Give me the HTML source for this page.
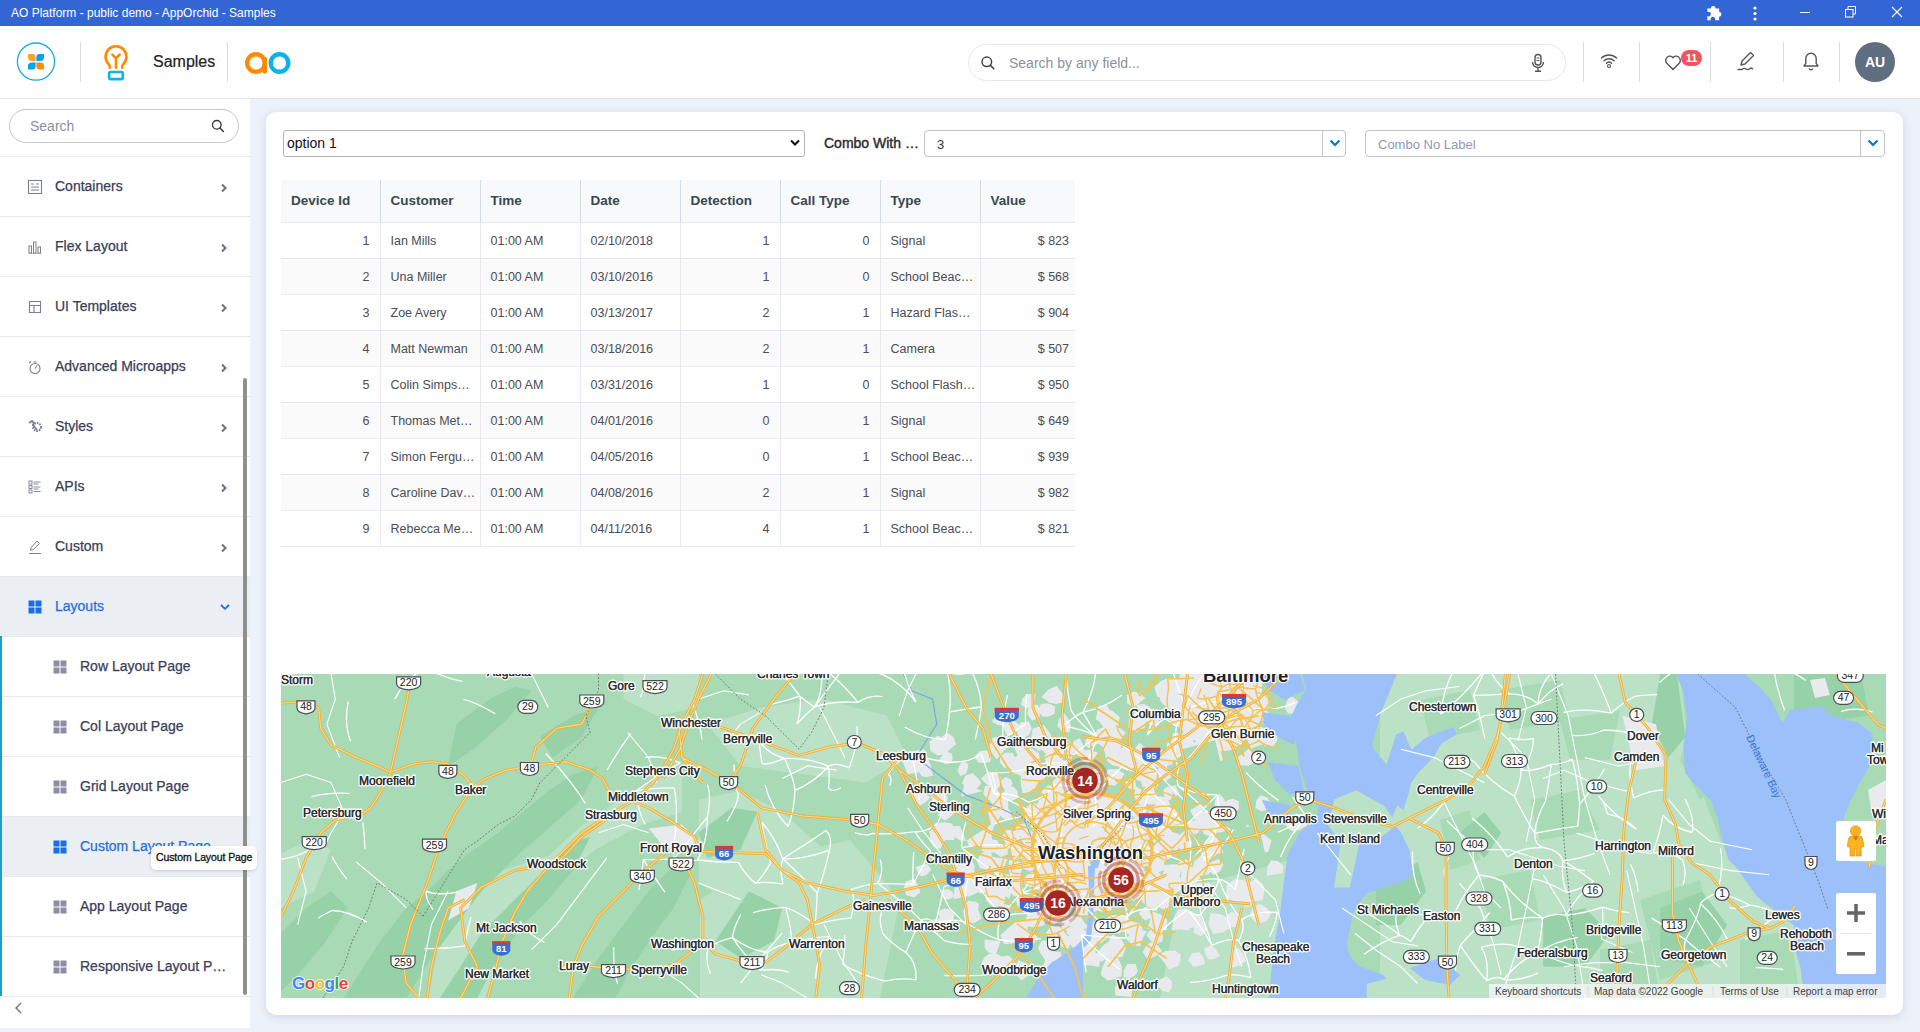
<!DOCTYPE html>
<html><head><meta charset="utf-8">
<style>
*{box-sizing:border-box;margin:0;padding:0}
html,body{width:1920px;height:1032px;overflow:hidden;font-family:"Liberation Sans",sans-serif;background:#edf1f9}
.abs{position:absolute}
#titlebar{position:absolute;left:0;top:0;width:1920px;height:26px;background:#3366d4;color:#fff;font-size:13px}
#titlebar .t{position:absolute;left:11px;top:6px;font-size:12px}
#header{position:absolute;left:0;top:26px;width:1920px;height:73px;background:#fff;border-bottom:1px solid #e3e5ea}
.vdiv{position:absolute;width:1px;background:#dcdde0}
#sidebar{position:absolute;left:0;top:99px;width:250px;height:929px;background:#fff}
.mi{position:absolute;left:0;width:250px;height:60px;border-bottom:1px solid #e6e9f3;color:#3a3d58;font-size:14px}
.mi .tx{position:absolute;left:55px;top:21px;-webkit-text-stroke:0.25px currentColor}
.mi.sub .tx{left:80px}
.mi.sel{background:#ebeef3;color:#1f6ee0}
.chev{position:absolute;left:221px;top:27px}
#card{position:absolute;left:266px;top:112px;width:1637px;height:903px;background:#fff;border-radius:10px;box-shadow:0 2px 8px rgba(150,160,195,0.35)}
table.g{position:absolute;left:281px;top:180px;border-collapse:collapse;table-layout:fixed;width:794px;font-size:12.5px;color:#4a4d55}
table.g th{height:42px;background:#f7f9fb;text-align:left;font-weight:bold;color:#3a4850;font-size:13.5px;padding:0 10px;border-right:1px solid #d3dde5;border-bottom:1px solid #e3e8ec}
table.g td{height:36px;padding:2px 10px 0 10px;border-right:1px solid #e6eaee;border-bottom:1px solid #e6eaee;white-space:nowrap}
table.g tr:nth-child(odd) td{background:#fafafa}
table.g td.r{text-align:right;padding-right:10px}
table.g td.r:last-child{padding-right:6px}
table.g th:last-child,table.g td:last-child{border-right:none}
</style></head><body>
<div id="titlebar"><span class="t">AO Platform - public demo - AppOrchid - Samples</span>
 <svg class="abs" style="left:1705px;top:2px" width="20" height="20" viewBox="0 0 17 17"><path d="M2 5.5 h3 a2 2 0 1 1 4 0 h3 v3 a2 2 0 1 1 0 4 v3 h-3.5 a2 2 0 1 0 -3.5 0 h-3 v-3.5 a2 2 0 1 0 0 -3.5z" fill="#fff"/></svg>
 <svg class="abs" style="left:1752px;top:5px" width="6" height="17" viewBox="0 0 6 17"><circle cx="3" cy="3" r="1.6" fill="#fff"/><circle cx="3" cy="8.5" r="1.6" fill="#fff"/><circle cx="3" cy="14" r="1.6" fill="#fff"/></svg>
 <div class="abs" style="left:1800px;top:12px;width:10px;height:1px;background:#fff"></div>
 <svg class="abs" style="left:1845px;top:6px" width="12" height="12" viewBox="0 0 12 12"><rect x="0.5" y="3.5" width="7.5" height="7.5" fill="none" stroke="#fff" stroke-width="1"/><path d="M3,3.5 V0.5 H10.5 V8 H8" fill="none" stroke="#fff" stroke-width="1"/></svg>
 <svg class="abs" style="left:1891px;top:6px" width="12" height="12" viewBox="0 0 12 12"><path d="M1 1 L11 11 M11 1 L1 11" stroke="#fff" stroke-width="1.1"/></svg>
</div>
<div id="header">
 <svg class="abs" style="left:16px;top:16px" width="40" height="40" viewBox="0 0 40 40">
  <circle cx="20" cy="19.6" r="18.6" fill="none" stroke="#1aaae8" stroke-width="1.3"/>
  <path d="M12,12 H16.3 Q19.6,12 19.6,15.3 V19.1 H15.8 Q12,19.1 12,15.5 Z" fill="#ffa227"/>
  <path d="M28,12 H23.7 Q20.4,12 20.4,15.3 V19.1 H24.2 Q28,19.1 28,15.5 Z" fill="#00a3ec"/>
  <path d="M12,27.5 H16.3 Q19.6,27.5 19.6,24.2 V20.4 H15.8 Q12,20.4 12,24 Z" fill="#00a3ec"/>
  <path d="M28,27.5 H23.7 Q20.4,27.5 20.4,24.2 V20.4 H24.2 Q28,20.4 28,24 Z" fill="#ff8a00"/>
 </svg>
 <div class="vdiv" style="left:80px;top:16px;height:40px"></div>
 <svg class="abs" style="left:100px;top:14px" width="32" height="44" viewBox="100 40 32 44">
  <path d="M109.8,67.8 V66.5 Q109.8,65.2 108.4,63.8 A10.4,10.4 0 1 1 123.6,63.8 Q122.2,65.2 122.2,66.5 V67.8" fill="none" stroke="#ff8a00" stroke-width="2.6" stroke-linecap="round"/>
  <path d="M112.4,54.6 L116,58.4 L119.6,54.6 M116,58.4 V67.8" fill="none" stroke="#ff8a00" stroke-width="2.6" stroke-linecap="round"/>
  <rect x="109.1" y="72" width="13.7" height="7.1" rx="1.6" fill="none" stroke="#0bb3ea" stroke-width="2.6"/>
 </svg>
 <div class="abs" style="left:153px;top:27px;font-size:16px;color:#222;-webkit-text-stroke:0.2px #222">Samples</div>
 <div class="vdiv" style="left:227px;top:16px;height:40px"></div>
 <svg class="abs" style="left:244px;top:25px" width="50" height="24" viewBox="0 0 50 24">
  <circle cx="12" cy="12" r="8.8" fill="none" stroke="#ff8a00" stroke-width="4.4"/>
  <path d="M20.8 8 v12.5" stroke="#ff8a00" stroke-width="4.4" stroke-linecap="round"/>
  <circle cx="35.5" cy="12" r="8.8" fill="none" stroke="#0bb3ea" stroke-width="4.4"/>
 </svg>
 <div class="abs" style="left:968px;top:18px;width:598px;height:37px;border:1px solid #e6e7ea;border-radius:19px"></div>
 <svg class="abs" style="left:980px;top:29px" width="16" height="16" viewBox="0 0 16 16"><circle cx="6.8" cy="6.8" r="4.8" fill="none" stroke="#444" stroke-width="1.5"/><path d="M10.4 10.4 l3.4 3.4" stroke="#444" stroke-width="1.6" stroke-linecap="round"/></svg>
 <div class="abs" style="left:1009px;top:29px;font-size:14px;color:#8c919c">Search by any field...</div>
 <svg class="abs" style="left:1528px;top:27px" width="20" height="20" viewBox="0 0 20 20"><rect x="7" y="1.5" width="6" height="10.5" rx="3" fill="none" stroke="#555" stroke-width="1.4"/><path d="M4.5 9 a5.5 5.5 0 0 0 11 0 M10 14.5 v3.5 M7 18.2 h6" fill="none" stroke="#555" stroke-width="1.4"/><path d="M8.5 5 h3 M8.5 7.5 h3" stroke="#555" stroke-width="1"/></svg>
 <div class="vdiv" style="left:1583px;top:16px;height:40px"></div>
 <svg class="abs" style="left:1599px;top:25px" width="20" height="18" viewBox="0 0 20 18"><path d="M2.5 7 a11 11 0 0 1 15 0 M5 9.8 a7 7 0 0 1 10 0 M7.5 12.3 a3.6 3.6 0 0 1 5 0" fill="none" stroke="#555" stroke-width="1.4" stroke-linecap="round"/><circle cx="10" cy="15" r="1.5" fill="none" stroke="#555" stroke-width="1.2"/></svg>
 <div class="vdiv" style="left:1639px;top:16px;height:40px"></div>
 <svg class="abs" style="left:1664px;top:28px" width="18" height="18" viewBox="0 0 18 18"><path d="M9 15.5 L2.6 9 a3.9 3.9 0 0 1 6.4 -5.2 a3.9 3.9 0 0 1 6.4 5.2 z" fill="none" stroke="#555" stroke-width="1.4" stroke-linejoin="round"/></svg>
 <div class="abs" style="left:1681px;top:24px;width:21px;height:16px;border-radius:8px;background:#f2545b;color:#fff;font-size:11px;font-weight:bold;text-align:center;line-height:16px">11</div>
 <div class="vdiv" style="left:1710px;top:16px;height:40px"></div>
 <svg class="abs" style="left:1736px;top:24px" width="22" height="22" viewBox="0 0 22 22"><path d="M14.5 2.5 l3 3 l-8.5 8.5 l-4 1 l1 -4 z" fill="none" stroke="#555" stroke-width="1.4" stroke-linejoin="round"/><path d="M2 19.5 h4 q2 -2 4 -0.5 q2 1.5 4 -0.5 q1 -1 2.5 0.3" fill="none" stroke="#555" stroke-width="1.4" stroke-linecap="round"/></svg>
 <div class="vdiv" style="left:1783px;top:16px;height:40px"></div>
 <svg class="abs" style="left:1801px;top:25px" width="20" height="21" viewBox="0 0 20 21"><path d="M3 15 h14 l-1.8 -2.6 v-5 a5.2 5.2 0 0 0 -10.4 0 v5 z" fill="none" stroke="#555" stroke-width="1.4" stroke-linejoin="round"/><path d="M8 17.5 a2.2 2.2 0 0 0 4 0" fill="none" stroke="#555" stroke-width="1.4"/></svg>
 <div class="vdiv" style="left:1839px;top:16px;height:40px"></div>
 <div class="abs" style="left:1855px;top:16px;width:40px;height:40px;border-radius:50%;background:#5f6e80;color:#fff;font-size:14px;font-weight:bold;text-align:center;line-height:40px">AU</div>
</div>
<div id="sidebar">
<div class="abs" style="left:9px;top:10px;width:230px;height:34px;border:1px solid #c6c6c6;border-radius:17px"></div><div class="abs" style="left:30px;top:19px;font-size:14px;color:#8b8fa0">Search</div><svg class="abs" style="left:210px;top:19px" width="16" height="16" viewBox="0 0 16 16"><circle cx="6.8" cy="6.8" r="4.3" fill="none" stroke="#333" stroke-width="1.3"/><path d="M9.9 9.9 l3.6 3.6" stroke="#333" stroke-width="1.4" stroke-linecap="round"/></svg><div class="abs" style="left:0;top:57px;width:250px;height:1px;background:#e6e9f3"></div><div class="mi" style="top:58px"><svg class="abs" style="left:27px;top:22px" width="16" height="16" viewBox="0 0 16 16"><rect x="1.5" y="1.5" width="13" height="13" fill="none" stroke="#7a7f96" stroke-width="1.1"/><path d="M4 5 h3 M9 5 h3 M4 8 h8 M4 11 h8" stroke="#7a7f96" stroke-width="1"/></svg><span class="tx">Containers</span><svg class="abs" style="left:219px;top:26px" width="10" height="10" viewBox="0 0 10 10"><path d="M3 1.5 L6.5 5 L3 8.5" fill="none" stroke="#6b6f85" stroke-width="2"/></svg></div>
<div class="mi" style="top:118px"><svg class="abs" style="left:27px;top:22px" width="16" height="16" viewBox="0 0 16 16"><rect x="2" y="7" width="2.5" height="7" fill="none" stroke="#7a7f96" stroke-width="1"/><rect x="6.5" y="3" width="2.5" height="11" fill="none" stroke="#7a7f96" stroke-width="1"/><rect x="11" y="8" width="2.5" height="6" fill="none" stroke="#7a7f96" stroke-width="1"/><path d="M1.5 14.5 h13" stroke="#b8a070" stroke-width="0.8"/></svg><span class="tx">Flex Layout</span><svg class="abs" style="left:219px;top:26px" width="10" height="10" viewBox="0 0 10 10"><path d="M3 1.5 L6.5 5 L3 8.5" fill="none" stroke="#6b6f85" stroke-width="2"/></svg></div>
<div class="mi" style="top:178px"><svg class="abs" style="left:27px;top:22px" width="16" height="16" viewBox="0 0 16 16"><rect x="2.5" y="2.5" width="11" height="11" fill="none" stroke="#7a7f96" stroke-width="1.1"/><path d="M2.5 6.5 h11 M7 6.5 v7" stroke="#7a7f96" stroke-width="1.1"/></svg><span class="tx">UI Templates</span><svg class="abs" style="left:219px;top:26px" width="10" height="10" viewBox="0 0 10 10"><path d="M3 1.5 L6.5 5 L3 8.5" fill="none" stroke="#6b6f85" stroke-width="2"/></svg></div>
<div class="mi" style="top:238px"><svg class="abs" style="left:27px;top:22px" width="16" height="16" viewBox="0 0 16 16"><circle cx="8" cy="9.5" r="5" fill="none" stroke="#7a7f96" stroke-width="1.1"/><path d="M8 9.5 l2 -3 M2 4 l2 -1.5 M6.5 3 h3" stroke="#7a7f96" stroke-width="1.1"/></svg><span class="tx">Advanced Microapps</span><svg class="abs" style="left:219px;top:26px" width="10" height="10" viewBox="0 0 10 10"><path d="M3 1.5 L6.5 5 L3 8.5" fill="none" stroke="#6b6f85" stroke-width="2"/></svg></div>
<div class="mi" style="top:298px"><svg class="abs" style="left:27px;top:22px" width="16" height="16" viewBox="0 0 16 16"><path d="M2 4 l3 -2 l2 2 l-1 2 l4 5" fill="none" stroke="#7a7f96" stroke-width="1.8"/><circle cx="10" cy="8" r="4" fill="none" stroke="#7a7f96" stroke-width="2" stroke-dasharray="1.6 1"/></svg><span class="tx">Styles</span><svg class="abs" style="left:219px;top:26px" width="10" height="10" viewBox="0 0 10 10"><path d="M3 1.5 L6.5 5 L3 8.5" fill="none" stroke="#6b6f85" stroke-width="2"/></svg></div>
<div class="mi" style="top:358px"><svg class="abs" style="left:27px;top:22px" width="16" height="16" viewBox="0 0 16 16"><rect x="2" y="2" width="3" height="3" fill="none" stroke="#7a7f96" stroke-width="0.9"/><rect x="2" y="6.5" width="3" height="3" fill="none" stroke="#7a7f96" stroke-width="0.9"/><rect x="2" y="11" width="3" height="3" fill="none" stroke="#7a7f96" stroke-width="0.9"/><path d="M6.5 3 h7 M6.5 5 h5 M6.5 8 h7 M6.5 10 h5 M6.5 12.5 h7" stroke="#7a7f96" stroke-width="0.9"/></svg><span class="tx">APIs</span><svg class="abs" style="left:219px;top:26px" width="10" height="10" viewBox="0 0 10 10"><path d="M3 1.5 L6.5 5 L3 8.5" fill="none" stroke="#6b6f85" stroke-width="2"/></svg></div>
<div class="mi" style="top:418px"><svg class="abs" style="left:27px;top:22px" width="16" height="16" viewBox="0 0 16 16"><path d="M10 2 l2.5 2.5 l-6 6 l-3 0.8 l0.8 -3 z" fill="none" stroke="#7a7f96" stroke-width="1"/><path d="M2 14.5 h12" stroke="#7a7f96" stroke-width="1"/></svg><span class="tx">Custom</span><svg class="abs" style="left:219px;top:26px" width="10" height="10" viewBox="0 0 10 10"><path d="M3 1.5 L6.5 5 L3 8.5" fill="none" stroke="#6b6f85" stroke-width="2"/></svg></div>
<div class="mi sel" style="top:478px"><svg class="abs" style="left:27px;top:22px" width="16" height="16" viewBox="0 0 16 16"><rect x="1.5" y="1.5" width="6" height="6" fill="#1a6fe6"/><rect x="8.5" y="1.5" width="6" height="6" fill="#1a6fe6"/><rect x="1.5" y="8.5" width="6" height="6" fill="#1a6fe6"/><rect x="8.5" y="8.5" width="6" height="6" fill="#1a6fe6"/></svg><span class="tx">Layouts</span><svg class="abs" style="left:219px;top:25px" width="12" height="10" viewBox="0 0 12 10"><path d="M2 3 L6 6.8 L10 3" fill="none" stroke="#1a6fe6" stroke-width="1.8"/></svg></div>
<div class="mi sub" style="top:538px"><svg class="abs" style="left:52px;top:22px" width="16" height="16" viewBox="0 0 16 16"><rect x="1.5" y="1.5" width="6" height="6" fill="#8c8ea6"/><rect x="8.5" y="1.5" width="6" height="6" fill="#8c8ea6"/><rect x="1.5" y="8.5" width="6" height="6" fill="#8c8ea6"/><rect x="8.5" y="8.5" width="6" height="6" fill="#8c8ea6"/></svg><span class="tx">Row Layout Page</span></div>
<div class="mi sub" style="top:598px"><svg class="abs" style="left:52px;top:22px" width="16" height="16" viewBox="0 0 16 16"><rect x="1.5" y="1.5" width="6" height="6" fill="#8c8ea6"/><rect x="8.5" y="1.5" width="6" height="6" fill="#8c8ea6"/><rect x="1.5" y="8.5" width="6" height="6" fill="#8c8ea6"/><rect x="8.5" y="8.5" width="6" height="6" fill="#8c8ea6"/></svg><span class="tx">Col Layout Page</span></div>
<div class="mi sub" style="top:658px"><svg class="abs" style="left:52px;top:22px" width="16" height="16" viewBox="0 0 16 16"><rect x="1.5" y="1.5" width="6" height="6" fill="#8c8ea6"/><rect x="8.5" y="1.5" width="6" height="6" fill="#8c8ea6"/><rect x="1.5" y="8.5" width="6" height="6" fill="#8c8ea6"/><rect x="8.5" y="8.5" width="6" height="6" fill="#8c8ea6"/></svg><span class="tx">Grid Layout Page</span></div>
<div class="mi sub sel" style="top:718px"><svg class="abs" style="left:52px;top:22px" width="16" height="16" viewBox="0 0 16 16"><rect x="1.5" y="1.5" width="6" height="6" fill="#1a6fe6"/><rect x="8.5" y="1.5" width="6" height="6" fill="#1a6fe6"/><rect x="1.5" y="8.5" width="6" height="6" fill="#1a6fe6"/><rect x="8.5" y="8.5" width="6" height="6" fill="#1a6fe6"/></svg><span class="tx">Custom Layout Page</span></div>
<div class="mi sub" style="top:778px"><svg class="abs" style="left:52px;top:22px" width="16" height="16" viewBox="0 0 16 16"><rect x="1.5" y="1.5" width="6" height="6" fill="#8c8ea6"/><rect x="8.5" y="1.5" width="6" height="6" fill="#8c8ea6"/><rect x="1.5" y="8.5" width="6" height="6" fill="#8c8ea6"/><rect x="8.5" y="8.5" width="6" height="6" fill="#8c8ea6"/></svg><span class="tx">App Layout Page</span></div>
<div class="mi sub" style="top:838px"><svg class="abs" style="left:52px;top:22px" width="16" height="16" viewBox="0 0 16 16"><rect x="1.5" y="1.5" width="6" height="6" fill="#8c8ea6"/><rect x="8.5" y="1.5" width="6" height="6" fill="#8c8ea6"/><rect x="1.5" y="8.5" width="6" height="6" fill="#8c8ea6"/><rect x="8.5" y="8.5" width="6" height="6" fill="#8c8ea6"/></svg><span class="tx">Responsive Layout P…</span></div>
<div class="abs" style="left:0;top:537px;width:2px;height:360px;background:#1ba1c4"></div><div class="abs" style="left:243px;top:279px;width:4px;height:617px;border-radius:2px;background:#8f8f8f"></div><svg class="abs" style="left:12px;top:902px" width="14" height="14" viewBox="0 0 14 14"><path d="M9 2 L4 7 L9 12" fill="none" stroke="#6b6f85" stroke-width="1.4"/></svg></div>
<div class="abs" style="left:151px;top:846px;width:106px;height:24px;background:#fff;border-radius:5px;box-shadow:0 1px 3px rgba(0,0,0,0.15);font-size:10.5px;color:#111;padding:5px 0 0 5px;white-space:nowrap;-webkit-text-stroke:0.3px #111;letter-spacing:-0.1px">Custom Layout Page</div>
<div id="card"></div>
<div id="content">
<div class="abs" style="left:283px;top:130px;width:522px;height:27px;border:1px solid #b5b5b5;border-radius:3px;background:#fff"></div><div class="abs" style="left:287px;top:135px;font-size:14px;color:#111">option 1</div><svg class="abs" style="left:789px;top:138px" width="12" height="10" viewBox="0 0 12 10"><path d="M2 2.5 L6 6.5 L10 2.5" fill="none" stroke="#111" stroke-width="2"/></svg><div class="abs" style="left:824px;top:135px;font-size:14px;color:#2b2b2b;-webkit-text-stroke:0.4px #2b2b2b">Combo With …</div><div class="abs" style="left:924px;top:130px;width:422px;height:27px;border:1px solid #c4c4c4;border-radius:4px;background:#fff"></div><div class="abs" style="left:1322px;top:131px;width:1px;height:25px;background:#c4c4c4"></div><svg class="abs" style="left:1329px;top:138px" width="12" height="10" viewBox="0 0 12 10"><path d="M1.5 2.5 L6 7 L10.5 2.5" fill="none" stroke="#0a78cc" stroke-width="2.2"/></svg><div class="abs" style="left:937px;top:137px;font-size:13px;color:#333">3</div><div class="abs" style="left:1365px;top:130px;width:520px;height:27px;border:1px solid #c4c4c4;border-radius:4px;background:#fff"></div><div class="abs" style="left:1860px;top:131px;width:1px;height:25px;background:#c4c4c4"></div><svg class="abs" style="left:1867px;top:138px" width="12" height="10" viewBox="0 0 12 10"><path d="M1.5 2.5 L6 7 L10.5 2.5" fill="none" stroke="#0a78cc" stroke-width="2.2"/></svg><div class="abs" style="left:1378px;top:137px;font-size:13px;color:#8d9ab3">Combo No Label</div><table class="g"><colgroup><col style="width:99px"><col style="width:100px"><col style="width:100px"><col style="width:100px"><col style="width:100px"><col style="width:100px"><col style="width:100px"><col style="width:95px"></colgroup><tr><th>Device Id</th><th>Customer</th><th>Time</th><th>Date</th><th>Detection</th><th>Call Type</th><th>Type</th><th>Value</th></tr><tr><td class="r">1</td><td>Ian Mills</td><td>01:00 AM</td><td>02/10/2018</td><td class="r">1</td><td class="r">0</td><td>Signal</td><td class="r">$ 823</td></tr><tr><td class="r">2</td><td>Una Miller</td><td>01:00 AM</td><td>03/10/2016</td><td class="r">1</td><td class="r">0</td><td>School Beac…</td><td class="r">$ 568</td></tr><tr><td class="r">3</td><td>Zoe Avery</td><td>01:00 AM</td><td>03/13/2017</td><td class="r">2</td><td class="r">1</td><td>Hazard Flas…</td><td class="r">$ 904</td></tr><tr><td class="r">4</td><td>Matt Newman</td><td>01:00 AM</td><td>03/18/2016</td><td class="r">2</td><td class="r">1</td><td>Camera</td><td class="r">$ 507</td></tr><tr><td class="r">5</td><td>Colin Simps…</td><td>01:00 AM</td><td>03/31/2016</td><td class="r">1</td><td class="r">0</td><td>School Flash…</td><td class="r">$ 950</td></tr><tr><td class="r">6</td><td>Thomas Met…</td><td>01:00 AM</td><td>04/01/2016</td><td class="r">0</td><td class="r">1</td><td>Signal</td><td class="r">$ 649</td></tr><tr><td class="r">7</td><td>Simon Fergu…</td><td>01:00 AM</td><td>04/05/2016</td><td class="r">0</td><td class="r">1</td><td>School Beac…</td><td class="r">$ 939</td></tr><tr><td class="r">8</td><td>Caroline Dav…</td><td>01:00 AM</td><td>04/08/2016</td><td class="r">2</td><td class="r">1</td><td>Signal</td><td class="r">$ 982</td></tr><tr><td class="r">9</td><td>Rebecca Me…</td><td>01:00 AM</td><td>04/11/2016</td><td class="r">4</td><td class="r">1</td><td>School Beac…</td><td class="r">$ 821</td></tr></table>
<div id="map" class="abs" style="left:281px;top:674px;width:1605px;height:324px;overflow:hidden"><svg style="position:absolute;left:0;top:0" width="1605" height="324" viewBox="281 674 1605 324" font-family="Liberation Sans, sans-serif">
<rect x="281" y="674" width="1605" height="324" fill="#a8dab5"/>
<polygon points="428.6,998.0 444.3,912.6 469.4,887.5 507.1,868.7 547.9,856.1 579.3,827.8 610.7,805.9 642.1,787.0 682.0,768.2 682.0,812.1 642.1,824.7 595.0,849.8 563.6,874.9 532.2,900.1 507.1,931.5 485.1,998.0" fill="#bbe2c6"/>
<polygon points="698.7,799.3 740.5,791.0 782.3,811.8 824.0,849.4 803.1,891.2 740.5,907.9 698.7,882.9" fill="#bbe2c6"/>
<polygon points="707.1,724.1 761.4,707.4 824.0,699.1 886.7,715.8 907.6,757.5 865.8,782.6 803.1,774.3 740.5,765.9" fill="#bbe2c6"/>
<polygon points="761.4,857.8 824.0,853.6 874.1,870.3 882.5,907.9 844.9,933.0 803.1,924.6 773.9,891.2" fill="#bbe2c6"/>
<polygon points="281.0,853.6 306.1,841.1 331.1,849.4 314.4,891.2 281.0,907.9" fill="#bbe2c6"/>
<polygon points="623.5,674.0 698.7,674.0 698.7,707.4 656.9,715.8 623.5,699.1" fill="#bbe2c6"/>
<polygon points="1451.0,791.1 1501.2,778.6 1564.0,782.7 1626.7,799.5 1668.5,820.4 1647.6,862.2 1584.9,874.8 1522.1,870.6 1480.3,849.7" fill="#bbe2c6"/>
<polygon points="1501.2,883.1 1564.0,891.5 1605.8,908.2 1584.9,945.9 1522.1,945.9 1492.9,916.6" fill="#bbe2c6"/>
<polygon points="1626.7,674.0 1676.9,674.0 1685.3,757.6 1660.2,791.1 1626.7,778.6" fill="#bbe2c6"/>
<polygon points="1380.0,674.0 1680.0,674.0 1690.0,760.0 1720.0,840.0 1760.0,900.0 1800.0,930.0 1810.0,998.0 1380.0,998.0" fill="#bbe2c6"/>
<polygon points="1180.0,890.0 1290.0,860.0 1290.0,998.0 1160.0,998.0" fill="#bbe2c6"/>
<polygon points="700.0,900.0 760.0,860.0 850.0,840.0 900.0,900.0 880.0,998.0 700.0,998.0" fill="#bbe2c6"/>
<polygon points="1420.0,700.0 1470.0,690.0 1480.0,730.0 1430.0,740.0" fill="#a8dab5"/>
<polygon points="1500.0,690.0 1560.0,680.0 1570.0,720.0 1510.0,730.0" fill="#a8dab5"/>
<polygon points="1530.0,800.0 1580.0,790.0 1600.0,830.0 1540.0,840.0" fill="#a8dab5"/>
<polygon points="1480.0,880.0 1530.0,870.0 1540.0,920.0 1490.0,930.0" fill="#a8dab5"/>
<polygon points="1640.0,900.0 1700.0,880.0 1720.0,960.0 1660.0,980.0" fill="#a8dab5"/>
<polygon points="1600.0,950.0 1650.0,940.0 1660.0,998.0 1600.0,998.0" fill="#a8dab5"/>
<polygon points="1700.0,690.0 1680.0,760.0 1700.0,800.0 1720.0,780.0" fill="#a8dab5"/>
<polygon points="1440.0,820.0 1470.0,810.0 1480.0,860.0 1450.0,870.0" fill="#a8dab5"/>
<polygon points="1560.0,720.0 1620.0,710.0 1610.0,760.0 1570.0,760.0" fill="#a8dab5"/>
<polygon points="1740.0,940.0 1790.0,930.0 1800.0,998.0 1740.0,998.0" fill="#a8dab5"/>
<polygon points="343.7,998.1 377.1,945.5 406.3,907.9 427.2,891.2 448.1,870.3 469.0,853.6 498.2,832.7 523.3,811.8 548.3,791.0 573.4,774.3 598.5,765.9 581.8,799.3 548.3,828.6 514.9,857.8 481.5,891.2 456.4,924.6 431.4,958.0 406.3,998.1" fill="#97d1a8"/>
<polygon points="439.7,998.1 460.6,966.4 481.5,933.0 506.6,907.9 531.6,882.9 556.7,857.8 573.4,841.1 590.1,836.9 573.4,870.3 548.3,899.6 523.3,924.6 498.2,958.0 477.3,998.1" fill="#97d1a8"/>
<polygon points="573.4,998.1 598.5,958.0 623.5,924.6 648.6,891.2 673.6,866.1 690.4,874.5 673.6,907.9 648.6,941.3 627.7,974.8 615.2,998.1" fill="#97d1a8"/>
<polygon points="281.0,933.0 306.1,907.9 331.1,891.2 347.8,907.9 322.8,945.5 297.7,974.8 281.0,991.5" fill="#97d1a8"/>
<polygon points="456.4,724.1 489.9,699.1 514.9,686.5 531.6,690.7 506.6,719.9 473.1,749.2 448.1,765.9" fill="#97d1a8"/>
<polygon points="540.0,736.7 573.4,715.8 598.5,707.4 581.8,736.7 552.5,757.5" fill="#97d1a8"/>
<polygon points="698.7,832.7 732.1,807.7 757.2,811.8 740.5,849.4 707.1,857.8" fill="#97d1a8"/>
<polygon points="748.8,891.2 782.3,907.9 773.9,941.3 740.5,958.0 715.4,941.3" fill="#97d1a8"/>
<polygon points="1375.8,883.1 1417.6,862.2 1426.0,891.5 1400.9,924.9 1375.8,924.9" fill="#97d1a8"/>
<polygon points="1543.1,916.6 1584.9,908.2 1610.0,933.3 1584.9,966.8 1543.1,966.8" fill="#97d1a8"/>
<polygon points="1660.2,908.2 1702.0,891.5 1727.1,924.9 1702.0,966.8 1660.2,958.4" fill="#97d1a8"/>
<polygon points="1660.2,674.0 1676.9,674.0 1685.3,736.7 1668.5,757.6 1651.8,724.2" fill="#97d1a8"/>
<polygon points="1794.0,674.0 1860.9,674.0 1869.3,715.8 1835.8,720.0 1794.0,711.6" fill="#97d1a8"/>
<polygon points="1459.4,832.9 1484.5,812.0 1501.2,832.9 1484.5,858.0" fill="#97d1a8"/>
<polygon points="899.2,753.4 924.3,749.2 932.6,770.1 907.6,774.3" fill="#e8eaed"/>
<polygon points="648.6,828.6 682.0,824.4 698.7,841.1 669.5,853.6" fill="#e8eaed"/>
<polygon points="456.4,891.2 477.3,882.9 469.0,907.9 448.1,920.4" fill="#e8eaed"/>
<polygon points="1622.5,715.8 1656.0,724.2 1664.3,766.0 1635.1,770.2" fill="#e8eaed"/>
<polygon points="1810.0,680.0 1825.0,678.0 1830.0,695.0 1815.0,698.0" fill="#e8eaed"/>
<polygon points="1868.0,790.0 1886.0,780.0 1886.0,810.0 1872.0,815.0" fill="#e8eaed"/>
<polygon points="1850.0,830.0 1870.0,825.0 1866.0,845.0 1852.0,848.0" fill="#e8eaed"/>
<polygon points="1040.0,800.0 1070.0,790.0 1110.0,795.0 1140.0,815.0 1150.0,850.0 1140.0,885.0 1110.0,905.0 1070.0,905.0 1040.0,885.0 1030.0,850.0" fill="#e8eaed"/>
<polygon points="1180.0,674.0 1262.0,674.0 1262.0,720.0 1240.0,740.0 1200.0,745.0 1170.0,720.0" fill="#e8eaed"/>
<path d="M913.9,878.8 L918.2,885.2 L920.5,892.2 L914.3,897.3 L906.7,895.4 L903.4,888.6 L906.1,881.4Z M926.7,777.2 L921.5,776.0 L918.3,770.7 L922.1,765.8 L927.9,764.8 L931.3,769.2 L933.2,775.5Z M920.0,805.7 L916.0,800.9 L911.9,794.0 L919.3,790.7 L924.7,793.5 L930.4,797.6 L925.3,802.5Z M915.6,866.9 L921.2,864.9 L927.0,863.8 L931.4,869.6 L926.7,874.8 L921.3,876.5 L917.5,872.6Z M930.4,751.1 L929.4,741.5 L937.4,735.7 L946.0,738.6 L952.9,746.4 L945.7,753.7 L937.9,755.5Z M930.5,795.5 L936.1,791.0 L942.1,792.4 L947.9,796.8 L946.5,805.4 L938.3,804.1 L933.0,802.0Z M943.2,843.2 L932.1,842.4 L929.1,831.7 L936.4,825.8 L943.2,823.4 L953.2,826.6 L947.9,835.6Z M943.6,843.0 L940.4,849.0 L934.0,846.9 L930.8,842.3 L929.7,834.6 L937.6,830.2 L946.7,834.2Z M932.4,932.6 L932.7,925.7 L933.7,918.9 L941.1,918.2 L943.5,924.3 L945.8,930.5 L939.2,931.5Z M956.1,744.3 L950.0,748.6 L943.0,749.8 L942.2,742.9 L941.4,737.3 L947.2,732.5 L953.4,737.1Z M950.8,763.2 L945.2,763.9 L938.7,760.8 L942.7,754.8 L946.6,751.8 L951.5,753.3 L952.7,758.2Z M945.0,820.8 L937.6,814.9 L941.2,807.1 L946.3,803.0 L951.9,805.6 L955.5,810.7 L951.7,815.9Z M944.6,822.3 L951.3,823.5 L957.2,829.9 L954.0,839.9 L943.5,840.2 L937.6,833.6 L934.4,823.7Z M954.6,896.6 L949.7,899.3 L944.7,899.8 L940.9,895.3 L943.2,889.8 L948.4,889.2 L952.2,891.5Z M953.4,919.4 L947.0,924.6 L940.4,919.6 L937.4,912.1 L944.3,908.6 L949.3,909.6 L955.0,912.5Z M965.9,773.8 L960.2,775.9 L957.6,770.4 L959.3,766.1 L962.7,760.8 L968.4,764.1 L967.6,769.6Z M968.1,841.3 L959.9,840.2 L952.0,835.4 L954.5,826.0 L963.0,825.7 L969.1,827.1 L974.6,834.3Z M958.6,870.4 L952.0,861.8 L962.8,860.4 L970.9,858.1 L974.8,866.4 L973.4,876.6 L963.1,876.3Z M950.5,884.1 L949.7,875.8 L952.1,869.4 L958.8,868.5 L968.1,870.5 L967.3,880.6 L959.7,886.8Z M954.2,889.5 L955.9,883.1 L962.4,881.7 L971.6,883.2 L973.4,894.0 L963.5,896.8 L954.0,899.2Z M976.4,789.2 L967.9,790.5 L962.0,783.3 L965.4,775.4 L972.4,773.3 L977.1,777.2 L981.6,783.0Z M974.7,805.0 L967.1,803.1 L961.1,796.3 L964.0,785.7 L974.3,788.2 L982.9,791.0 L983.9,801.5Z M983.1,838.5 L980.9,844.0 L976.0,846.8 L968.4,846.0 L966.4,837.7 L973.0,833.5 L979.3,833.5Z M967.0,871.9 L977.3,874.4 L986.1,877.6 L986.9,888.3 L977.5,892.6 L970.6,888.4 L967.2,882.5Z M977.3,892.7 L968.7,896.8 L959.8,893.2 L957.5,883.6 L963.8,876.3 L973.7,875.0 L980.5,883.0Z M978.3,908.8 L974.9,912.8 L969.3,912.1 L965.4,907.0 L967.9,900.5 L974.1,901.8 L979.0,903.6Z M965.1,920.2 L963.3,911.8 L965.9,902.4 L976.4,901.3 L978.5,910.6 L981.7,918.5 L973.7,923.4Z M991.9,755.2 L989.8,762.2 L983.8,763.0 L978.1,762.5 L974.3,756.2 L979.8,751.3 L986.5,750.1Z M974.7,828.2 L974.1,816.5 L984.4,814.1 L992.2,814.2 L995.0,821.6 L993.0,829.4 L985.0,830.3Z M992.7,829.8 L987.9,837.0 L978.7,834.7 L978.9,826.1 L982.2,821.7 L988.2,816.0 L996.0,821.5Z M991.6,835.6 L992.3,842.4 L986.7,848.4 L979.0,845.1 L972.4,837.7 L979.3,830.4 L988.5,826.0Z M980.0,868.0 L976.8,860.9 L980.7,853.4 L990.1,850.1 L993.3,859.3 L994.4,867.2 L986.9,869.7Z M982.9,874.8 L990.4,871.9 L992.6,879.9 L990.3,886.8 L982.9,889.6 L975.3,885.4 L978.9,878.0Z M990.9,886.3 L988.0,892.1 L980.9,893.8 L974.0,888.6 L977.9,881.3 L983.3,877.2 L990.7,879.0Z M999.5,711.8 L1003.2,715.8 L1004.5,719.5 L1004.0,725.9 L997.5,725.0 L991.9,721.2 L996.2,716.2Z M1002.9,752.0 L996.8,759.4 L990.9,751.8 L989.8,745.3 L992.8,737.5 L1002.6,736.4 L1010.7,744.4Z M980.8,778.7 L988.3,771.8 L996.0,772.8 L1001.1,777.2 L1000.7,784.3 L995.3,793.0 L988.1,785.7Z M985.1,786.1 L992.5,786.0 L997.1,789.1 L999.9,795.1 L995.2,801.5 L987.7,799.5 L983.1,793.7Z M989.2,799.9 L996.2,794.2 L1004.4,793.7 L1008.2,800.6 L1008.3,809.0 L1000.1,813.3 L994.3,807.1Z M991.0,827.1 L982.4,822.0 L978.8,811.3 L989.4,808.3 L998.6,804.8 L1001.4,814.3 L997.6,820.9Z M990.2,839.0 L997.4,840.2 L999.8,847.2 L995.4,852.2 L989.7,853.0 L981.5,850.9 L983.8,842.4Z M1007.9,846.5 L1007.7,854.4 L1000.7,856.9 L996.0,853.4 L992.8,849.0 L996.4,844.7 L1001.2,845.0Z M1007.2,859.1 L1004.3,867.8 L997.9,870.1 L989.9,871.9 L990.2,863.7 L991.2,856.7 L998.2,857.8Z M991.1,875.2 L998.3,871.5 L1004.0,873.2 L1008.6,877.4 L1008.1,885.4 L1000.2,885.5 L993.8,883.1Z M986.1,900.6 L985.4,889.6 L996.4,887.0 L1004.8,891.7 L1005.2,900.5 L1001.7,909.9 L992.3,906.4Z M984.5,939.4 L992.8,940.2 L1000.4,941.2 L998.2,948.5 L995.6,955.1 L988.8,952.8 L984.7,947.8Z M986.0,973.3 L980.6,965.6 L984.4,957.3 L992.7,951.6 L1002.4,957.1 L999.6,966.9 L994.6,972.5Z M1019.7,725.0 L1015.6,733.2 L1006.7,735.5 L1003.8,727.5 L1001.1,721.0 L1007.3,716.5 L1013.2,720.0Z M1015.4,760.0 L1011.5,766.2 L1004.3,768.1 L999.7,762.4 L1000.4,755.8 L1005.8,752.8 L1012.9,752.8Z M1010.5,779.0 L1012.7,783.3 L1011.0,787.5 L1006.4,792.9 L1002.7,786.8 L1000.4,781.4 L1005.1,776.9Z M1013.2,786.2 L1017.6,791.0 L1018.1,797.7 L1012.2,800.8 L1006.0,799.4 L1002.8,793.3 L1006.9,787.9Z M1001.7,817.3 L999.5,813.2 L1002.5,809.9 L1007.0,807.4 L1010.6,811.5 L1012.0,817.7 L1006.0,820.0Z M1005.1,842.3 L1002.0,836.5 L1006.4,829.6 L1015.0,830.9 L1020.5,837.8 L1016.8,845.9 L1008.9,849.3Z M1009.0,885.5 L1003.7,881.7 L1005.2,874.4 L1012.0,874.4 L1017.9,875.7 L1020.6,882.5 L1014.5,886.2Z M1002.8,895.6 L999.1,893.3 L997.9,888.0 L1002.9,886.0 L1006.9,887.5 L1011.3,891.2 L1009.7,898.5Z M997.4,905.8 L1003.6,903.9 L1010.0,905.2 L1010.2,911.7 L1007.9,918.2 L1000.9,917.2 L997.1,912.3Z M1020.7,939.8 L1013.1,943.3 L1004.1,944.3 L1000.3,935.3 L1006.6,929.6 L1013.8,923.7 L1019.8,931.1Z M1014.6,968.6 L1007.9,975.1 L999.5,970.9 L1000.1,963.4 L1001.0,956.4 L1008.6,955.5 L1014.0,960.6Z M1022.9,739.1 L1017.2,733.9 L1017.1,727.4 L1021.0,722.2 L1028.7,721.3 L1031.8,728.5 L1029.2,734.8Z M1027.0,753.1 L1019.9,757.7 L1015.2,750.8 L1014.5,744.3 L1018.9,738.5 L1026.7,739.7 L1028.1,746.7Z M1019.7,751.4 L1023.4,757.4 L1024.2,761.6 L1022.5,767.3 L1016.7,765.6 L1011.9,761.8 L1015.9,757.3Z M1007.5,765.9 L1012.7,756.8 L1022.5,756.5 L1030.7,762.1 L1026.1,770.3 L1021.1,776.0 L1013.9,772.9Z M1014.2,834.6 L1015.9,827.3 L1020.3,823.9 L1026.5,822.9 L1029.2,828.8 L1027.8,835.2 L1021.5,836.6Z M1009.8,851.2 L1014.9,842.7 L1023.5,843.8 L1029.0,848.1 L1030.4,855.9 L1023.0,858.3 L1013.9,860.6Z M1022.3,868.0 L1020.0,877.1 L1010.2,875.3 L1008.4,867.2 L1009.1,860.2 L1015.8,860.0 L1020.8,862.2Z M1022.0,885.0 L1019.6,892.8 L1011.6,890.0 L1007.1,883.2 L1010.8,875.7 L1018.6,873.9 L1022.5,879.9Z M1015.3,880.6 L1019.8,884.1 L1023.0,887.9 L1022.1,895.0 L1014.4,896.5 L1009.0,891.1 L1009.2,883.8Z M1022.9,908.6 L1017.4,906.0 L1016.1,898.9 L1022.5,896.1 L1028.0,897.5 L1031.6,902.4 L1029.4,908.9Z M1018.7,935.2 L1012.4,929.5 L1014.5,920.9 L1022.2,919.8 L1027.2,922.9 L1027.8,928.0 L1026.5,934.7Z M1019.6,941.1 L1012.7,939.6 L1010.9,933.4 L1011.4,926.5 L1018.3,927.2 L1025.8,928.3 L1022.4,935.2Z M1016.0,968.1 L1018.1,960.5 L1025.6,963.1 L1030.3,968.4 L1028.4,975.6 L1021.3,980.5 L1015.8,974.1Z M1026.4,707.9 L1021.2,705.1 L1022.2,699.1 L1026.6,694.2 L1035.6,693.8 L1034.2,702.6 L1032.6,708.7Z M1032.1,720.7 L1027.5,714.6 L1028.2,708.7 L1032.1,704.1 L1038.4,705.3 L1039.6,711.1 L1039.4,717.7Z M1022.4,753.0 L1030.8,747.7 L1038.9,753.5 L1040.6,762.7 L1034.5,769.6 L1026.7,766.5 L1020.4,761.7Z M1030.2,772.4 L1040.0,774.9 L1038.2,784.9 L1032.8,791.6 L1022.5,793.2 L1020.7,783.0 L1021.1,774.1Z M1031.7,802.8 L1041.7,805.0 L1047.0,813.3 L1040.1,819.1 L1034.5,823.2 L1025.3,820.7 L1024.1,810.3Z M1029.2,830.1 L1038.8,835.5 L1042.7,843.6 L1039.6,852.8 L1029.9,854.3 L1025.9,846.8 L1019.8,837.7Z M1035.8,851.3 L1035.9,856.7 L1032.2,862.7 L1026.4,858.7 L1022.0,854.0 L1025.4,848.0 L1032.3,844.8Z M1037.7,864.3 L1035.6,869.1 L1030.2,871.2 L1023.0,868.5 L1022.1,859.6 L1030.1,857.1 L1036.0,859.0Z M1024.1,878.4 L1027.3,874.7 L1033.0,871.4 L1034.8,877.8 L1035.5,883.1 L1030.6,887.6 L1024.6,884.2Z M1026.9,914.7 L1021.3,910.3 L1020.2,903.8 L1024.4,898.6 L1029.5,902.2 L1033.0,905.0 L1032.1,910.2Z M1027.1,914.9 L1033.5,910.7 L1041.7,909.2 L1047.2,916.9 L1043.6,925.7 L1035.0,927.6 L1023.8,925.8Z M1037.7,937.0 L1034.4,943.1 L1027.7,945.6 L1021.9,941.1 L1022.4,934.0 L1027.8,930.6 L1032.9,932.7Z M1054.4,713.9 L1049.0,716.6 L1043.1,716.8 L1037.7,711.4 L1041.0,703.7 L1048.7,703.5 L1055.3,706.6Z M1037.5,750.7 L1030.5,740.8 L1032.7,728.8 L1043.9,725.1 L1049.9,733.1 L1052.9,740.0 L1049.0,748.9Z M1044.6,753.0 L1041.6,748.3 L1042.5,741.8 L1049.2,740.5 L1053.9,744.4 L1055.2,750.6 L1051.2,758.0Z M1038.7,765.1 L1045.2,768.4 L1046.5,774.9 L1043.5,781.2 L1036.7,780.3 L1033.8,775.5 L1034.4,770.4Z M1050.0,784.9 L1053.8,789.7 L1057.5,796.5 L1051.0,802.3 L1045.3,796.7 L1041.0,792.7 L1044.5,787.7Z M1039.2,799.7 L1045.4,796.8 L1052.3,799.0 L1052.9,806.3 L1049.9,813.9 L1042.1,811.4 L1036.1,806.7Z M1046.4,811.5 L1054.1,811.7 L1056.0,819.1 L1052.6,824.4 L1046.0,830.4 L1040.3,823.2 L1040.7,815.7Z M1030.9,828.8 L1030.1,820.3 L1037.6,816.1 L1043.6,820.3 L1050.2,825.7 L1043.0,830.3 L1037.0,833.5Z M1042.5,867.0 L1034.2,861.2 L1037.0,852.1 L1043.3,847.7 L1050.8,849.0 L1058.9,856.2 L1052.2,865.1Z M1048.7,869.2 L1045.3,874.6 L1038.4,872.9 L1033.4,866.3 L1038.7,860.0 L1046.1,857.3 L1053.1,862.4Z M1044.5,868.6 L1048.9,873.8 L1054.3,880.3 L1047.1,884.9 L1039.3,885.6 L1035.6,878.6 L1037.5,871.4Z M1040.5,892.1 L1032.7,886.7 L1037.1,877.5 L1046.8,874.6 L1052.7,881.8 L1051.5,889.0 L1047.9,897.4Z M1030.2,901.9 L1040.8,900.9 L1050.0,900.6 L1051.4,910.0 L1047.5,918.0 L1038.9,917.3 L1034.0,911.8Z M1040.4,953.3 L1038.0,947.7 L1041.2,941.4 L1049.6,939.1 L1055.6,946.3 L1053.0,954.7 L1045.7,960.8Z M1065.2,702.0 L1056.1,703.9 L1049.7,702.8 L1041.7,697.0 L1048.3,689.4 L1056.8,685.8 L1062.1,693.1Z M1069.6,744.2 L1065.7,751.0 L1060.4,754.3 L1052.5,753.7 L1053.8,745.8 L1057.2,741.6 L1063.3,739.1Z M1050.0,750.9 L1057.6,749.2 L1062.5,755.7 L1062.2,764.6 L1053.8,767.5 L1045.9,764.3 L1044.3,756.0Z M1062.7,760.0 L1072.5,764.0 L1067.5,773.7 L1058.2,779.0 L1049.3,772.7 L1050.1,763.1 L1056.5,758.9Z M1052.0,791.7 L1051.1,783.8 L1055.0,779.1 L1061.4,774.1 L1068.1,780.0 L1063.9,786.9 L1059.7,790.1Z M1056.8,803.0 L1051.7,796.7 L1051.1,790.1 L1055.3,783.4 L1063.4,785.3 L1070.6,791.9 L1063.2,798.1Z M1056.4,812.2 L1054.1,805.2 L1053.2,798.5 L1059.8,794.3 L1066.2,798.5 L1065.5,804.6 L1063.2,809.5Z M1049.5,808.8 L1055.4,809.9 L1058.5,814.2 L1056.9,818.9 L1052.6,820.8 L1047.2,819.8 L1047.7,814.3Z M1062.5,819.6 L1066.3,827.5 L1060.2,832.4 L1054.1,837.4 L1049.4,830.9 L1047.4,823.4 L1054.5,820.2Z M1063.4,833.3 L1064.1,840.9 L1059.1,844.4 L1053.8,845.9 L1049.0,841.7 L1050.3,835.3 L1055.9,831.0Z M1071.7,867.8 L1066.2,874.9 L1058.5,876.9 L1049.6,873.2 L1051.8,863.8 L1058.3,858.2 L1065.5,861.6Z M1043.5,894.7 L1049.2,890.7 L1056.1,890.7 L1059.0,897.1 L1056.7,903.3 L1049.8,909.7 L1044.5,901.8Z M1045.0,904.6 L1055.8,903.7 L1063.7,910.5 L1060.3,919.3 L1054.4,924.8 L1046.5,922.3 L1043.1,914.8Z M1059.1,926.6 L1064.2,930.7 L1064.8,937.6 L1059.1,942.5 L1051.8,940.5 L1045.4,933.6 L1051.3,926.0Z M1060.8,951.9 L1062.7,961.5 L1057.6,968.1 L1049.8,970.4 L1043.5,964.7 L1046.2,957.3 L1051.0,951.3Z M1057.6,726.0 L1058.8,720.0 L1063.5,712.3 L1068.8,719.8 L1070.9,724.7 L1069.6,732.6 L1061.6,731.2Z M1053.4,740.0 L1064.2,735.7 L1071.1,742.5 L1075.6,749.7 L1071.3,759.1 L1062.0,755.9 L1057.5,750.3Z M1079.2,779.9 L1076.8,786.9 L1072.5,791.0 L1063.3,794.0 L1060.0,784.3 L1063.0,774.7 L1072.3,777.2Z M1065.2,806.0 L1056.7,803.1 L1054.1,794.7 L1059.7,788.9 L1066.9,787.8 L1071.6,793.2 L1071.2,800.3Z M1063.7,825.2 L1057.6,815.4 L1066.1,809.1 L1072.6,803.3 L1079.1,809.6 L1080.4,818.0 L1074.2,824.5Z M1073.6,824.6 L1077.1,829.1 L1079.6,835.9 L1072.9,839.2 L1067.4,835.8 L1061.9,830.7 L1067.3,825.1Z M1062.4,844.7 L1066.3,838.3 L1075.6,836.5 L1079.8,845.2 L1075.3,851.9 L1069.1,857.0 L1061.8,852.4Z M1057.3,863.7 L1058.2,854.1 L1063.1,848.8 L1070.3,847.6 L1073.9,853.8 L1076.9,863.3 L1067.1,869.3Z M1076.2,880.6 L1070.2,883.5 L1065.9,878.6 L1065.4,873.0 L1068.8,866.4 L1075.8,869.2 L1082.8,874.7Z M1066.0,902.4 L1063.2,892.8 L1064.6,883.7 L1073.9,880.0 L1082.2,885.6 L1083.7,895.5 L1075.6,900.1Z M1067.9,907.1 L1069.5,912.3 L1066.5,916.5 L1061.1,919.0 L1054.2,915.4 L1056.3,907.7 L1062.0,902.5Z M1075.5,922.3 L1072.1,927.3 L1068.6,929.9 L1062.3,930.1 L1061.5,923.6 L1064.2,917.8 L1071.0,917.3Z M1064.3,932.5 L1069.2,937.3 L1070.9,942.6 L1068.2,948.6 L1061.9,946.8 L1057.8,942.9 L1056.9,935.4Z M1078.2,969.2 L1069.5,967.7 L1062.8,962.3 L1066.1,954.5 L1072.6,951.0 L1081.4,952.0 L1079.1,960.6Z M1082.7,744.0 L1084.6,750.9 L1077.8,755.0 L1072.0,750.7 L1072.1,745.3 L1074.0,741.0 L1079.8,738.2Z M1082.2,788.7 L1079.0,785.1 L1078.5,781.2 L1079.9,774.6 L1086.7,776.4 L1089.5,781.8 L1088.1,787.8Z M1094.4,793.3 L1088.4,799.4 L1083.3,805.5 L1076.4,800.8 L1076.6,793.5 L1079.9,786.7 L1086.9,789.2Z M1089.7,801.5 L1090.1,808.8 L1084.6,811.9 L1078.6,813.4 L1077.6,807.4 L1077.3,801.9 L1082.8,800.6Z M1080.2,822.4 L1074.3,821.0 L1073.5,815.0 L1076.9,811.0 L1083.8,805.3 L1085.3,814.1 L1088.7,822.0Z M1087.7,829.3 L1081.0,831.7 L1075.1,832.6 L1069.1,827.2 L1071.5,818.4 L1080.0,819.4 L1086.2,821.9Z M1089.0,835.1 L1093.0,840.6 L1090.3,848.2 L1082.2,848.1 L1078.9,842.5 L1077.9,836.6 L1083.3,833.6Z M1085.3,875.3 L1078.1,872.4 L1074.9,867.0 L1076.0,860.5 L1082.7,857.4 L1086.8,862.8 L1089.5,868.6Z M1081.8,869.9 L1088.9,871.4 L1093.6,877.2 L1089.7,883.3 L1083.4,887.7 L1077.7,882.4 L1075.4,874.8Z M1072.7,891.7 L1074.2,886.6 L1080.0,883.0 L1087.6,886.4 L1088.3,895.5 L1081.4,901.8 L1072.3,900.0Z M1086.1,893.6 L1090.4,896.5 L1089.4,901.5 L1086.3,908.0 L1081.0,903.2 L1078.9,898.7 L1080.2,892.8Z M1073.5,906.4 L1078.5,899.2 L1087.9,900.1 L1093.2,908.2 L1087.6,915.0 L1081.3,915.4 L1074.6,914.0Z M1081.0,917.3 L1086.4,925.6 L1081.7,933.3 L1074.4,938.8 L1066.3,933.5 L1067.6,925.0 L1070.7,915.7Z M1067.8,940.3 L1070.2,929.8 L1080.3,927.9 L1088.7,932.0 L1089.4,941.1 L1082.9,946.1 L1073.7,949.2Z M1091.5,949.3 L1085.5,952.9 L1079.5,950.6 L1073.9,944.8 L1078.9,937.9 L1087.3,934.6 L1090.5,942.7Z M1089.6,736.4 L1096.0,736.8 L1098.4,743.4 L1092.7,746.2 L1088.5,747.9 L1085.1,744.3 L1085.7,739.6Z M1076.0,753.3 L1084.4,750.0 L1089.9,749.7 L1097.9,752.8 L1093.1,759.9 L1087.6,764.3 L1081.7,760.3Z M1090.5,780.1 L1088.8,773.7 L1092.7,769.5 L1097.9,768.2 L1100.4,772.7 L1101.5,777.6 L1097.1,782.8Z M1083.1,786.2 L1080.0,777.4 L1088.4,773.7 L1094.7,776.0 L1101.6,780.9 L1098.6,790.0 L1089.9,788.3Z M1095.3,803.0 L1089.2,806.6 L1081.1,803.3 L1081.8,794.5 L1087.1,787.3 L1094.8,791.4 L1096.3,797.4Z M1097.8,800.0 L1095.2,806.3 L1092.0,809.2 L1085.5,812.4 L1085.2,805.3 L1086.2,800.5 L1091.0,799.2Z M1098.1,817.6 L1090.8,820.6 L1081.6,822.8 L1076.2,813.3 L1081.1,803.4 L1091.4,803.3 L1095.9,810.0Z M1099.4,821.5 L1103.1,827.7 L1097.6,832.7 L1091.4,831.5 L1086.6,827.5 L1088.3,821.1 L1094.1,819.7Z M1087.7,838.1 L1092.8,834.2 L1097.8,838.5 L1101.8,844.9 L1094.9,848.1 L1089.2,848.4 L1086.9,843.3Z M1094.8,850.6 L1095.5,855.7 L1092.8,860.3 L1086.2,862.3 L1081.9,856.2 L1082.9,848.8 L1090.0,847.2Z M1096.9,855.4 L1102.1,864.6 L1097.9,873.5 L1089.1,877.6 L1083.4,870.4 L1080.8,862.7 L1087.9,859.1Z M1089.9,872.1 L1097.5,864.5 L1106.3,871.4 L1107.8,881.7 L1101.4,891.1 L1091.5,886.4 L1087.2,879.5Z M1094.7,893.1 L1089.0,892.6 L1083.6,887.8 L1085.0,878.9 L1094.1,876.6 L1102.0,881.5 L1101.2,890.2Z M1094.4,911.9 L1085.9,906.8 L1088.0,898.3 L1090.7,890.0 L1101.2,889.0 L1108.4,898.0 L1102.5,907.0Z M1097.2,922.5 L1100.8,927.7 L1102.1,936.0 L1093.5,940.7 L1087.9,933.6 L1084.6,926.8 L1090.0,920.7Z M1083.7,945.4 L1077.5,936.9 L1087.7,934.3 L1094.0,935.3 L1096.8,940.7 L1096.4,947.9 L1089.3,948.1Z M1090.0,960.7 L1084.6,959.4 L1081.4,954.5 L1080.4,944.4 L1090.6,945.1 L1095.8,950.9 L1094.6,957.3Z M1091.6,952.8 L1098.8,953.1 L1100.0,960.0 L1099.1,967.0 L1092.3,965.8 L1083.6,965.2 L1083.4,955.6Z M1106.7,705.1 L1110.0,710.6 L1110.7,717.3 L1104.4,723.4 L1095.6,719.8 L1097.3,711.4 L1099.7,705.4Z M1112.4,710.7 L1119.8,717.1 L1117.9,727.5 L1108.3,732.9 L1101.8,725.1 L1096.2,717.3 L1102.1,707.7Z M1120.2,733.6 L1114.2,742.5 L1104.4,748.0 L1094.6,740.8 L1096.7,729.9 L1104.7,726.4 L1113.9,724.6Z M1115.2,805.2 L1114.3,815.8 L1103.4,814.8 L1097.6,807.4 L1096.3,797.0 L1106.3,793.8 L1113.1,798.5Z M1114.3,821.4 L1106.0,825.7 L1100.4,827.7 L1092.7,824.5 L1092.5,814.9 L1101.0,810.8 L1107.9,814.7Z M1096.6,828.3 L1103.6,823.8 L1112.8,821.4 L1113.7,830.8 L1111.6,836.8 L1105.3,842.6 L1100.7,835.4Z M1099.5,839.9 L1103.5,834.7 L1108.6,831.1 L1116.4,833.5 L1113.2,840.8 L1109.8,844.7 L1104.5,844.0Z M1113.2,852.4 L1104.9,859.6 L1096.1,856.9 L1086.5,851.9 L1093.9,844.0 L1100.3,837.1 L1109.8,841.7Z M1103.3,873.1 L1095.9,867.6 L1100.4,860.4 L1104.1,852.7 L1114.3,854.0 L1114.7,863.8 L1111.8,871.4Z M1095.6,881.7 L1097.8,876.0 L1103.6,876.5 L1110.5,878.0 L1108.6,885.0 L1103.6,888.1 L1097.1,888.1Z M1112.2,899.7 L1111.7,910.5 L1101.0,911.5 L1091.2,908.9 L1089.5,898.1 L1096.5,889.4 L1106.3,892.9Z M1095.9,940.0 L1093.5,934.5 L1097.8,929.7 L1104.8,929.0 L1108.8,935.0 L1104.8,940.1 L1100.4,943.5Z M1100.7,948.3 L1106.4,942.5 L1112.0,948.4 L1114.8,955.3 L1108.1,958.0 L1101.1,961.9 L1095.4,954.8Z M1115.2,969.6 L1116.9,978.7 L1107.3,980.6 L1100.7,974.8 L1102.2,967.5 L1106.0,960.9 L1114.2,962.2Z M1113.8,727.8 L1120.0,728.0 L1125.5,732.7 L1121.5,738.7 L1115.9,742.7 L1109.1,739.3 L1107.7,731.6Z M1119.5,750.8 L1114.3,754.6 L1105.7,755.0 L1102.4,746.1 L1108.7,740.0 L1116.4,737.7 L1121.6,744.0Z M1122.4,750.4 L1124.2,757.0 L1123.0,767.7 L1112.3,765.3 L1104.9,758.9 L1106.9,748.9 L1115.8,744.0Z M1116.6,768.9 L1124.7,773.8 L1119.5,781.4 L1114.6,785.8 L1107.1,784.4 L1104.2,776.8 L1108.2,769.3Z M1116.6,823.3 L1112.0,828.3 L1105.4,825.5 L1101.5,818.8 L1107.9,814.7 L1113.9,811.8 L1117.4,817.6Z M1120.8,829.1 L1114.2,832.8 L1107.6,834.5 L1104.8,828.3 L1105.8,822.3 L1111.5,820.9 L1118.9,821.1Z M1124.6,854.7 L1113.8,858.2 L1104.9,854.0 L1102.3,844.8 L1108.2,837.8 L1118.3,833.8 L1126.6,842.6Z M1125.6,861.7 L1115.3,860.6 L1113.5,851.8 L1114.2,845.0 L1120.9,839.5 L1130.4,843.0 L1133.2,853.7Z M1114.1,875.2 L1109.7,873.0 L1106.1,868.1 L1110.8,864.1 L1116.2,863.4 L1120.6,867.3 L1118.7,872.8Z M1121.7,878.6 L1128.7,888.5 L1125.0,899.4 L1114.9,905.0 L1107.6,897.0 L1103.9,888.3 L1111.3,882.4Z M1119.5,933.4 L1109.1,933.7 L1106.3,923.6 L1109.9,915.3 L1118.2,915.2 L1128.8,916.6 L1127.1,927.6Z M1121.4,939.1 L1125.9,947.2 L1122.5,957.3 L1111.9,957.5 L1102.6,952.1 L1107.5,942.9 L1112.5,934.4Z M1103.6,976.0 L1102.8,966.6 L1107.2,956.9 L1118.4,958.2 L1122.2,967.3 L1121.5,976.7 L1112.4,977.6Z M1126.2,745.1 L1131.8,749.5 L1136.8,756.0 L1131.4,763.2 L1122.8,762.8 L1114.3,757.5 L1119.5,749.0Z M1130.4,770.5 L1125.7,770.0 L1118.8,766.9 L1122.4,760.1 L1128.6,758.0 L1134.5,760.8 L1134.2,767.0Z M1136.1,784.4 L1136.4,790.3 L1130.7,788.7 L1125.9,787.1 L1125.7,781.5 L1130.3,778.5 L1135.2,780.0Z M1132.0,814.9 L1127.3,815.8 L1122.2,813.6 L1121.0,807.1 L1126.9,804.7 L1131.6,806.3 L1135.1,810.4Z M1124.4,823.5 L1130.3,821.3 L1136.7,821.8 L1137.7,828.2 L1136.4,835.4 L1129.3,833.6 L1122.5,830.9Z M1119.1,830.6 L1126.7,826.7 L1133.0,832.6 L1135.7,841.6 L1127.3,845.7 L1120.2,843.7 L1110.6,837.8Z M1115.9,847.7 L1121.4,844.6 L1128.6,842.0 L1132.5,849.3 L1127.8,854.8 L1122.7,856.5 L1118.5,853.5Z M1134.5,860.1 L1135.5,867.7 L1131.4,871.9 L1126.5,873.0 L1120.1,870.8 L1123.5,864.8 L1126.7,859.2Z M1121.4,876.8 L1122.1,868.7 L1129.0,866.3 L1133.5,869.5 L1138.0,873.7 L1133.6,878.1 L1128.4,879.4Z M1138.4,885.1 L1141.4,892.5 L1134.5,898.3 L1127.8,893.3 L1125.4,887.7 L1127.2,881.2 L1134.4,879.6Z M1122.4,919.4 L1129.0,919.0 L1134.1,922.5 L1135.5,929.6 L1129.0,933.1 L1122.5,931.8 L1118.6,925.7Z M1134.6,976.1 L1130.3,978.0 L1123.4,977.4 L1123.7,970.2 L1127.6,963.9 L1135.8,964.1 L1137.7,971.5Z M1128.4,984.6 L1132.2,989.4 L1131.5,997.1 L1123.9,996.2 L1115.2,995.6 L1115.1,986.2 L1122.0,981.2Z M1127.0,703.3 L1126.9,695.1 L1133.3,691.4 L1139.3,693.1 L1145.4,698.0 L1139.3,703.0 L1133.9,707.4Z M1137.1,704.9 L1143.9,704.0 L1150.5,707.3 L1149.3,714.6 L1143.7,717.6 L1136.7,718.4 L1136.7,711.3Z M1129.2,719.4 L1131.7,712.1 L1139.9,712.8 L1146.2,718.5 L1144.8,727.6 L1136.3,731.9 L1128.2,727.4Z M1139.3,742.7 L1146.7,748.6 L1147.7,757.7 L1141.1,764.5 L1133.0,760.8 L1128.7,754.6 L1133.9,749.7Z M1152.2,780.3 L1142.8,782.2 L1135.6,779.5 L1134.8,772.2 L1136.4,763.2 L1146.8,762.0 L1150.6,770.8Z M1146.9,796.3 L1148.5,803.6 L1141.0,805.5 L1136.1,801.3 L1133.9,795.6 L1136.4,786.8 L1144.4,791.2Z M1134.0,805.4 L1139.6,805.2 L1146.0,804.4 L1147.4,811.2 L1143.0,815.9 L1137.5,814.6 L1131.5,811.8Z M1126.2,819.8 L1131.9,810.1 L1142.2,814.1 L1146.4,821.5 L1147.8,832.5 L1136.4,837.4 L1130.8,827.5Z M1152.3,835.9 L1145.2,837.7 L1138.4,840.4 L1134.5,833.4 L1136.6,825.2 L1144.4,827.2 L1151.5,827.9Z M1151.8,885.9 L1145.2,892.2 L1138.3,888.4 L1131.8,884.4 L1136.1,878.0 L1141.9,874.7 L1146.7,879.1Z M1143.2,879.5 L1147.3,889.2 L1141.1,895.7 L1133.7,901.1 L1125.8,895.0 L1129.3,886.9 L1134.1,883.5Z M1152.0,917.1 L1145.9,920.5 L1140.8,917.5 L1139.1,913.0 L1141.6,909.4 L1146.5,905.4 L1149.7,910.9Z M1129.5,926.6 L1133.6,922.1 L1139.7,923.6 L1143.0,928.9 L1139.5,933.8 L1134.2,936.4 L1127.1,933.7Z M1132.0,945.0 L1126.0,938.2 L1132.6,932.5 L1138.2,929.0 L1146.9,931.3 L1142.3,939.1 L1140.1,946.4Z M1158.4,725.4 L1150.6,725.1 L1145.7,721.2 L1139.7,712.5 L1149.5,708.6 L1157.8,710.1 L1159.0,717.7Z M1152.5,769.9 L1144.2,769.9 L1141.7,762.4 L1144.1,756.6 L1150.0,751.2 L1153.9,758.2 L1158.1,764.2Z M1155.6,766.7 L1158.5,773.8 L1157.7,782.8 L1148.8,781.3 L1140.4,779.3 L1141.8,770.5 L1147.1,762.7Z M1146.8,777.0 L1153.3,777.9 L1158.6,784.4 L1154.1,792.3 L1144.9,795.1 L1142.4,786.3 L1140.6,779.9Z M1154.6,804.3 L1148.2,804.6 L1145.5,799.6 L1143.1,793.3 L1149.3,787.7 L1155.7,792.5 L1158.2,798.6Z M1157.5,805.7 L1163.7,811.5 L1159.7,818.0 L1155.3,821.3 L1146.9,822.6 L1147.4,814.1 L1149.8,807.6Z M1161.0,825.9 L1159.9,835.1 L1155.2,843.1 L1147.0,839.1 L1139.2,833.7 L1142.4,823.5 L1152.4,821.3Z M1165.5,868.9 L1155.6,874.1 L1148.5,867.5 L1140.6,860.4 L1147.5,851.4 L1156.9,853.7 L1163.1,858.6Z M1148.4,891.1 L1140.4,882.6 L1143.5,871.4 L1153.6,869.3 L1160.4,873.8 L1164.0,881.3 L1158.2,887.9Z M1158.0,890.1 L1153.0,892.9 L1146.7,890.4 L1147.7,883.9 L1150.7,877.6 L1157.3,880.0 L1162.7,884.7Z M1139.2,893.0 L1149.4,890.2 L1159.0,891.9 L1158.0,901.2 L1157.2,911.5 L1147.9,906.9 L1142.8,902.7Z M1167.2,919.7 L1166.9,930.1 L1156.6,931.2 L1147.4,928.8 L1150.1,919.8 L1152.4,911.3 L1160.7,914.5Z M1155.3,944.4 L1150.3,939.8 L1146.1,935.0 L1150.5,930.0 L1156.7,928.5 L1162.9,932.7 L1162.7,941.1Z M1151.4,941.7 L1156.9,944.7 L1162.3,951.0 L1155.6,956.1 L1147.7,959.4 L1142.6,952.0 L1146.4,945.5Z M1176.6,694.4 L1167.3,699.6 L1157.1,696.7 L1154.4,686.7 L1161.3,680.8 L1169.2,677.8 L1175.0,684.4Z M1169.7,688.4 L1175.6,694.8 L1177.8,703.3 L1170.5,708.9 L1163.6,704.7 L1159.6,699.3 L1162.9,693.4Z M1161.5,749.9 L1170.4,753.0 L1173.2,760.2 L1171.5,767.5 L1164.2,768.5 L1155.8,766.6 L1154.7,757.1Z M1168.2,763.2 L1171.9,770.2 L1172.0,776.8 L1166.4,780.8 L1159.7,778.8 L1154.8,772.1 L1160.4,765.9Z M1172.0,790.9 L1172.6,794.9 L1170.5,800.2 L1164.7,798.7 L1163.5,793.8 L1163.9,789.0 L1168.9,786.1Z M1167.8,798.7 L1170.9,806.7 L1165.6,814.3 L1158.3,810.1 L1154.5,806.4 L1152.0,798.3 L1160.4,796.0Z M1166.2,812.1 L1168.8,819.5 L1169.4,825.3 L1164.7,832.4 L1156.7,828.4 L1155.1,821.0 L1157.0,812.4Z M1159.9,838.0 L1154.0,832.4 L1159.4,825.7 L1167.1,826.2 L1172.0,831.3 L1171.6,838.6 L1165.2,843.9Z M1171.9,856.5 L1162.6,863.2 L1152.6,857.4 L1151.9,847.4 L1158.2,842.0 L1167.1,837.5 L1169.9,847.1Z M1160.1,881.8 L1162.1,874.3 L1167.6,870.2 L1176.2,870.1 L1179.4,878.7 L1173.1,883.9 L1166.5,886.7Z M1150.1,898.0 L1150.2,888.2 L1156.1,883.6 L1163.9,879.9 L1167.8,887.8 L1167.3,895.9 L1159.8,900.9Z M1170.1,905.8 L1164.7,909.9 L1159.0,907.2 L1155.9,902.2 L1159.8,898.2 L1165.4,892.2 L1172.0,898.0Z M1165.5,951.0 L1171.4,951.6 L1180.9,954.3 L1179.1,965.2 L1169.1,969.8 L1163.7,961.7 L1157.8,955.2Z M1172.1,986.9 L1168.8,992.2 L1162.5,991.0 L1157.4,986.2 L1160.0,979.2 L1166.8,976.6 L1171.8,981.2Z M1173.3,692.4 L1163.9,689.3 L1167.0,679.6 L1175.5,678.1 L1184.5,678.3 L1186.9,687.8 L1179.9,693.0Z M1182.4,689.5 L1181.7,697.7 L1177.2,704.5 L1171.1,699.4 L1166.0,695.9 L1166.7,687.8 L1174.5,688.6Z M1172.9,733.3 L1177.7,732.7 L1181.2,735.2 L1181.2,739.4 L1178.9,744.5 L1172.3,744.1 L1172.1,738.0Z M1177.2,759.6 L1168.2,757.8 L1166.5,750.3 L1166.8,743.8 L1173.5,739.0 L1179.0,744.9 L1179.5,751.1Z M1172.4,761.4 L1166.6,756.4 L1169.4,749.9 L1173.8,745.1 L1180.9,747.0 L1184.3,754.0 L1178.1,757.9Z M1170.4,787.1 L1175.4,785.0 L1181.2,782.6 L1183.0,788.7 L1180.4,792.8 L1176.2,796.3 L1172.4,792.3Z M1168.0,807.2 L1175.1,808.8 L1178.1,813.9 L1181.8,823.0 L1172.1,825.6 L1166.9,819.5 L1161.8,813.1Z M1160.0,843.0 L1163.6,832.6 L1173.6,832.2 L1181.6,835.6 L1182.8,844.8 L1176.0,850.4 L1168.2,848.7Z M1163.0,872.9 L1165.3,864.9 L1172.7,864.2 L1180.7,864.8 L1180.6,872.9 L1178.0,882.7 L1167.7,880.7Z M1172.9,870.5 L1179.3,876.2 L1185.5,883.0 L1179.4,890.9 L1169.8,891.8 L1163.3,884.7 L1167.4,877.1Z M1176.0,914.6 L1178.2,909.6 L1184.8,908.8 L1191.0,914.1 L1187.7,921.8 L1180.6,925.9 L1176.0,919.6Z M1179.9,929.4 L1171.5,930.2 L1173.2,921.9 L1174.9,913.9 L1182.5,916.9 L1189.0,920.7 L1189.5,930.5Z M1174.9,950.4 L1179.6,954.1 L1180.6,960.5 L1175.2,964.7 L1168.4,963.7 L1162.6,957.3 L1168.2,950.7Z M1175.7,687.6 L1179.3,678.4 L1187.3,676.3 L1194.8,678.4 L1196.3,686.2 L1193.1,695.2 L1184.7,691.0Z M1191.0,701.6 L1186.7,699.3 L1183.9,694.2 L1188.9,691.4 L1193.5,690.7 L1197.7,694.3 L1196.4,700.1Z M1196.5,706.2 L1193.6,712.0 L1186.8,719.3 L1177.1,713.4 L1180.2,703.2 L1185.1,694.0 L1195.0,698.0Z M1184.7,719.0 L1182.5,709.6 L1192.1,710.7 L1198.5,712.5 L1203.8,720.3 L1197.1,728.4 L1187.3,726.8Z M1184.3,730.4 L1190.0,725.2 L1197.8,729.2 L1197.5,737.7 L1191.3,740.8 L1185.6,740.8 L1180.6,736.1Z M1183.2,749.2 L1176.4,743.7 L1182.2,736.6 L1191.1,734.6 L1193.9,742.7 L1195.4,749.9 L1188.6,754.4Z M1185.6,777.4 L1181.9,772.1 L1184.1,766.7 L1188.9,765.2 L1197.0,764.0 L1195.7,772.0 L1193.2,779.3Z M1198.0,778.7 L1196.9,785.1 L1189.9,787.0 L1186.7,781.1 L1185.1,775.2 L1190.2,770.5 L1197.5,771.9Z M1188.8,789.8 L1195.3,790.6 L1198.0,797.1 L1194.7,803.5 L1187.5,804.4 L1183.6,799.1 L1181.9,792.1Z M1188.8,821.4 L1194.6,820.3 L1198.6,824.4 L1198.4,829.9 L1194.1,834.1 L1189.3,830.9 L1186.0,826.6Z M1180.4,851.4 L1177.9,843.9 L1177.6,837.0 L1184.0,831.0 L1190.2,837.1 L1192.2,843.6 L1188.9,850.4Z M1181.0,860.9 L1186.7,858.9 L1191.6,862.7 L1192.9,869.3 L1187.3,873.2 L1181.0,872.0 L1174.1,866.5Z M1181.3,870.3 L1189.0,869.8 L1196.9,869.6 L1200.4,878.3 L1193.8,884.9 L1185.0,885.8 L1181.0,878.3Z M1182.0,929.0 L1174.4,922.4 L1177.9,913.4 L1185.1,908.3 L1191.2,913.8 L1198.0,920.5 L1190.4,926.3Z M1194.7,926.9 L1188.3,929.1 L1181.1,924.2 L1181.9,914.1 L1191.4,913.7 L1199.5,914.5 L1203.7,923.5Z M1190.0,667.5 L1197.3,665.1 L1205.6,665.8 L1206.9,674.3 L1202.6,681.2 L1194.1,682.3 L1190.9,675.0Z M1200.9,679.5 L1209.0,676.9 L1215.3,685.2 L1206.9,690.6 L1200.5,698.2 L1194.7,690.2 L1191.1,681.0Z M1199.8,706.2 L1194.0,702.4 L1193.7,696.9 L1195.4,691.8 L1202.3,688.1 L1207.6,694.6 L1203.9,700.7Z M1211.4,709.1 L1209.3,719.3 L1199.5,720.6 L1193.2,715.9 L1189.0,707.8 L1195.2,699.0 L1205.9,700.5Z M1203.4,724.0 L1210.3,726.9 L1206.8,733.4 L1203.4,737.3 L1198.3,735.8 L1193.2,731.3 L1196.6,724.7Z M1209.5,752.2 L1201.9,754.9 L1195.4,751.0 L1192.2,743.2 L1199.9,740.3 L1206.6,738.0 L1208.2,744.9Z M1189.8,809.9 L1190.4,804.4 L1194.3,798.0 L1200.8,802.2 L1202.6,808.0 L1199.5,813.0 L1193.1,816.3Z M1196.3,822.4 L1192.7,815.5 L1199.6,811.5 L1207.8,810.3 L1210.4,818.3 L1206.8,824.1 L1200.5,829.7Z M1191.7,823.9 L1197.3,819.5 L1203.6,824.3 L1199.9,830.4 L1197.0,833.8 L1190.9,834.7 L1187.6,828.7Z M1194.2,861.6 L1202.5,853.9 L1209.7,862.1 L1212.5,868.1 L1209.0,873.7 L1202.1,876.3 L1191.4,872.9Z M1199.3,882.5 L1208.3,882.5 L1213.2,892.7 L1203.9,898.7 L1196.1,897.1 L1192.3,891.6 L1190.6,883.2Z M1196.1,917.2 L1203.0,921.1 L1205.8,924.9 L1206.7,930.7 L1201.0,936.3 L1193.2,932.5 L1194.6,924.9Z M1199.4,965.7 L1193.3,966.7 L1188.1,960.6 L1192.0,953.0 L1199.8,952.2 L1203.4,957.7 L1205.3,963.7Z M1217.6,689.1 L1214.7,692.9 L1210.8,694.9 L1206.4,692.6 L1203.8,686.6 L1208.9,681.1 L1214.7,684.9Z M1205.4,699.8 L1213.0,695.8 L1219.0,701.8 L1222.1,710.0 L1215.0,715.8 L1206.6,714.3 L1205.4,707.0Z M1205.6,752.3 L1202.8,743.7 L1200.1,737.0 L1206.9,733.9 L1212.6,736.1 L1218.8,741.4 L1214.7,749.5Z M1211.6,746.1 L1220.5,750.6 L1222.8,760.2 L1215.0,764.3 L1206.8,768.7 L1205.4,759.4 L1205.8,753.2Z M1200.4,825.5 L1203.9,816.1 L1213.4,817.5 L1220.8,821.9 L1219.0,830.3 L1213.0,837.0 L1203.8,834.3Z M1205.6,840.5 L1212.8,836.5 L1219.3,838.7 L1224.9,844.2 L1222.8,853.6 L1213.3,853.7 L1207.7,848.4Z M1210.4,842.6 L1218.3,842.8 L1219.4,850.7 L1215.6,855.6 L1208.9,860.5 L1202.8,854.1 L1203.2,845.6Z M1206.7,864.1 L1212.5,861.7 L1218.3,858.7 L1223.5,864.4 L1220.3,871.1 L1214.1,875.2 L1208.7,870.4Z M1210.7,945.6 L1216.4,949.6 L1219.8,956.1 L1213.4,959.3 L1208.3,959.6 L1206.0,955.4 L1203.7,948.7Z M1221.4,664.9 L1228.0,666.4 L1228.9,672.9 L1226.9,679.3 L1220.4,678.2 L1216.0,674.6 L1215.4,668.0Z M1230.2,683.9 L1228.3,690.8 L1222.0,690.1 L1215.2,691.1 L1217.2,684.6 L1218.3,677.9 L1224.7,680.2Z M1227.6,710.0 L1218.0,707.5 L1212.5,704.3 L1208.4,696.1 L1216.1,689.9 L1226.0,690.9 L1226.7,700.1Z M1227.9,750.4 L1218.2,751.5 L1213.5,741.0 L1223.3,736.3 L1229.7,736.3 L1237.1,739.7 L1236.2,748.9Z M1216.6,813.5 L1214.4,805.3 L1215.1,800.2 L1218.9,793.4 L1224.2,799.0 L1225.9,803.8 L1223.9,809.2Z M1221.5,838.7 L1217.7,832.7 L1221.4,824.9 L1229.2,827.9 L1232.8,832.5 L1231.4,837.8 L1226.9,842.2Z M1231.3,853.7 L1221.7,852.5 L1214.4,843.4 L1220.4,832.6 L1231.2,833.9 L1242.1,837.1 L1239.5,848.5Z M1208.6,924.2 L1210.5,913.1 L1221.3,914.4 L1228.5,917.9 L1231.8,927.1 L1223.4,932.3 L1213.3,933.9Z M1234.5,705.7 L1234.3,700.0 L1236.2,695.5 L1242.3,692.3 L1248.5,697.3 L1244.1,703.3 L1240.3,706.4Z M1226.5,707.4 L1233.7,705.0 L1240.1,708.3 L1242.6,715.7 L1236.7,720.7 L1229.4,720.9 L1226.1,714.7Z M1232.7,745.2 L1227.6,739.1 L1230.9,731.9 L1237.9,729.4 L1245.2,732.5 L1244.1,740.1 L1240.3,746.3Z M1226.8,800.4 L1232.5,798.4 L1238.7,801.2 L1239.0,808.4 L1234.2,814.3 L1225.8,813.6 L1223.2,806.0Z M1226.9,839.0 L1232.1,837.4 L1238.7,836.8 L1238.9,843.4 L1238.0,851.3 L1230.7,848.3 L1227.2,844.6Z M1252.3,889.3 L1247.4,899.8 L1236.6,902.9 L1226.1,897.0 L1226.7,885.0 L1235.5,878.8 L1245.4,880.7Z M1231.8,911.8 L1236.6,913.8 L1239.6,919.2 L1236.6,926.7 L1227.7,927.1 L1226.7,919.1 L1227.9,914.6Z M1230.9,968.1 L1230.9,958.9 L1230.5,952.2 L1237.6,947.9 L1243.1,953.8 L1246.2,961.0 L1239.7,965.5Z M1256.1,679.2 L1248.4,681.2 L1242.5,680.8 L1241.0,675.2 L1242.1,669.5 L1248.8,665.1 L1253.0,671.9Z M1251.8,687.3 L1246.3,692.1 L1238.4,694.3 L1232.5,687.3 L1236.4,679.6 L1243.2,675.6 L1250.5,679.4Z M1256.8,719.9 L1260.4,726.7 L1255.0,732.0 L1246.9,735.7 L1243.1,727.7 L1242.3,719.3 L1250.3,715.4Z M1253.7,728.7 L1255.7,734.1 L1250.6,736.3 L1246.6,736.1 L1242.3,733.3 L1243.5,727.4 L1249.3,723.7Z M1250.1,747.4 L1256.3,754.8 L1254.1,762.9 L1247.9,765.8 L1240.7,765.5 L1236.4,758.1 L1243.0,753.4Z M1253.6,829.0 L1260.3,834.0 L1256.1,841.9 L1247.7,843.6 L1241.8,838.1 L1243.2,831.1 L1247.2,824.2Z M1244.8,854.3 L1240.5,845.4 L1246.1,838.5 L1253.0,837.3 L1257.0,841.9 L1259.6,848.3 L1253.5,851.6Z M1248.6,866.5 L1243.5,869.7 L1238.0,866.5 L1237.4,860.4 L1241.2,855.6 L1246.3,857.9 L1250.6,861.2Z M1242.8,894.3 L1247.8,895.8 L1253.6,897.7 L1253.2,904.7 L1246.8,907.4 L1241.6,904.4 L1240.2,899.2Z M1267.1,694.7 L1268.9,705.4 L1260.2,710.4 L1252.8,708.5 L1247.4,703.0 L1249.6,694.8 L1257.7,691.3Z M1262.2,720.8 L1257.1,718.6 L1257.3,713.6 L1259.2,709.5 L1264.1,709.2 L1268.9,712.4 L1266.8,717.9Z M1261.2,744.7 L1251.1,748.5 L1246.5,738.1 L1249.7,727.8 L1259.9,726.7 L1270.5,729.7 L1271.6,741.7Z M1260.3,795.2 L1267.2,797.2 L1270.1,802.9 L1268.4,809.1 L1262.1,811.4 L1255.4,808.3 L1256.2,801.1Z M1255.5,829.6 L1263.9,834.0 L1271.6,840.4 L1268.5,851.8 L1256.7,854.7 L1249.7,846.4 L1251.8,838.3Z M1246.7,883.9 L1256.1,878.2 L1263.5,884.9 L1264.2,891.6 L1263.2,900.2 L1253.7,901.3 L1246.5,894.5Z M1257.2,923.9 L1249.7,916.2 L1252.9,907.1 L1259.9,904.0 L1265.4,907.0 L1271.0,912.5 L1267.4,921.1Z M1278.3,680.3 L1273.8,684.7 L1267.2,685.1 L1264.7,679.2 L1265.7,673.3 L1271.5,670.6 L1277.9,673.4Z M1268.1,719.1 L1275.6,718.2 L1282.6,720.3 L1282.8,727.8 L1276.9,730.0 L1270.1,734.1 L1265.5,726.9Z M1265.2,730.4 L1273.2,725.6 L1277.0,734.0 L1277.4,740.2 L1273.2,746.8 L1264.1,745.8 L1264.5,737.2Z M1283.3,865.8 L1282.7,873.2 L1275.7,874.3 L1266.7,875.9 L1267.5,866.9 L1271.0,860.3 L1278.1,861.2Z M1300.7,707.3 L1295.7,713.6 L1288.1,713.7 L1284.8,707.8 L1286.3,702.3 L1290.6,695.3 L1297.1,700.5Z M1299.3,829.9 L1291.2,830.9 L1284.6,823.9 L1289.7,816.1 L1296.8,813.8 L1307.1,814.7 L1306.9,825.4Z" fill="#e8eaed"/>
<polygon points="949.3,799.3 982.8,791.0 991.1,824.4 966.0,841.1" fill="#a8dab5"/>
<polygon points="1166.6,766.0 1200.1,757.6 1221.0,791.1 1187.6,812.0" fill="#a8dab5"/>
<polygon points="1216.8,832.9 1258.7,824.6 1267.0,862.2 1229.4,870.6" fill="#a8dab5"/>
<polygon points="1180.0,750.0 1215.0,740.0 1225.0,780.0 1190.0,790.0" fill="#a8dab5"/>
<polygon points="1302.0,674.0 1306.0,689.0 1297.0,704.0 1290.0,719.0 1296.0,742.0 1300.0,767.7 1306.0,787.3 1318.0,805.0 1317.0,818.0 1300.0,832.0 1287.9,853.8 1283.8,883.1 1279.6,916.6 1273.3,950.0 1269.1,998.0 1397.0,998.0 1384.4,975.4 1359.3,966.0 1349.9,956.6 1346.7,944.0 1353.0,912.6 1365.6,893.8 1384.4,887.5 1403.2,881.2 1412.7,874.9 1409.5,849.8 1400.1,831.0 1390.7,821.6 1397.0,805.9 1397.0,777.6 1371.9,746.2 1381.3,711.7 1397.0,674.0" fill="#9cc0f9"/>
<polygon points="1410.0,968.0 1440.0,958.0 1460.0,975.0 1450.0,985.0 1425.0,980.0" fill="#9cc0f9"/>
<polygon points="1396.0,734.5 1403.6,731.4 1411.1,749.6 1426.2,737.5 1441.4,731.4 1453.5,726.9 1456.5,734.5 1441.4,743.5 1433.8,757.1 1426.2,764.7 1418.7,772.2 1411.1,782.8 1408.1,794.9 1403.6,810.0 1393.0,802.5 1385.0,770.0" fill="#9cc0f9"/>
<polygon points="1262.0,712.0 1290.0,716.0 1298.0,730.0 1294.0,745.0 1280.0,738.0 1265.0,728.0" fill="#9cc0f9"/>
<polygon points="1268.0,762.0 1298.0,766.0 1304.0,790.0 1290.0,795.0 1275.0,780.0" fill="#9cc0f9"/>
<polygon points="1262.0,674.0 1300.0,674.0 1305.0,690.0 1285.0,700.0 1268.0,690.0" fill="#9cc0f9"/>
<polygon points="1262.0,800.0 1290.0,805.0 1288.0,820.0 1270.0,818.0" fill="#9cc0f9"/>
<polygon points="1676.2,674.0 1683.4,692.0 1687.0,719.0 1683.4,746.1 1685.2,773.1 1696.0,785.7 1710.5,800.1 1717.7,818.2 1721.3,836.2 1728.5,860.0 1735.5,866.4 1756.4,895.7 1777.3,912.4 1794.0,925.0 1794.0,945.9 1800.3,966.8 1804.5,998.0 1886.0,998.0 1886.0,866.0 1860.0,862.0 1836.6,860.0 1838.4,836.2 1843.8,818.2 1849.2,803.8 1858.2,785.7 1870.8,764.1 1872.6,733.5 1858.2,722.7 1831.2,715.4 1822.2,706.4 1789.8,710.0 1782.5,722.7 1771.7,701.0 1760.9,688.4 1744.7,674.0" fill="#9cc0f9"/>
<polygon points="1088.0,866.0 1095.0,866.0 1094.0,893.0 1093.0,919.0 1091.0,940.0 1080.0,952.0 1064.0,962.0 1050.0,975.0 1040.0,988.0 1034.0,998.0 1026.0,998.0 1034.0,985.0 1046.0,970.0 1060.0,957.0 1076.0,946.0 1086.0,935.0 1088.0,919.0 1089.0,894.0" fill="#9cc0f9"/>
<polygon points="1027.4,998.0 1040.0,975.0 1052.0,962.0 1066.0,955.0 1083.0,947.2 1083.0,998.0" fill="#9cc0f9"/>
<polygon points="1090.0,868.0 1098.0,868.0 1100.0,860.0 1092.0,858.0" fill="#9cc0f9"/>
<polygon points="1334.2,799.6 1356.2,790.2 1384.4,805.9 1397.0,824.7 1381.3,837.3 1359.3,843.5 1349.9,887.5 1334.2,887.5 1340.5,843.5 1327.9,824.7" fill="#bbe2c6"/>
<polygon points="1366.8,984.0 1400.0,975.0 1424.3,984.0 1424.3,998.0 1366.8,998.0" fill="#bbe2c6"/>
<path d="M903.4,674.0 L911.7,690.7 L932.6,699.1 L936.8,724.1 L915.9,757.5 L932.6,770.1 L966.0,795.1 L999.5,807.7 L1024.5,820.2 L1032.9,841.1" fill="none" stroke="#7aa7e8" stroke-width="1.2"/>
<path d="M272.4,860.5 Q297.2,858.1 310.1,849.3 M311.4,796.9 Q326.7,792.3 349.6,793.4 M318.1,918.4 Q321.0,915.6 332.3,910.5 M348.3,701.6 Q343.7,723.0 350.6,741.3 M332.0,856.7 Q337.5,867.0 346.8,879.2 M332.3,910.5 Q348.5,910.9 366.9,922.1 M362.9,822.3 Q364.5,834.5 365.0,849.2 M395.0,698.9 Q405.2,678.4 425.7,667.5 M425.7,667.5 Q441.4,677.2 462.2,681.4 M425.9,890.8 Q436.8,896.2 458.1,892.2 M425.9,890.8 Q425.7,900.0 433.0,909.7 M424.2,948.6 Q445.2,949.1 465.0,945.8 M463.4,699.4 Q475.3,702.0 495.2,713.7 M471.1,917.3 Q466.1,934.4 465.0,945.8 M519.8,921.1 Q530.4,936.2 544.7,942.5 M545.9,753.7 Q570.9,779.9 585.4,803.5 M607.0,770.1 Q619.0,749.3 630.7,733.4 M613.7,947.3 Q613.2,971.0 617.5,983.6 M644.9,667.7 Q644.5,687.1 640.5,697.3 M645.5,757.3 Q662.3,754.8 680.3,763.2 M636.2,790.8 Q650.4,787.7 674.2,787.8 M636.2,790.8 Q637.4,810.6 645.1,824.4 M636.2,790.8 Q663.9,771.1 680.3,763.2 M643.4,859.4 Q660.0,860.0 674.0,858.6 M643.4,859.4 Q641.3,877.8 638.8,890.1 M643.4,859.4 Q651.2,873.1 665.0,892.4 M674.2,787.8 Q677.7,804.1 675.7,830.7 M675.7,830.7 Q672.5,850.1 674.0,858.6 M674.0,858.6 Q686.2,863.4 697.5,860.0 M674.0,858.6 Q689.2,839.9 707.3,817.1 M671.8,950.1 Q685.9,947.2 708.1,948.0 M692.2,702.8 Q699.9,722.1 702.1,739.6 M707.5,784.8 Q711.6,795.4 707.3,817.1 M707.3,817.1 Q707.8,841.8 697.5,860.0 M697.5,860.0 Q718.3,862.5 738.3,862.4 M708.1,948.0 Q720.8,939.9 732.5,937.7 M708.1,948.0 Q704.8,960.7 710.4,973.8 M733.9,764.5 Q734.5,782.6 738.2,795.3 M738.2,795.3 Q738.0,803.7 727.0,821.5 M738.3,862.4 Q748.1,878.7 756.2,883.4 M740.8,914.5 Q733.1,928.6 732.5,937.7 M732.5,937.7 Q750.8,950.7 767.6,952.4 M732.5,937.7 Q744.5,956.4 760.5,970.2 M770.9,704.3 Q785.3,701.4 799.9,696.2 M758.9,740.3 Q760.8,757.6 762.3,763.8 M758.9,740.3 Q767.1,753.7 784.6,758.3 M762.3,763.8 Q767.8,765.0 784.6,758.3 M765.0,784.9 Q771.3,809.2 788.0,826.5 M761.8,822.2 Q764.2,840.7 770.6,862.9 M761.8,822.2 Q775.5,837.7 782.7,858.8 M770.6,862.9 Q765.5,872.6 756.2,883.4 M756.2,883.4 Q765.4,880.9 783.1,884.2 M753.2,912.6 Q771.3,907.3 785.8,907.7 M767.6,952.4 Q776.4,945.2 791.6,942.7 M767.6,952.4 Q766.8,963.4 760.5,970.2 M760.5,970.2 Q777.6,968.1 788.4,972.2 M784.5,676.5 Q808.9,670.1 821.6,666.9 M784.5,676.5 Q797.2,692.2 799.9,696.2 M799.9,696.2 Q810.8,704.9 814.8,706.8 M799.9,696.2 Q801.9,708.7 796.9,724.0 M796.9,724.0 Q805.8,713.9 814.8,706.8 M784.6,758.3 Q811.5,758.0 828.4,766.3 M784.6,758.3 Q794.3,779.8 794.9,790.3 M794.9,790.3 Q794.0,813.7 788.0,826.5 M794.9,790.3 Q813.8,782.9 828.4,766.3 M782.7,858.8 Q803.4,859.8 829.5,850.1 M782.7,858.8 Q779.1,869.7 783.1,884.2 M782.7,858.8 Q797.6,872.1 817.1,892.9 M782.7,858.8 Q804.7,845.2 826.1,830.5 M785.8,907.7 Q797.1,911.0 815.1,924.5 M785.8,907.7 Q791.8,930.3 791.6,942.7 M791.6,942.7 Q811.2,937.0 829.1,936.3 M821.6,666.9 Q823.5,692.5 814.8,706.8 M821.6,666.9 Q842.9,683.4 858.0,702.4 M814.8,706.8 Q832.3,700.6 858.0,702.4 M814.8,706.8 Q827.0,689.7 845.9,665.5 M828.4,766.3 Q836.3,761.6 849.0,767.9 M828.4,766.3 Q829.9,775.8 828.5,788.4 M828.5,788.4 Q833.0,792.7 840.9,787.7 M826.1,830.5 Q832.7,837.1 829.5,850.1 M829.5,850.1 Q823.4,877.3 817.1,892.9 M817.1,892.9 Q817.1,904.6 815.1,924.5 M815.1,924.5 Q835.3,919.3 851.1,917.9 M829.1,936.3 Q816.4,957.5 815.5,978.8 M845.9,665.5 Q864.0,669.7 882.1,674.3 M858.0,702.4 Q869.5,694.5 882.4,696.6 M857.1,726.1 Q857.9,747.1 849.0,767.9 M854.8,832.6 Q867.3,836.7 871.8,833.5 M851.1,889.4 Q868.0,884.0 877.4,883.3 M851.1,889.4 Q856.1,897.9 851.1,917.9 M844.5,935.0 Q845.6,944.9 842.7,964.3 M842.7,964.3 Q860.2,975.1 885.2,981.2 M882.1,674.3 Q901.8,682.9 916.0,702.0 M888.1,774.3 Q897.9,758.3 911.3,753.8 M888.1,774.3 Q892.6,776.6 890.0,785.5 M871.8,833.5 Q895.3,834.8 915.3,831.6 M880.2,859.6 Q884.2,872.9 877.4,883.3 M877.4,883.3 Q892.6,884.0 913.1,884.1 M877.4,883.3 Q903.6,902.3 921.1,920.4 M881.3,912.5 Q878.6,924.1 883.1,933.8 M883.1,933.8 Q889.1,941.5 905.9,952.6 M885.2,981.2 Q899.6,977.4 916.1,979.8 M904.3,673.0 Q909.4,689.7 916.0,702.0 M904.6,727.0 Q925.3,739.3 945.1,739.6 M911.3,753.8 Q924.7,758.5 946.6,762.0 M911.3,753.8 Q917.9,779.8 919.3,800.3 M915.3,831.6 Q926.2,832.9 937.7,823.3 M915.3,831.6 Q917.9,838.5 930.7,851.0 M913.7,852.0 Q912.5,868.9 913.1,884.1 M913.1,884.1 Q924.4,863.1 930.7,851.0 M921.1,920.4 Q927.9,916.1 935.4,923.3 M921.1,920.4 Q912.2,936.1 905.9,952.6 M921.1,920.4 Q938.3,934.7 944.5,940.6 M905.9,952.6 Q916.8,961.7 916.1,979.8 M947.6,672.0 Q958.4,676.5 971.7,671.7 M947.6,672.0 Q952.0,694.5 949.3,712.0 M949.3,712.0 Q964.7,708.9 981.5,707.0 M949.3,712.0 Q948.7,724.7 945.1,739.6 M946.6,762.0 Q968.6,763.7 981.1,754.0 M945.7,785.0 Q944.4,809.6 937.7,823.3 M943.9,886.6 Q955.1,884.3 968.4,875.6 M943.9,886.6 Q941.0,901.6 935.4,923.3 M935.4,923.3 Q955.5,917.6 965.8,922.5 M944.5,940.6 Q959.4,944.9 972.1,944.2 M944.4,975.5 Q965.0,976.2 980.8,975.4 M971.7,671.7 Q980.0,687.2 981.5,707.0 M981.5,707.0 Q979.2,723.6 975.2,739.5 M981.1,754.0 Q988.7,773.2 993.9,793.4 M965.9,821.9 Q961.3,837.1 961.6,847.6 M961.6,847.6 Q979.7,844.5 1003.3,844.7 M961.6,847.6 Q984.4,866.9 1010.4,882.3 M968.4,875.6 Q993.8,884.2 1010.4,882.3 M968.4,875.6 Q963.2,894.5 965.8,922.5 M968.4,875.6 Q988.5,898.7 1001.6,916.1 M965.8,922.5 Q985.8,935.3 998.2,939.5 M980.8,975.4 Q992.2,973.1 1004.3,975.3 M1007.5,695.1 Q1001.9,718.7 1003.0,739.4 M1003.0,739.4 Q1013.6,731.1 1025.6,724.4 M991.4,773.0 Q1005.9,773.7 1023.8,769.3 M991.4,773.0 Q997.2,787.7 993.9,793.4 M993.9,793.4 Q1013.9,792.4 1028.7,802.3 M993.9,793.4 Q1019.1,804.5 1036.2,814.6 M994.1,823.9 Q1009.7,817.5 1036.2,814.6 M1003.3,844.7 Q1017.5,848.3 1041.3,863.3 M1001.6,916.1 Q1016.3,913.1 1029.5,913.5 M1001.6,916.1 Q996.9,925.3 998.2,939.5 M1001.6,916.1 Q1009.5,905.4 1022.0,892.5 M998.2,939.5 Q1014.9,943.2 1040.9,938.6 M1026.7,693.8 Q1024.9,709.1 1025.6,724.4 M1023.8,769.3 Q1041.3,760.6 1063.6,763.1 M1028.7,802.3 Q1046.2,797.5 1054.8,784.6 M1036.2,814.6 Q1039.4,843.5 1041.3,863.3 M1041.3,863.3 Q1028.6,883.6 1022.0,892.5 M1022.0,892.5 Q1045.4,886.0 1060.1,879.0 M1022.0,892.5 Q1048.3,896.6 1062.7,912.3 M1029.5,913.5 Q1047.8,908.2 1062.7,912.3 M1065.7,673.3 Q1067.7,692.5 1071.1,710.7 M1071.1,710.7 Q1080.7,725.5 1097.0,736.6 M1063.2,725.9 Q1083.2,729.3 1097.0,736.6 M1063.2,725.9 Q1074.7,716.2 1082.9,712.2 M1063.6,763.1 Q1074.7,753.4 1097.0,736.6 M1054.8,784.6 Q1071.3,784.3 1094.9,795.4 M1054.8,784.6 Q1057.9,805.8 1061.6,816.1 M1061.6,816.1 Q1062.3,838.2 1059.8,857.5 M1061.6,816.1 Q1079.0,804.3 1094.9,795.4 M1059.8,857.5 Q1062.5,864.5 1060.1,879.0 M1060.1,879.0 Q1070.2,891.5 1085.7,894.1 M1060.1,879.0 Q1076.1,897.3 1099.7,922.0 M1095.9,668.5 Q1110.1,661.7 1123.6,665.7 M1095.9,668.5 Q1095.2,688.8 1082.9,712.2 M1082.9,712.2 Q1103.5,708.6 1121.9,695.0 M1082.9,712.2 Q1089.9,724.4 1097.0,736.6 M1097.0,736.6 Q1100.9,739.9 1112.3,737.7 M1097.0,736.6 Q1096.9,742.3 1088.0,759.2 M1094.9,795.4 Q1097.8,806.9 1092.9,826.8 M1094.9,795.4 Q1102.8,785.6 1122.1,766.8 M1092.9,826.8 Q1099.0,818.3 1114.9,820.7 M1096.3,847.5 Q1106.6,851.7 1126.1,861.1 M1096.3,847.5 Q1100.6,863.4 1112.1,876.0 M1085.7,894.1 Q1099.3,883.6 1112.1,876.0 M1099.7,922.0 Q1113.3,913.8 1127.5,916.6 M1081.3,934.8 Q1108.6,937.4 1126.6,938.0 M1081.3,934.8 Q1084.3,958.9 1086.2,972.4 M1081.3,934.8 Q1099.0,954.3 1119.4,968.9 M1123.6,665.7 Q1138.0,666.0 1157.5,671.2 M1112.3,737.7 Q1140.0,758.2 1156.2,772.8 M1122.1,766.8 Q1140.4,775.3 1156.2,772.8 M1114.9,820.7 Q1127.6,827.1 1142.5,831.9 M1114.9,820.7 Q1123.9,835.7 1126.1,861.1 M1126.1,861.1 Q1135.4,849.5 1142.1,845.2 M1112.1,876.0 Q1130.6,882.2 1152.3,883.7 M1112.1,876.0 Q1124.0,892.7 1127.5,916.6 M1127.5,916.6 Q1135.2,907.2 1154.9,909.8 M1127.5,916.6 Q1124.4,933.2 1126.6,938.0 M1127.5,916.6 Q1142.5,896.9 1152.3,883.7 M1157.5,671.2 Q1162.6,673.5 1172.2,669.9 M1154.2,714.3 Q1173.4,716.8 1185.7,708.1 M1154.2,714.3 Q1152.2,720.6 1147.3,735.0 M1154.2,714.3 Q1164.3,716.6 1176.4,726.5 M1147.3,735.0 Q1161.7,716.0 1185.7,708.1 M1149.5,791.3 Q1141.4,813.3 1142.5,831.9 M1149.5,791.3 Q1164.2,802.7 1185.4,825.5 M1142.5,831.9 Q1164.3,824.2 1185.4,825.5 M1142.1,845.2 Q1168.0,857.0 1189.8,863.2 M1154.9,909.8 Q1172.0,893.4 1189.7,882.7 M1156.8,935.1 Q1167.7,923.8 1187.4,909.9 M1172.2,669.9 Q1178.4,689.0 1185.7,708.1 M1185.7,708.1 Q1202.0,704.4 1208.2,701.1 M1185.7,708.1 Q1180.8,715.6 1176.4,726.5 M1185.7,708.1 Q1194.5,684.5 1205.7,671.1 M1176.4,726.5 Q1173.0,746.7 1178.0,768.7 M1178.0,768.7 Q1176.5,782.0 1178.2,786.0 M1178.0,768.7 Q1198.0,750.0 1208.8,731.6 M1178.2,786.0 Q1193.3,795.1 1217.2,794.9 M1178.2,786.0 Q1200.2,802.2 1218.1,825.3 M1185.4,825.5 Q1192.8,842.4 1189.8,863.2 M1185.4,825.5 Q1198.2,837.8 1204.2,859.4 M1185.4,825.5 Q1203.1,809.8 1217.2,794.9 M1189.8,863.2 Q1205.2,843.9 1218.1,825.3 M1189.7,882.7 Q1209.3,877.6 1219.0,879.4 M1189.7,882.7 Q1200.4,903.9 1201.0,914.3 M1187.4,909.9 Q1196.9,917.0 1201.0,914.3 M1187.4,909.9 Q1199.7,923.3 1211.9,945.4 M1190.1,982.3 Q1201.5,982.7 1220.8,977.2 M1205.7,671.1 Q1225.6,670.3 1247.4,664.8 M1208.2,701.1 Q1220.2,701.6 1242.0,710.0 M1208.8,731.6 Q1219.0,724.5 1232.3,725.2 M1208.8,731.6 Q1227.8,722.0 1242.0,710.0 M1217.2,794.9 Q1219.4,808.6 1218.1,825.3 M1218.1,825.3 Q1209.4,846.5 1204.2,859.4 M1204.2,859.4 Q1213.3,866.4 1219.0,879.4 M1204.2,859.4 Q1222.4,849.4 1233.5,829.2 M1219.0,879.4 Q1225.6,879.9 1235.1,889.6 M1219.0,879.4 Q1211.6,901.6 1201.0,914.3 M1219.0,879.4 Q1227.3,902.6 1241.5,919.6 M1201.0,914.3 Q1206.1,926.3 1211.9,945.4 M1211.9,945.4 Q1228.1,937.4 1238.8,940.6 M1220.8,977.2 Q1231.3,972.3 1250.8,977.6 M1247.4,664.8 Q1244.1,688.6 1242.0,710.0 M1242.0,710.0 Q1257.9,707.5 1275.6,708.4 M1246.0,772.4 Q1257.3,785.3 1278.4,800.4 M1244.1,848.7 Q1240.0,868.1 1235.1,889.6 M1241.5,919.6 Q1255.1,910.5 1277.3,912.4 M1241.5,919.6 Q1245.6,927.8 1238.8,940.6 M1238.8,940.6 Q1248.2,957.1 1250.8,977.6 M1275.6,708.4 Q1288.4,706.5 1294.8,702.4 M1278.0,832.2 Q1288.3,828.6 1306.8,817.3 M1280.6,856.9 Q1289.7,833.9 1306.8,817.3 M1277.3,912.4 Q1275.1,927.1 1269.3,936.6 M1298.4,667.0 Q1316.5,663.4 1333.0,668.2 M1292.9,797.1 Q1296.0,802.5 1306.8,817.3 M1368.8,914.3 Q1388.3,909.3 1397.1,912.3 M1368.8,914.3 Q1387.3,924.7 1399.8,935.4 M1363.9,954.4 Q1386.4,939.0 1399.8,935.4 M1397.1,912.3 Q1418.4,912.5 1427.9,917.2 M1397.1,912.3 Q1393.5,920.3 1399.8,935.4 M1399.8,935.4 Q1402.1,935.3 1410.8,941.4 M1418.1,827.9 Q1436.0,815.4 1448.4,794.8 M1412.7,851.8 Q1411.2,875.6 1420.2,893.8 M1427.9,917.2 Q1421.0,924.1 1410.8,941.4 M1452.3,673.1 Q1464.2,668.1 1487.9,665.4 M1452.3,673.1 Q1443.3,690.4 1440.7,714.3 M1440.7,714.3 Q1468.7,691.2 1487.9,665.4 M1453.4,759.6 Q1465.8,755.4 1474.3,761.9 M1446.8,820.6 Q1461.7,835.0 1473.8,846.1 M1448.7,857.5 Q1441.4,871.6 1445.9,877.7 M1455.9,910.4 Q1465.4,890.9 1479.0,875.0 M1460.3,945.3 Q1455.3,960.2 1455.7,970.5 M1460.3,945.3 Q1471.1,961.8 1486.6,980.7 M1460.3,945.3 Q1476.3,928.0 1489.8,912.5 M1487.9,665.4 Q1481.0,677.2 1473.5,695.5 M1487.9,665.4 Q1496.1,684.4 1509.2,693.8 M1473.5,695.5 Q1491.2,694.9 1509.2,693.8 M1473.5,695.5 Q1479.5,711.7 1484.7,738.4 M1474.3,761.9 Q1489.9,782.1 1514.4,796.3 M1472.4,818.3 Q1495.7,837.8 1507.7,857.2 M1473.8,846.1 Q1471.3,862.6 1479.0,875.0 M1479.0,875.0 Q1492.2,876.1 1502.7,881.4 M1481.2,947.1 Q1500.5,941.6 1517.8,946.3 M1481.2,947.1 Q1489.3,959.4 1486.6,980.7 M1486.6,980.7 Q1498.7,974.9 1503.8,979.6 M1509.2,693.8 Q1525.9,693.4 1537.9,704.0 M1508.9,738.2 Q1523.8,740.8 1533.5,738.5 M1508.9,738.2 Q1518.3,755.1 1521.1,770.1 M1521.1,770.1 Q1533.6,771.9 1551.2,764.3 M1521.1,770.1 Q1521.0,781.6 1514.4,796.3 M1521.1,770.1 Q1532.9,757.3 1533.5,738.5 M1514.4,796.3 Q1520.5,809.4 1534.6,833.3 M1507.7,857.2 Q1521.4,846.8 1543.7,847.7 M1502.7,881.4 Q1510.9,901.1 1511.2,920.1 M1502.7,881.4 Q1517.0,901.1 1542.6,918.1 M1511.2,920.1 Q1529.3,915.9 1542.6,918.1 M1517.8,946.3 Q1523.5,955.3 1537.4,953.0 M1503.8,979.6 Q1519.4,981.3 1538.1,973.2 M1503.8,979.6 Q1518.2,960.8 1537.4,953.0 M1549.5,675.0 Q1538.7,687.8 1537.9,704.0 M1537.9,704.0 Q1550.9,688.7 1563.1,683.9 M1551.2,764.3 Q1560.5,765.2 1572.3,759.1 M1551.2,764.3 Q1549.0,783.1 1545.5,801.0 M1545.5,801.0 Q1536.5,817.0 1534.6,833.3 M1534.6,833.3 Q1558.5,828.7 1577.7,826.1 M1534.6,833.3 Q1534.6,845.7 1543.7,847.7 M1543.7,847.7 Q1559.2,850.3 1563.1,860.8 M1532.2,878.6 Q1544.9,880.5 1566.6,892.3 M1542.6,918.1 Q1555.8,912.5 1565.6,915.5 M1542.6,918.1 Q1541.1,937.3 1537.4,953.0 M1537.4,953.0 Q1555.3,940.9 1577.9,937.4 M1537.4,953.0 Q1559.1,961.2 1572.0,965.1 M1563.3,712.5 Q1585.4,707.5 1611.2,713.2 M1571.9,735.3 Q1587.3,737.0 1604.3,730.0 M1572.3,759.1 Q1577.3,776.5 1579.6,804.3 M1579.6,804.3 Q1579.5,810.0 1577.7,826.1 M1579.6,804.3 Q1591.1,790.5 1604.6,769.0 M1563.1,860.8 Q1582.4,857.9 1594.7,853.3 M1563.1,860.8 Q1560.6,876.1 1566.6,892.3 M1563.1,860.8 Q1573.7,866.2 1593.5,881.6 M1566.6,892.3 Q1584.0,888.3 1593.5,881.6 M1565.6,915.5 Q1588.1,912.4 1602.5,907.1 M1565.6,915.5 Q1575.9,897.8 1593.5,881.6 M1572.0,965.1 Q1587.9,966.7 1602.4,970.5 M1591.2,667.3 Q1609.0,660.0 1634.0,664.3 M1591.2,667.3 Q1604.9,694.7 1611.2,713.2 M1611.2,713.2 Q1623.8,701.8 1634.6,696.5 M1604.3,730.0 Q1623.8,730.5 1640.6,736.1 M1598.5,795.9 Q1604.7,802.6 1607.4,813.8 M1598.5,795.9 Q1611.9,813.9 1636.4,829.3 M1607.4,813.8 Q1625.2,817.3 1636.4,829.3 M1602.5,907.1 Q1614.3,910.7 1629.1,912.6 M1602.5,907.1 Q1603.6,927.5 1601.4,939.0 M1601.4,939.0 Q1615.3,945.0 1632.4,952.5 M1634.6,696.5 Q1641.4,694.9 1657.2,694.6 M1630.4,762.1 Q1628.7,777.4 1633.6,798.0 M1633.6,798.0 Q1650.2,790.0 1666.3,789.9 M1630.7,864.4 Q1637.2,878.9 1638.1,891.5 M1659.6,682.5 Q1666.7,674.8 1685.5,664.9 M1663.0,815.0 Q1673.7,828.4 1692.4,832.5 M1663.0,815.0 Q1660.6,830.0 1653.1,852.9 M1653.1,852.9 Q1672.1,850.6 1682.6,860.1 M1651.6,918.1 Q1669.1,928.6 1685.6,939.8 M1685.2,799.2 Q1694.5,816.4 1692.4,832.5 M1682.6,860.1 Q1687.3,871.7 1683.1,884.8 M1700.5,903.5 Q1698.9,915.8 1685.6,939.8 M1700.5,903.5 Q1718.1,919.5 1728.1,940.9 M1700.5,903.5 Q1704.7,898.1 1716.7,892.9 M1685.6,939.8 Q1682.5,946.5 1687.3,964.8 M1685.6,939.8 Q1700.8,953.3 1720.4,967.1 M1720.4,847.8 Q1724.5,869.8 1716.7,892.9 M1716.7,892.9 Q1727.7,894.0 1749.8,905.2 M1729.3,907.6 Q1736.8,909.6 1749.8,905.2 M1749.8,905.2 Q1763.6,906.9 1779.7,914.6 M1745.2,940.0 Q1762.4,924.3 1779.7,914.6 M1755.4,967.6 Q1774.6,968.3 1783.1,969.5 M1774.3,668.4 Q1791.6,669.8 1805.8,680.4 M1774.3,668.4 Q1774.9,683.6 1784.5,710.1 M1841.1,711.3 Q1856.9,706.7 1872.5,711.8 M1839.7,859.7 Q1858.2,844.6 1866.0,830.3" fill="none" stroke="#fff" stroke-width="1.3"/>
<path d="M967.1,826.5 Q979.1,824.0 988.1,824.2 M967.1,826.5 Q970.5,839.9 980.0,848.2 M973.1,845.8 Q977.5,846.0 980.0,848.2 M990.4,787.5 Q987.7,799.2 981.0,812.8 M981.0,812.8 Q992.1,810.0 1002.6,807.9 M981.0,812.8 Q987.3,817.4 988.1,824.2 M981.0,812.8 Q993.7,807.6 1000.4,795.8 M988.1,824.2 Q985.1,836.0 980.0,848.2 M980.0,848.2 Q994.8,848.8 1005.0,848.0 M990.6,865.9 Q989.2,869.0 985.8,873.1 M985.8,873.1 Q989.7,872.2 999.4,877.6 M985.8,873.1 Q983.5,884.4 987.9,896.8 M987.9,896.8 Q997.0,895.1 999.6,898.9 M998.6,773.3 Q1002.0,783.5 1000.4,795.8 M1000.4,795.8 Q999.2,801.3 1002.6,807.9 M996.7,830.4 Q1004.6,829.7 1017.3,824.2 M996.7,830.4 Q1001.0,838.6 1005.0,848.0 M1005.0,848.0 Q1009.8,843.6 1020.5,839.6 M1005.4,855.8 Q1009.3,858.2 1015.2,856.2 M1005.4,855.8 Q1000.3,864.5 999.4,877.6 M999.4,877.6 Q1008.9,876.2 1020.8,876.7 M999.6,898.9 Q1012.5,902.2 1019.4,910.1 M998.5,906.2 Q1005.8,909.2 1019.4,910.1 M1021.8,779.6 Q1031.6,780.7 1041.3,781.0 M1019.4,797.9 Q1029.3,793.2 1036.4,788.1 M1019.4,797.9 Q1019.5,808.5 1024.8,813.5 M1024.8,813.5 Q1019.8,817.7 1017.3,824.2 M1024.8,813.5 Q1031.2,820.1 1039.4,828.6 M1017.3,824.2 Q1025.8,829.5 1039.4,828.6 M1020.5,839.6 Q1028.5,837.6 1036.8,840.1 M1020.8,876.7 Q1019.5,887.3 1024.0,898.6 M1024.0,898.6 Q1034.9,891.1 1041.4,889.6 M1019.4,910.1 Q1030.0,910.2 1039.1,907.5 M1019.4,910.1 Q1027.2,897.0 1041.4,889.6 M1016.9,923.7 Q1021.9,927.5 1031.3,934.0 M1031.1,762.4 Q1042.5,759.4 1053.2,753.9 M1041.3,781.0 Q1043.2,780.4 1048.7,776.1 M1041.3,781.0 Q1038.2,781.9 1036.4,788.1 M1036.4,788.1 Q1048.2,788.5 1053.5,789.6 M1036.4,788.1 Q1043.6,795.3 1054.0,807.8 M1039.3,810.1 Q1044.4,806.5 1054.0,807.8 M1039.4,828.6 Q1045.9,825.5 1055.4,821.7 M1039.4,828.6 Q1045.9,836.9 1057.1,843.4 M1036.8,840.1 Q1031.5,845.1 1031.8,856.0 M1031.8,856.0 Q1039.5,858.2 1049.1,858.5 M1031.8,856.0 Q1035.7,862.4 1035.2,875.5 M1035.2,875.5 Q1048.2,874.6 1054.5,873.2 M1035.2,875.5 Q1040.0,879.4 1041.4,889.6 M1041.4,889.6 Q1037.3,900.8 1039.1,907.5 M1039.1,907.5 Q1048.4,917.7 1052.5,934.5 M1031.3,934.0 Q1039.9,934.3 1052.5,934.5 M1052.5,736.2 Q1058.9,737.7 1071.4,743.5 M1053.2,753.9 Q1059.6,754.3 1070.6,755.8 M1053.2,753.9 Q1049.3,764.9 1048.7,776.1 M1053.2,753.9 Q1060.1,748.5 1071.4,743.5 M1048.7,776.1 Q1052.2,783.3 1053.5,789.6 M1053.5,789.6 Q1053.9,797.1 1054.0,807.8 M1053.5,789.6 Q1061.5,781.4 1066.9,771.1 M1054.0,807.8 Q1057.7,814.5 1065.1,814.5 M1055.4,821.7 Q1059.8,814.8 1065.1,814.5 M1057.1,843.4 Q1068.2,841.8 1075.5,845.5 M1057.1,843.4 Q1052.0,854.1 1049.1,858.5 M1049.1,858.5 Q1052.2,862.9 1054.5,873.2 M1054.5,873.2 Q1054.8,881.3 1057.9,891.7 M1057.9,891.7 Q1062.7,890.8 1064.8,891.9 M1057.9,891.7 Q1051.8,901.3 1051.9,906.9 M1051.9,906.9 Q1060.7,901.2 1064.8,891.9 M1052.5,934.5 Q1059.7,932.4 1069.8,925.8 M1071.4,743.5 Q1067.7,753.1 1070.6,755.8 M1071.4,743.5 Q1078.5,753.2 1091.9,761.7 M1070.6,755.8 Q1079.3,755.5 1091.9,761.7 M1070.6,755.8 Q1067.8,762.4 1066.9,771.1 M1064.7,794.0 Q1076.7,796.0 1089.3,798.0 M1064.7,794.0 Q1066.8,802.3 1065.1,814.5 M1065.1,814.5 Q1067.7,820.7 1075.5,822.8 M1075.5,822.8 Q1079.8,814.4 1088.1,811.9 M1075.5,845.5 Q1071.2,850.3 1064.1,859.6 M1064.1,859.6 Q1074.3,863.4 1083.3,861.0 M1064.1,859.6 Q1068.2,864.6 1068.3,875.7 M1068.3,875.7 Q1078.9,880.8 1084.8,880.5 M1068.3,875.7 Q1068.0,884.9 1064.8,891.9 M1064.8,891.9 Q1079.3,888.9 1088.6,889.1 M1090.7,743.2 Q1098.5,737.9 1109.9,736.9 M1090.7,743.2 Q1091.6,750.8 1091.9,761.7 M1090.7,743.2 Q1095.4,738.7 1106.0,728.6 M1091.9,761.7 Q1095.9,756.2 1100.6,755.8 M1091.9,761.7 Q1101.8,768.3 1107.8,781.0 M1089.3,798.0 Q1087.3,803.4 1088.1,811.9 M1088.1,811.9 Q1095.9,809.3 1108.6,812.6 M1088.1,811.9 Q1088.9,822.8 1087.6,827.4 M1092.3,841.6 Q1099.3,837.3 1109.0,839.1 M1092.3,841.6 Q1090.7,851.2 1083.3,861.0 M1083.3,861.0 Q1084.1,869.5 1084.8,880.5 M1083.3,861.0 Q1095.4,847.5 1109.0,839.1 M1088.6,889.1 Q1084.7,903.6 1083.5,913.4 M1088.6,889.1 Q1097.9,899.3 1108.8,915.5 M1106.0,728.6 Q1105.8,730.8 1109.9,736.9 M1109.9,736.9 Q1121.3,740.9 1126.7,740.3 M1109.9,736.9 Q1102.1,749.7 1100.6,755.8 M1100.6,755.8 Q1100.9,770.9 1107.8,781.0 M1107.8,781.0 Q1107.3,787.7 1100.7,792.8 M1100.7,792.8 Q1110.3,794.4 1124.3,795.8 M1108.6,812.6 Q1111.5,809.5 1119.1,809.9 M1108.6,812.6 Q1106.6,825.2 1105.0,831.7 M1109.0,839.1 Q1109.5,839.6 1116.0,845.7 M1105.4,881.0 Q1117.5,865.7 1126.4,856.8 M1101.5,892.7 Q1111.3,891.7 1124.4,895.8 M1101.5,892.7 Q1103.4,906.2 1108.8,915.5 M1108.8,915.5 Q1116.4,903.6 1124.4,895.8 M1123.2,711.7 Q1131.7,709.7 1133.6,709.4 M1116.5,725.2 Q1118.7,735.8 1126.7,740.3 M1115.3,780.4 Q1125.9,781.1 1133.7,775.3 M1115.3,780.4 Q1122.7,783.7 1133.1,793.7 M1119.1,809.9 Q1125.9,802.7 1133.1,793.7 M1126.2,821.8 Q1131.7,824.3 1136.3,821.1 M1126.2,821.8 Q1122.7,835.2 1116.0,845.7 M1126.4,856.8 Q1123.9,867.5 1117.3,877.5 M1124.4,895.8 Q1129.1,890.5 1140.6,890.4 M1124.4,895.8 Q1123.7,898.3 1122.9,906.7 M1122.9,906.7 Q1133.7,906.2 1139.4,907.6 M1122.9,906.7 Q1132.3,896.0 1140.6,890.4 M1117.4,930.0 Q1126.5,928.6 1138.4,924.2 M1139.7,679.4 Q1136.8,690.3 1139.6,696.0 M1139.6,696.0 Q1146.9,689.1 1151.6,687.3 M1139.6,696.0 Q1151.8,685.5 1157.8,672.4 M1133.6,709.4 Q1146.5,711.7 1154.1,712.0 M1136.4,729.1 Q1143.1,731.0 1154.3,728.7 M1142.9,764.4 Q1136.2,772.2 1133.7,775.3 M1142.9,764.4 Q1148.2,767.9 1157.7,771.1 M1133.7,775.3 Q1142.4,774.3 1157.7,771.1 M1133.7,775.3 Q1131.9,781.8 1133.1,793.7 M1133.1,793.7 Q1134.3,802.0 1134.7,812.4 M1134.7,812.4 Q1146.1,807.2 1152.5,808.1 M1136.3,821.1 Q1143.8,821.3 1151.4,827.9 M1136.3,821.1 Q1138.0,829.5 1142.6,839.6 M1142.6,839.6 Q1146.8,840.8 1149.5,840.9 M1135.2,861.2 Q1149.4,870.9 1159.0,880.2 M1135.2,861.2 Q1144.0,851.1 1149.5,840.9 M1132.7,881.2 Q1136.5,888.5 1140.6,890.4 M1140.6,890.4 Q1149.6,892.1 1159.6,890.6 M1138.4,924.2 Q1150.0,925.3 1155.1,933.0 M1138.4,924.2 Q1134.9,936.9 1135.4,945.4 M1157.8,672.4 Q1157.3,682.1 1151.6,687.3 M1154.1,712.0 Q1158.8,714.2 1168.1,712.1 M1154.1,712.0 Q1153.1,722.3 1154.3,728.7 M1154.3,728.7 Q1162.2,729.9 1167.4,724.3 M1154.7,743.0 Q1162.4,742.5 1168.7,739.0 M1154.7,743.0 Q1155.0,751.2 1152.1,757.9 M1152.1,757.9 Q1161.7,760.0 1177.9,761.5 M1157.7,771.1 Q1158.5,780.0 1154.5,790.1 M1154.5,790.1 Q1163.0,791.2 1177.7,798.5 M1152.5,808.1 Q1163.7,804.7 1173.6,806.8 M1152.5,808.1 Q1153.5,816.1 1151.4,827.9 M1152.5,808.1 Q1160.6,821.1 1166.6,827.5 M1151.4,827.9 Q1159.3,838.7 1171.8,848.3 M1149.5,840.9 Q1151.7,846.1 1152.2,857.2 M1149.5,840.9 Q1158.0,836.1 1166.6,827.5 M1159.6,890.6 Q1165.7,891.9 1173.3,889.5 M1151.3,909.8 Q1153.2,921.4 1155.1,933.0 M1155.1,933.0 Q1162.0,934.9 1175.5,931.9 M1167.6,678.4 Q1180.8,679.1 1194.0,678.0 M1167.6,678.4 Q1168.6,684.9 1168.6,688.8 M1168.6,688.8 Q1166.0,698.8 1168.1,712.1 M1167.4,724.3 Q1177.4,720.7 1186.9,719.6 M1167.4,724.3 Q1170.9,728.8 1168.7,739.0 M1168.7,739.0 Q1181.0,734.3 1187.8,736.1 M1168.7,739.0 Q1172.9,751.2 1177.9,761.5 M1177.9,761.5 Q1179.7,764.8 1174.8,774.3 M1174.8,774.3 Q1179.8,775.9 1188.8,770.8 M1177.7,798.5 Q1176.3,800.6 1173.6,806.8 M1173.6,806.8 Q1179.1,802.6 1186.5,805.2 M1173.6,806.8 Q1168.8,814.5 1166.6,827.5 M1173.6,806.8 Q1180.2,814.5 1188.1,827.9 M1166.6,827.5 Q1176.5,824.8 1188.1,827.9 M1166.6,827.5 Q1175.7,819.2 1186.5,805.2 M1171.8,848.3 Q1182.7,839.9 1188.1,827.9 M1177.9,864.8 Q1186.1,862.0 1189.7,863.9 M1168.9,883.8 Q1178.7,882.1 1187.9,883.8 M1168.9,883.8 Q1168.5,888.6 1173.3,889.5 M1173.3,889.5 Q1168.8,902.9 1168.5,917.5 M1187.7,695.2 Q1186.7,699.2 1185.1,706.2 M1187.7,695.2 Q1198.6,707.5 1209.4,713.3 M1185.1,706.2 Q1193.3,719.3 1200.9,725.8 M1186.9,719.6 Q1196.6,723.9 1200.9,725.8 M1188.8,770.8 Q1188.2,780.5 1186.2,796.2 M1186.5,805.2 Q1198.6,802.2 1209.7,805.2 M1188.1,827.9 Q1195.6,829.8 1208.7,829.5 M1188.1,827.9 Q1197.6,841.2 1205.6,849.4 M1184.6,842.5 Q1183.8,850.4 1189.7,863.9 M1189.7,863.9 Q1185.9,876.0 1187.9,883.8 M1189.7,863.9 Q1194.2,855.3 1205.6,849.4 M1187.9,883.8 Q1194.3,877.3 1207.6,865.6 M1186.1,898.0 Q1196.3,899.2 1203.5,895.0 M1206.8,672.7 Q1215.8,670.0 1221.5,670.9 M1203.8,694.8 Q1208.5,706.0 1209.4,713.3 M1209.4,713.3 Q1216.4,713.9 1221.1,713.3 M1200.9,725.8 Q1213.6,727.7 1224.6,724.2 M1208.4,738.6 Q1213.9,737.4 1218.9,736.6 M1208.4,738.6 Q1203.5,754.1 1200.3,763.7 M1204.0,792.3 Q1209.5,799.1 1209.7,805.2 M1208.7,829.5 Q1220.8,828.1 1226.5,824.8 M1208.7,829.5 Q1215.8,833.2 1221.0,843.2 M1205.6,849.4 Q1212.5,844.4 1221.0,843.2 M1205.6,849.4 Q1206.1,854.9 1207.6,865.6 M1207.6,865.6 Q1216.4,864.2 1220.6,864.1 M1207.6,865.6 Q1206.8,870.4 1202.4,876.9 M1207.6,865.6 Q1212.1,857.4 1221.0,843.2 M1202.4,876.9 Q1203.6,883.2 1203.5,895.0 M1221.5,670.9 Q1231.3,675.8 1236.5,675.4 M1218.0,691.4 Q1227.8,691.2 1236.8,686.3 M1218.0,691.4 Q1217.9,704.6 1221.1,713.3 M1218.0,691.4 Q1226.9,702.3 1234.9,709.5 M1221.1,713.3 Q1228.7,710.3 1234.9,709.5 M1224.6,724.2 Q1220.2,731.5 1218.9,736.6 M1218.9,736.6 Q1227.0,738.6 1241.1,746.5 M1218.9,736.6 Q1222.3,747.3 1225.2,760.3 M1218.9,736.6 Q1234.3,743.5 1244.1,756.2 M1221.0,843.2 Q1221.9,853.7 1220.6,864.1 M1236.5,675.4 Q1234.1,679.3 1236.8,686.3 M1236.8,686.3 Q1249.5,689.6 1255.5,688.4 M1236.8,686.3 Q1232.5,700.1 1234.9,709.5 M1236.8,686.3 Q1251.0,697.7 1262.9,709.1 M1234.9,709.5 Q1241.4,721.2 1244.5,728.2 M1234.9,709.5 Q1245.7,719.5 1259.3,724.8 M1244.5,728.2 Q1254.0,729.9 1259.3,724.8 M1244.5,728.2 Q1250.4,716.1 1262.9,709.1 M1241.1,746.5 Q1252.9,745.3 1258.5,740.7 M1241.1,746.5 Q1241.9,751.7 1244.1,756.2 M1241.1,746.5 Q1248.1,734.3 1259.3,724.8 M1255.3,679.8 Q1258.7,684.9 1255.5,688.4 M1255.5,688.4 Q1256.5,698.5 1262.9,709.1 M1262.9,709.1 Q1267.3,710.2 1278.1,705.8 M1262.9,709.1 Q1262.7,719.5 1259.3,724.8 M1259.3,724.8 Q1258.9,729.4 1258.5,740.7 M1258.5,740.7 Q1266.5,747.0 1278.8,747.6" fill="none" stroke="#f7c350" stroke-width="1.5"/>
<path d="M1012.1,815.0 Q1018.4,814.1 1025.3,817.4 M1012.1,815.0 Q1015.9,823.7 1022.9,828.8 M1012.4,830.2 Q1016.4,829.1 1022.9,828.8 M1012.4,830.2 Q1011.7,832.7 1013.4,836.6 M1012.4,830.2 Q1019.7,822.6 1025.3,817.4 M1013.4,836.6 Q1012.8,843.9 1010.0,847.4 M1013.4,836.6 Q1020.4,844.8 1023.3,849.9 M1010.0,847.4 Q1010.4,853.0 1013.5,862.6 M1013.5,862.6 Q1014.4,860.4 1019.1,860.9 M1013.5,862.6 Q1010.9,869.0 1011.5,872.4 M1013.5,862.6 Q1020.0,854.8 1023.3,849.9 M1011.5,872.4 Q1014.4,874.4 1021.4,873.4 M1020.6,807.8 Q1025.0,803.8 1031.8,803.1 M1020.6,807.8 Q1023.7,813.7 1025.3,817.4 M1022.9,828.8 Q1028.8,835.1 1034.9,841.4 M1025.3,842.6 Q1032.1,843.0 1034.9,841.4 M1023.3,849.9 Q1027.1,850.4 1032.7,851.1 M1023.3,849.9 Q1019.1,857.6 1019.1,860.9 M1023.3,849.9 Q1028.7,854.7 1035.9,860.4 M1019.1,860.9 Q1026.6,860.6 1035.9,860.4 M1021.4,873.4 Q1030.1,874.8 1035.2,872.5 M1021.4,873.4 Q1023.1,879.0 1021.9,881.0 M1021.9,881.0 Q1029.1,884.6 1035.2,885.7 M1036.2,786.9 Q1034.5,791.3 1035.3,798.3 M1035.3,798.3 Q1042.6,795.1 1047.5,793.0 M1031.8,803.1 Q1032.5,813.9 1032.5,820.2 M1031.8,803.1 Q1040.4,811.0 1047.4,816.0 M1032.5,820.2 Q1042.1,817.3 1047.4,816.0 M1032.5,820.2 Q1038.0,813.4 1043.1,808.3 M1034.4,825.0 Q1040.7,829.6 1043.6,830.6 M1032.7,851.1 Q1036.3,852.9 1040.2,857.6 M1035.9,860.4 Q1039.6,858.8 1040.2,857.6 M1035.2,872.5 Q1033.5,879.0 1035.2,885.7 M1035.2,885.7 Q1039.3,882.5 1046.5,881.5 M1035.2,885.7 Q1033.8,888.8 1030.3,891.6 M1030.3,891.6 Q1035.2,892.6 1042.8,897.4 M1033.7,903.8 Q1038.3,900.7 1042.8,897.4 M1047.5,793.0 Q1045.5,801.2 1043.1,808.3 M1043.1,808.3 Q1048.0,806.5 1056.5,802.4 M1043.1,808.3 Q1044.5,812.4 1047.4,816.0 M1047.4,816.0 Q1052.6,815.3 1054.9,813.2 M1043.6,830.6 Q1049.7,832.9 1057.2,831.4 M1043.6,830.6 Q1045.6,832.3 1043.9,836.1 M1043.9,836.1 Q1048.8,842.4 1054.7,852.0 M1041.8,848.8 Q1042.9,855.1 1040.2,857.6 M1040.2,857.6 Q1042.0,866.6 1047.0,874.6 M1047.0,874.6 Q1051.8,877.3 1054.7,881.9 M1046.5,881.5 Q1046.3,887.4 1042.8,897.4 M1042.8,897.4 Q1048.2,889.5 1054.7,881.9 M1040.6,904.5 Q1048.4,904.7 1054.5,902.1 M1055.2,791.7 Q1059.2,792.4 1062.3,795.2 M1055.2,791.7 Q1057.8,796.1 1056.5,802.4 M1056.5,802.4 Q1061.8,807.8 1069.1,816.1 M1054.9,813.2 Q1063.2,816.1 1069.1,816.1 M1054.9,813.2 Q1056.9,820.9 1057.2,831.4 M1054.9,813.2 Q1060.7,811.0 1068.9,806.0 M1057.2,831.4 Q1062.2,824.5 1069.1,816.1 M1056.9,838.7 Q1060.9,837.8 1065.5,837.5 M1056.9,838.7 Q1054.8,844.3 1054.7,852.0 M1054.7,852.0 Q1054.2,857.6 1051.7,859.9 M1051.7,859.9 Q1055.0,863.4 1054.8,869.5 M1051.7,859.9 Q1059.6,863.1 1065.4,870.0 M1054.8,869.5 Q1054.6,874.0 1054.7,881.9 M1052.2,894.7 Q1053.8,896.3 1054.5,902.1 M1052.2,894.7 Q1058.8,887.6 1066.0,881.7 M1054.5,902.1 Q1053.5,908.1 1055.3,913.9 M1055.3,913.9 Q1062.7,911.8 1066.9,907.1 M1068.0,772.5 Q1071.5,778.5 1074.3,787.3 M1067.1,782.9 Q1070.7,775.5 1078.7,769.5 M1062.3,795.2 Q1066.8,797.5 1074.8,796.1 M1062.3,795.2 Q1068.1,789.5 1074.3,787.3 M1068.9,806.0 Q1072.1,813.3 1076.7,816.4 M1069.1,816.1 Q1073.4,816.2 1076.7,816.4 M1069.1,816.1 Q1073.0,822.5 1076.2,825.3 M1069.1,816.1 Q1073.9,811.7 1080.3,808.1 M1064.1,825.4 Q1072.4,819.5 1076.7,816.4 M1065.5,837.5 Q1062.5,843.8 1063.0,848.6 M1063.0,848.6 Q1069.3,847.4 1079.0,849.8 M1065.4,870.0 Q1068.7,872.7 1074.1,873.7 M1065.4,870.0 Q1066.6,874.1 1066.0,881.7 M1066.0,881.7 Q1073.2,883.4 1077.0,882.1 M1066.0,881.7 Q1072.8,886.7 1080.7,893.0 M1066.9,892.3 Q1065.0,897.8 1066.9,907.1 M1066.9,907.1 Q1064.1,910.8 1064.3,913.9 M1078.7,769.5 Q1077.7,776.7 1074.3,787.3 M1074.3,787.3 Q1084.3,784.3 1090.8,781.8 M1074.3,787.3 Q1077.9,781.0 1085.9,776.4 M1074.8,796.1 Q1080.6,786.8 1090.8,781.8 M1080.3,808.1 Q1084.5,808.4 1084.7,809.4 M1080.3,808.1 Q1077.1,812.0 1076.7,816.4 M1076.2,825.3 Q1078.5,827.6 1084.6,827.9 M1079.2,839.2 Q1082.4,837.3 1088.5,836.1 M1079.0,849.8 Q1076.8,853.2 1075.0,859.1 M1077.0,882.1 Q1082.9,882.2 1086.8,884.1 M1075.9,902.9 Q1082.6,904.5 1086.1,902.3 M1075.9,902.9 Q1075.0,906.7 1075.3,914.1 M1075.3,914.1 Q1078.8,917.1 1084.9,917.0 M1075.3,914.1 Q1080.4,907.1 1086.1,902.3 M1085.9,776.4 Q1090.8,773.4 1099.1,773.3 M1085.9,776.4 Q1090.4,780.5 1090.8,781.8 M1090.8,781.8 Q1094.3,782.1 1101.9,785.2 M1085.2,795.4 Q1085.4,803.6 1084.7,809.4 M1084.7,809.4 Q1089.6,806.2 1097.5,803.8 M1086.7,815.6 Q1085.6,823.9 1084.6,827.9 M1089.5,850.1 Q1088.4,855.0 1090.5,864.2 M1087.3,893.7 Q1085.0,898.2 1086.1,902.3 M1087.3,893.7 Q1096.5,887.3 1101.6,882.3 M1084.9,917.0 Q1092.4,916.9 1101.9,913.9 M1099.1,773.3 Q1106.1,781.2 1109.4,786.4 M1101.6,792.1 Q1105.3,792.9 1109.4,795.4 M1097.5,803.8 Q1099.2,810.3 1099.1,815.2 M1099.1,815.2 Q1103.9,814.0 1107.4,814.0 M1099.1,815.2 Q1102.7,818.6 1109.8,825.3 M1099.1,815.2 Q1103.7,811.6 1111.7,808.9 M1102.1,825.8 Q1105.5,829.7 1112.3,837.8 M1098.1,838.3 Q1105.4,837.3 1112.3,837.8 M1097.9,874.6 Q1102.4,873.3 1108.2,869.8 M1101.6,882.3 Q1103.0,883.9 1108.3,884.7 M1101.6,882.3 Q1104.1,887.6 1107.1,894.0 M1102.4,897.3 Q1106.3,892.6 1108.3,884.7 M1096.9,905.4 Q1102.0,904.8 1111.1,901.3 M1096.9,905.4 Q1104.9,910.8 1112.5,918.0 M1107.2,774.7 Q1114.3,780.0 1123.4,780.9 M1109.8,825.3 Q1115.4,835.0 1124.8,841.3 M1112.3,837.8 Q1117.1,838.1 1124.8,841.3 M1112.3,837.8 Q1110.5,843.0 1108.9,846.8 M1112.3,837.8 Q1114.4,842.7 1119.1,848.7 M1112.3,837.8 Q1117.0,835.2 1120.9,829.7 M1108.3,859.9 Q1112.0,852.2 1119.1,848.7 M1108.3,884.7 Q1109.5,889.2 1107.1,894.0 M1108.3,884.7 Q1115.9,892.6 1122.6,896.9 M1108.3,884.7 Q1117.3,880.0 1124.7,874.7 M1107.1,894.0 Q1113.8,893.8 1122.6,896.9 M1111.1,901.3 Q1114.5,907.1 1118.9,915.3 M1112.5,918.0 Q1116.6,916.2 1118.9,915.3 M1123.4,780.9 Q1129.2,779.9 1132.1,780.9 M1123.4,780.9 Q1119.7,788.0 1119.4,794.4 M1119.4,794.4 Q1124.3,795.2 1128.3,795.7 M1124.2,803.2 Q1127.8,806.7 1130.9,808.6 M1124.2,803.2 Q1121.8,810.8 1121.1,819.2 M1121.1,819.2 Q1127.2,817.4 1134.0,818.3 M1124.8,841.3 Q1121.6,846.7 1119.1,848.7 M1124.8,841.3 Q1127.2,846.5 1130.1,849.7 M1119.1,848.7 Q1124.1,850.6 1130.1,849.7 M1121.4,862.9 Q1124.2,867.8 1124.7,874.7 M1122.6,896.9 Q1127.7,894.7 1129.8,890.2 M1123.3,902.5 Q1126.6,905.6 1132.6,908.5 M1123.3,902.5 Q1122.1,908.2 1118.9,915.3 M1118.9,915.3 Q1127.6,912.2 1132.6,908.5 M1128.3,795.7 Q1135.8,795.4 1140.7,794.1 M1130.9,808.6 Q1137.4,808.1 1143.6,807.5 M1132.6,826.0 Q1134.7,831.2 1132.6,840.3 M1132.6,840.3 Q1130.1,842.9 1130.1,849.7 M1130.1,849.7 Q1134.0,850.9 1141.2,850.5 M1130.1,849.7 Q1131.5,857.6 1128.7,862.3 M1128.7,862.3 Q1133.2,854.2 1141.2,850.5 M1131.5,869.8 Q1137.7,873.3 1144.5,874.9 M1131.5,869.8 Q1130.7,877.1 1133.6,885.3 M1133.6,885.3 Q1137.5,883.7 1142.2,880.2 M1133.6,885.3 Q1131.1,889.0 1129.8,890.2 M1129.8,890.2 Q1136.3,892.1 1145.2,891.5 M1132.6,908.5 Q1138.5,900.2 1145.2,891.5 M1144.5,786.6 Q1142.0,791.4 1140.7,794.1 M1140.7,794.1 Q1148.3,795.2 1157.7,793.6 M1143.6,807.5 Q1150.1,806.5 1155.6,805.0 M1143.5,813.4 Q1148.4,815.5 1156.1,813.6 M1143.5,813.4 Q1141.3,820.4 1141.0,826.9 M1143.5,813.4 Q1152.5,820.6 1157.7,826.1 M1141.0,826.9 Q1149.9,833.8 1155.8,837.6 M1145.8,839.9 Q1142.6,844.8 1141.2,850.5 M1141.2,850.5 Q1147.7,851.2 1150.3,850.3 M1141.2,850.5 Q1142.6,856.6 1141.4,864.6 M1141.2,850.5 Q1145.8,855.1 1151.1,863.2 M1141.4,864.6 Q1145.1,862.0 1151.1,863.2 M1142.2,880.2 Q1147.9,881.6 1154.3,883.7 M1142.2,880.2 Q1143.9,887.6 1145.2,891.5 M1142.2,880.2 Q1147.0,874.5 1151.8,868.5 M1145.2,891.5 Q1144.9,898.5 1145.7,907.1 M1156.1,813.6 Q1155.6,821.8 1157.7,826.1 M1157.7,826.1 Q1155.7,830.3 1155.8,837.6 M1155.8,837.6 Q1160.4,834.9 1164.6,835.5 M1150.3,850.3 Q1159.6,858.0 1167.7,861.7 M1151.1,863.2 Q1155.4,855.0 1163.6,850.1 M1165.9,819.7 Q1164.7,823.4 1163.4,825.3 M1163.4,825.3 Q1171.1,827.1 1179.4,831.8 M1163.6,850.1 Q1165.2,855.4 1167.7,861.7 M1178.6,694.2 Q1181.6,693.7 1184.0,696.3 M1190.3,705.5 Q1187.4,714.6 1188.2,720.4 M1188.2,720.4 Q1192.3,718.6 1195.1,719.0 M1201.0,672.0 Q1203.0,675.2 1205.7,677.3 M1200.9,688.5 Q1199.5,694.8 1197.1,698.1 M1197.1,698.1 Q1201.5,699.9 1208.4,698.0 M1195.8,707.1 Q1202.2,709.0 1208.0,709.3 M1195.1,719.0 Q1205.4,718.6 1212.4,719.3 M1207.5,681.8 Q1216.0,684.9 1221.9,687.3 M1208.4,698.0 Q1212.1,698.1 1216.6,695.9 M1208.0,709.3 Q1211.3,716.0 1212.4,719.3 M1212.4,719.3 Q1218.1,715.6 1223.0,714.2 M1220.2,676.8 Q1220.3,684.2 1221.9,687.3 M1220.2,676.8 Q1227.1,679.5 1229.5,683.7 M1221.9,687.3 Q1226.9,685.0 1229.5,683.7 M1221.9,687.3 Q1218.8,690.8 1216.6,695.9 M1216.6,695.9 Q1216.0,704.3 1219.4,708.7 M1219.4,708.7 Q1223.1,706.8 1228.4,708.7 M1219.4,708.7 Q1222.6,713.4 1223.0,714.2 M1223.0,714.2 Q1225.6,716.1 1227.5,718.7 M1222.8,727.7 Q1227.9,729.6 1230.0,727.7 M1229.1,670.3 Q1239.0,671.8 1244.8,674.1 M1229.5,683.7 Q1234.8,685.7 1243.1,683.9 M1229.5,683.7 Q1230.4,690.0 1232.3,692.7 M1232.3,692.7 Q1239.8,698.5 1244.9,706.4 M1228.4,708.7 Q1229.3,711.7 1227.5,718.7 M1228.4,708.7 Q1235.7,713.2 1241.9,714.9 M1227.5,718.7 Q1236.1,715.7 1241.9,714.9 M1230.0,727.7 Q1235.1,726.0 1242.1,726.7 M1230.0,727.7 Q1233.9,722.4 1241.9,714.9 M1244.8,674.1 Q1247.1,674.9 1249.3,675.6 M1244.8,674.1 Q1244.8,678.6 1243.1,683.9 M1243.1,683.9 Q1244.6,690.2 1242.3,693.0 M1242.3,693.0 Q1246.0,703.6 1253.1,710.5 M1241.9,714.9 Q1240.4,722.5 1242.1,726.7 M1241.9,714.9 Q1247.5,722.2 1251.3,731.1 M1253.1,685.5 Q1261.2,688.6 1265.3,687.5 M1255.7,693.0 Q1258.2,692.0 1264.7,694.4 M1253.1,710.5 Q1258.5,708.6 1264.5,710.7 M1253.1,710.5 Q1252.6,713.1 1251.0,718.9 M1264.7,694.4 Q1270.6,693.3 1272.4,695.3 M1264.7,694.4 Q1268.1,698.3 1273.9,704.6 M1264.5,710.7 Q1269.6,703.3 1272.4,695.3" fill="none" stroke="#f7c350" stroke-width="1.3"/>
<path d="M281.0,782.6 L306.1,774.3 L331.1,782.6 L343.7,811.8 L331.1,832.7 L322.8,849.4" fill="none" stroke="#fff" stroke-width="1.1" stroke-linejoin="round"/>
<path d="M331.1,674.0 L335.3,699.1 L326.9,724.1 L339.5,757.5" fill="none" stroke="#fff" stroke-width="1.1" stroke-linejoin="round"/>
<path d="M531.6,674.0 L540.0,690.7 L548.3,707.4" fill="none" stroke="#fff" stroke-width="1.1" stroke-linejoin="round"/>
<path d="M627.7,732.5 L648.6,757.5 L656.9,782.6" fill="none" stroke="#fff" stroke-width="1.1" stroke-linejoin="round"/>
<path d="M598.5,832.7 L623.5,824.4 L648.6,832.7" fill="none" stroke="#fff" stroke-width="1.1" stroke-linejoin="round"/>
<path d="M606.8,857.8 L581.8,891.2 L556.7,924.6 L531.6,949.7" fill="none" stroke="#fff" stroke-width="1.1" stroke-linejoin="round"/>
<path d="M698.7,699.1 L723.8,690.7 L748.8,694.9" fill="none" stroke="#fff" stroke-width="1.1" stroke-linejoin="round"/>
<path d="M723.8,745.0 L740.5,724.1 L761.4,711.6" fill="none" stroke="#fff" stroke-width="1.1" stroke-linejoin="round"/>
<path d="M782.3,778.4 L807.3,765.9 L836.6,770.1" fill="none" stroke="#fff" stroke-width="1.1" stroke-linejoin="round"/>
<path d="M819.8,707.4 L832.4,732.5 L844.9,757.5" fill="none" stroke="#fff" stroke-width="1.1" stroke-linejoin="round"/>
<path d="M899.2,715.8 L907.6,690.7 L915.9,674.0" fill="none" stroke="#fff" stroke-width="1.1" stroke-linejoin="round"/>
<path d="M907.6,807.7 L924.3,832.7 L941.0,853.6" fill="none" stroke="#fff" stroke-width="1.1" stroke-linejoin="round"/>
<path d="M782.3,933.0 L757.2,962.2 L740.5,983.1" fill="none" stroke="#fff" stroke-width="1.1" stroke-linejoin="round"/>
<path d="M824.0,924.6 L840.7,958.0 L857.4,983.1" fill="none" stroke="#fff" stroke-width="1.1" stroke-linejoin="round"/>
<path d="M698.7,882.9 L719.6,891.2 L740.5,899.6" fill="none" stroke="#fff" stroke-width="1.1" stroke-linejoin="round"/>
<path d="M448.1,891.2 L431.4,924.6 L423.0,966.4 L418.8,998.1" fill="none" stroke="#fff" stroke-width="1.1" stroke-linejoin="round"/>
<path d="M356.2,862.0 L381.3,882.9 L406.3,907.9" fill="none" stroke="#fff" stroke-width="1.1" stroke-linejoin="round"/>
<path d="M297.7,857.8 L306.1,891.2 L297.7,924.6" fill="none" stroke="#fff" stroke-width="1.1" stroke-linejoin="round"/>
<path d="M656.9,966.4 L682.0,983.1 L698.7,998.1" fill="none" stroke="#fff" stroke-width="1.1" stroke-linejoin="round"/>
<path d="M761.4,974.8 L782.3,983.1 L807.3,998.1" fill="none" stroke="#fff" stroke-width="1.1" stroke-linejoin="round"/>
<path d="M932.6,874.5 L949.3,907.9 L966.0,924.6" fill="none" stroke="#fff" stroke-width="1.1" stroke-linejoin="round"/>
<path d="M1375.8,715.8 L1400.9,699.1 L1426.0,690.7 L1459.4,686.5" fill="none" stroke="#fff" stroke-width="1.1" stroke-linejoin="round"/>
<path d="M1400.9,749.3 L1434.3,757.6 L1459.4,770.2 L1484.5,782.7" fill="none" stroke="#fff" stroke-width="1.1" stroke-linejoin="round"/>
<path d="M1442.7,799.5 L1459.4,832.9 L1476.1,866.4 L1484.5,891.5 L1501.2,908.2" fill="none" stroke="#fff" stroke-width="1.1" stroke-linejoin="round"/>
<path d="M1501.2,732.6 L1526.3,757.6 L1534.7,799.5 L1526.3,841.3" fill="none" stroke="#fff" stroke-width="1.1" stroke-linejoin="round"/>
<path d="M1518.0,674.0 L1526.3,707.5 L1518.0,740.9" fill="none" stroke="#fff" stroke-width="1.1" stroke-linejoin="round"/>
<path d="M1459.4,728.4 L1484.5,715.8 L1518.0,711.6 L1551.4,699.1" fill="none" stroke="#fff" stroke-width="1.1" stroke-linejoin="round"/>
<path d="M1551.4,674.0 L1568.2,715.8 L1576.5,757.6 L1584.9,799.5 L1597.4,841.3 L1610.0,874.8" fill="none" stroke="#fff" stroke-width="1.1" stroke-linejoin="round"/>
<path d="M1576.5,832.9 L1601.6,841.3 L1626.7,849.7 L1651.8,853.8" fill="none" stroke="#fff" stroke-width="1.1" stroke-linejoin="round"/>
<path d="M1484.5,849.7 L1509.6,849.7 L1534.7,858.0 L1559.8,866.4 L1584.9,870.6" fill="none" stroke="#fff" stroke-width="1.1" stroke-linejoin="round"/>
<path d="M1459.4,883.1 L1480.3,908.2 L1492.9,941.7 L1501.2,975.1" fill="none" stroke="#fff" stroke-width="1.1" stroke-linejoin="round"/>
<path d="M1534.7,866.4 L1526.3,908.2 L1518.0,945.9 L1501.2,998.1" fill="none" stroke="#fff" stroke-width="1.1" stroke-linejoin="round"/>
<path d="M1543.1,874.8 L1564.0,908.2 L1576.5,945.9 L1584.9,998.1" fill="none" stroke="#fff" stroke-width="1.1" stroke-linejoin="round"/>
<path d="M1626.7,870.6 L1635.1,908.2 L1643.4,945.9 L1651.8,998.1" fill="none" stroke="#fff" stroke-width="1.1" stroke-linejoin="round"/>
<path d="M1689.4,908.2 L1710.4,941.7 L1727.1,966.8" fill="none" stroke="#fff" stroke-width="1.1" stroke-linejoin="round"/>
<path d="M1564.0,966.8 L1593.2,962.6 L1626.7,962.6 L1660.2,966.8" fill="none" stroke="#fff" stroke-width="1.1" stroke-linejoin="round"/>
<path d="M1689.4,862.2 L1731.3,870.6 L1768.9,874.8" fill="none" stroke="#fff" stroke-width="1.1" stroke-linejoin="round"/>
<path d="M1584.9,757.6 L1618.3,766.0 L1643.4,761.8" fill="none" stroke="#fff" stroke-width="1.1" stroke-linejoin="round"/>
<path d="M1543.1,778.6 L1564.0,770.2 L1593.2,782.7 L1626.7,791.1" fill="none" stroke="#fff" stroke-width="1.1" stroke-linejoin="round"/>
<path d="M1668.5,799.5 L1689.4,824.6 L1710.4,841.3 L1752.2,849.7" fill="none" stroke="#fff" stroke-width="1.1" stroke-linejoin="round"/>
<path d="M1342.3,908.2 L1367.4,924.9 L1392.5,941.7 L1417.6,945.9" fill="none" stroke="#fff" stroke-width="1.1" stroke-linejoin="round"/>
<path d="M1354.9,933.3 L1375.8,950.0 L1400.9,966.8 L1417.6,983.5" fill="none" stroke="#fff" stroke-width="1.1" stroke-linejoin="round"/>
<path d="M1317.2,832.9 L1333.9,853.8 L1350.7,874.8" fill="none" stroke="#fff" stroke-width="1.1" stroke-linejoin="round"/>
<path d="M1145.7,757.6 L1166.6,782.7 L1183.4,799.5" fill="none" stroke="#fff" stroke-width="1.1" stroke-linejoin="round"/>
<path d="M1208.5,883.1 L1225.2,908.2 L1233.6,941.7 L1241.9,966.8" fill="none" stroke="#fff" stroke-width="1.1" stroke-linejoin="round"/>
<path d="M1124.8,866.4 L1149.9,883.1 L1175.0,899.8" fill="none" stroke="#fff" stroke-width="1.1" stroke-linejoin="round"/>
<path d="M1250.3,874.8 L1275.4,899.8 L1283.8,933.3" fill="none" stroke="#fff" stroke-width="1.1" stroke-linejoin="round"/>
<path d="M932.6,882.9 L966.0,874.5 L999.5,870.3 L1032.9,866.1" fill="none" stroke="#f7c350" stroke-width="1.8" stroke-linejoin="round"/>
<path d="M982.8,799.3 L999.5,824.4 L1016.2,849.4 L1032.9,866.1" fill="none" stroke="#f7c350" stroke-width="1.8" stroke-linejoin="round"/>
<path d="M1016.2,799.3 L1032.9,824.4 L1049.6,853.6 L1066.3,882.9" fill="none" stroke="#f7c350" stroke-width="1.8" stroke-linejoin="round"/>
<path d="M1066.3,799.3 L1057.9,841.1 L1053.8,882.9 L1049.6,924.6" fill="none" stroke="#f7c350" stroke-width="1.8" stroke-linejoin="round"/>
<path d="M957.7,933.0 L991.1,924.6 L1024.5,920.4 L1066.3,916.3" fill="none" stroke="#f7c350" stroke-width="1.8" stroke-linejoin="round"/>
<path d="M1012.0,945.5 L1032.9,966.4 L1053.8,998.1" fill="none" stroke="#f7c350" stroke-width="1.8" stroke-linejoin="round"/>
<path d="M966.0,849.4 L991.1,857.8 L1016.2,891.2 L1032.9,907.9" fill="none" stroke="#f7c350" stroke-width="1.8" stroke-linejoin="round"/>
<path d="M1057.9,933.0 L1074.7,966.4 L1083.0,998.1" fill="none" stroke="#f7c350" stroke-width="1.8" stroke-linejoin="round"/>
<path d="M991.1,674.0 L982.8,707.4 L991.1,740.8 L1012.0,774.3" fill="none" stroke="#f7c350" stroke-width="1.8" stroke-linejoin="round"/>
<path d="M1083.0,699.1 L1108.1,715.8 L1133.2,732.6 L1158.3,715.8" fill="none" stroke="#f7c350" stroke-width="1.8" stroke-linejoin="round"/>
<path d="M1083.0,774.4 L1108.1,757.6 L1133.2,770.2 L1158.3,782.7" fill="none" stroke="#f7c350" stroke-width="1.8" stroke-linejoin="round"/>
<path d="M1083.0,958.4 L1099.7,941.7 L1116.5,924.9 L1141.6,916.6" fill="none" stroke="#f7c350" stroke-width="1.8" stroke-linejoin="round"/>
<path d="M1108.1,966.8 L1124.8,945.9 L1141.6,941.7 L1166.6,958.4" fill="none" stroke="#f7c350" stroke-width="1.8" stroke-linejoin="round"/>
<path d="M1124.8,841.3 L1149.9,832.9 L1166.6,849.7 L1191.7,866.4" fill="none" stroke="#f7c350" stroke-width="1.8" stroke-linejoin="round"/>
<path d="M1208.5,699.1 L1225.2,724.2 L1250.3,749.3 L1267.0,766.0" fill="none" stroke="#f7c350" stroke-width="1.8" stroke-linejoin="round"/>
<path d="M1191.7,711.6 L1208.5,728.4 L1233.6,720.0 L1258.7,715.8" fill="none" stroke="#f7c350" stroke-width="1.8" stroke-linejoin="round"/>
<path d="M1145.7,807.8 L1166.6,816.2 L1187.6,824.6" fill="none" stroke="#f7c350" stroke-width="1.8" stroke-linejoin="round"/>
<ellipse cx="1092" cy="850" rx="60" ry="56" fill="none" stroke="#e8a63c" stroke-width="3.2" opacity="0.5"/><ellipse cx="1092" cy="850" rx="60" ry="56" fill="none" stroke="#f7c350" stroke-width="2.3"/>
<ellipse cx="1092" cy="850" rx="30" ry="28" fill="none" stroke="#f7c350" stroke-width="1.6"/>
<path d="M410.5,680.3 L406.3,703.2 L393.8,757.5 L390.4,772.2 L381.3,791.0 L370.8,807.7 L362.5,813.9 L335.3,820.2 L320.7,832.7 L306.1,857.8 L293.5,891.2 L281.0,916.3 M281.0,703.2 L306.1,701.2 L318.6,707.4 L320.7,728.3 L331.1,745.0 L356.2,757.5 L377.1,765.9 L390.4,772.2 M390.4,772.2 L414.7,763.8 L431.4,761.7 L448.1,763.8 L464.8,776.3 L473.1,786.8 L485.7,778.4 L506.6,770.1 L531.6,765.9 L565.0,761.7 L590.1,770.1 L602.6,778.4 L611.0,795.1 L627.7,799.3 L648.6,807.7 L669.5,820.2 L694.5,836.9 L698.7,849.4 M698.7,851.5 L765.5,853.6 L782.3,870.3 L807.3,882.9 L844.9,891.2 L874.1,895.4 L899.2,891.2 L945.2,880.8 L991.1,870.3 L1032.9,862.0 L1083.0,857.8 M469.0,793.0 L456.4,811.8 L439.7,845.3 L427.2,882.9 L410.5,924.6 L402.1,958.0 L406.3,983.1 L418.8,998.1 M594.3,697.0 L588.0,711.6 L581.8,724.1 L556.7,728.3 L535.8,747.1 L530.0,768.0 M702.9,674.0 L694.5,699.1 L682.0,724.1 L673.6,749.2 L656.9,778.4 L636.1,799.3 L606.8,816.0 L581.8,832.7 L552.5,862.0 L527.4,891.2 L514.9,912.1 L502.4,941.3 L494.0,974.8 L487.8,998.1 M711.2,674.0 L698.7,699.1 L688.3,724.1 L679.9,749.2 L663.2,778.4 M611.0,816.0 L581.8,836.9 L556.7,864.1 L514.9,870.3 L481.5,887.0 L460.6,907.9 L464.8,941.3 L477.3,966.4 L460.6,998.1 M464.8,899.6 L448.1,907.9 L439.7,933.0 L431.4,966.4 L427.2,998.1 M669.5,849.4 L644.4,870.3 L623.5,891.2 L598.5,916.3 L581.8,945.5 L573.4,966.4 L569.2,998.1 M682.0,857.8 L694.5,882.9 L702.9,916.3 L702.9,941.3 L715.4,953.9 L744.7,962.2 L765.5,962.2 L782.3,949.7 L811.5,924.6 L844.9,907.9 L865.8,899.6 M556.7,966.4 L590.1,966.4 L615.2,968.5 L656.9,970.6 L677.8,962.2 L698.7,945.5 M673.6,719.9 L711.2,724.1 L748.8,736.7 L799.0,755.5 L828.2,747.1 L857.4,742.9 L882.5,753.4 L899.2,770.1 L920.1,784.7 L949.3,807.7 L991.1,832.7 L1032.9,849.4 L1083.0,853.6 M682.0,757.5 L707.1,770.1 L736.3,786.8 L761.4,807.7 L803.1,816.0 L857.4,820.2 L878.3,824.4 L907.6,841.1 L949.3,870.3 L991.1,882.9 L1083.0,874.5 M899.2,757.5 L882.5,778.4 L878.3,820.2 L874.1,862.0 L870.0,903.7 L865.8,945.5 L861.6,998.1 M757.2,811.8 L765.5,849.4 L782.3,870.3 L799.0,882.9 L807.3,899.6 L815.7,941.3 L819.8,966.4 L815.7,998.1 M794.8,674.0 L773.9,699.1 L753.0,728.3 L740.5,765.9 L728.0,782.6 M677.8,715.8 L682.0,757.5 L694.5,774.3 L702.9,782.6 M991.1,674.0 L1003.6,707.4 L1016.2,736.7 L1041.2,765.9 L1062.1,778.4 L1083.0,791.0 M899.2,770.1 L915.9,803.5 L936.8,832.7 L949.3,853.6 L957.7,878.7 L966.0,907.9 L970.2,945.5 L966.0,998.1 M1045.4,907.9 L1032.9,933.0 L1016.2,958.0 L991.1,983.1 L974.4,998.1 M886.7,899.6 L915.9,924.6 L932.6,953.9 L957.7,983.1 L974.4,998.1 M949.3,674.0 L966.0,707.4 L982.8,728.3 L991.1,757.5 M1032.9,674.0 L1032.9,707.4 L1045.4,736.7 L1062.1,757.5 M1066.3,674.0 L1062.1,715.8 L1066.3,757.5 L1083.0,782.6 M1083.0,858.0 L1145.7,858.0 L1187.6,849.7 L1229.4,841.3 L1262.8,832.9 L1292.1,807.8 L1308.8,799.5 L1333.9,807.8 L1367.4,820.4 L1392.5,826.7 L1417.6,814.1 L1446.9,799.5 L1467.8,786.9 L1484.5,766.0 L1497.1,736.7 L1505.4,699.1 L1509.6,674.0 M1409.2,818.3 L1438.5,832.9 L1446.0,849.7 L1446.0,908.2 L1446.9,966.8 L1449.0,998.1 M1083.0,824.6 L1108.1,807.8 L1133.2,778.6 L1166.6,749.3 L1195.9,728.4 L1221.0,703.3 L1241.9,682.4 L1250.3,674.0 M1099.7,849.7 L1124.8,816.2 L1145.7,791.1 L1166.6,774.4 L1191.7,757.6 L1208.5,736.7 L1229.4,715.8 L1258.7,699.1 L1283.8,674.0 M1258.7,841.3 L1250.3,807.8 L1241.9,774.4 L1233.6,749.3 L1221.0,724.2 M1166.6,908.2 L1154.1,945.9 L1141.6,975.1 L1133.2,998.1 M1619.0,674.0 L1625.3,702.3 L1647.3,727.4 L1666.2,755.7 L1664.6,799.6 L1675.6,824.8 L1678.7,843.6 L1691.3,862.4 L1710.1,875.0 L1729.0,900.1 L1754.1,922.1 L1769.8,928.4 L1782.4,922.1 L1794.9,906.4 M1637.9,752.5 L1628.5,793.3 L1623.8,831.0 L1622.2,878.1 L1619.0,925.3 L1615.9,998.0 M1672.4,856.2 L1672.4,912.7 L1678.7,941.0 L1688.1,963.0 L1703.8,998.0 M1653.6,998.0 L1688.1,962.9 L1710.1,947.2 L1751.0,931.5 L1769.8,928.4 M1484.5,774.4 L1497.1,740.9 L1501.2,715.8 L1505.4,674.0 M1835.8,674.0 L1856.7,699.1 L1877.6,724.2 L1886.0,728.4 M1886.0,799.5 L1873.5,832.9 L1869.3,866.4 M1083.0,736.7 L1116.5,740.9 L1149.9,757.6 L1183.4,782.7 L1208.5,799.5 M1187.6,674.0 L1183.4,707.5 L1179.2,740.9 L1187.6,774.4 L1183.4,807.8 L1187.6,841.3 M1124.8,674.0 L1133.2,707.5 L1129.0,740.9 L1137.4,774.4 M1083.0,899.8 L1108.1,895.7 L1137.4,887.3 L1166.6,874.8 M1208.5,812.0 L1229.4,832.9 L1241.9,858.0 L1250.3,891.5 L1258.7,924.9 M1149.9,883.1 L1175.0,895.7 L1208.5,899.8 L1250.3,904.0 M1241.9,908.2 L1233.6,941.7 L1229.4,975.1 L1225.2,998.1" fill="none" stroke="#f1ae35" stroke-width="2.8" stroke-linejoin="round"/>
<path d="M410.5,680.3 L406.3,703.2 L393.8,757.5 L390.4,772.2 L381.3,791.0 L370.8,807.7 L362.5,813.9 L335.3,820.2 L320.7,832.7 L306.1,857.8 L293.5,891.2 L281.0,916.3 M281.0,703.2 L306.1,701.2 L318.6,707.4 L320.7,728.3 L331.1,745.0 L356.2,757.5 L377.1,765.9 L390.4,772.2 M390.4,772.2 L414.7,763.8 L431.4,761.7 L448.1,763.8 L464.8,776.3 L473.1,786.8 L485.7,778.4 L506.6,770.1 L531.6,765.9 L565.0,761.7 L590.1,770.1 L602.6,778.4 L611.0,795.1 L627.7,799.3 L648.6,807.7 L669.5,820.2 L694.5,836.9 L698.7,849.4 M698.7,851.5 L765.5,853.6 L782.3,870.3 L807.3,882.9 L844.9,891.2 L874.1,895.4 L899.2,891.2 L945.2,880.8 L991.1,870.3 L1032.9,862.0 L1083.0,857.8 M469.0,793.0 L456.4,811.8 L439.7,845.3 L427.2,882.9 L410.5,924.6 L402.1,958.0 L406.3,983.1 L418.8,998.1 M594.3,697.0 L588.0,711.6 L581.8,724.1 L556.7,728.3 L535.8,747.1 L530.0,768.0 M702.9,674.0 L694.5,699.1 L682.0,724.1 L673.6,749.2 L656.9,778.4 L636.1,799.3 L606.8,816.0 L581.8,832.7 L552.5,862.0 L527.4,891.2 L514.9,912.1 L502.4,941.3 L494.0,974.8 L487.8,998.1 M711.2,674.0 L698.7,699.1 L688.3,724.1 L679.9,749.2 L663.2,778.4 M611.0,816.0 L581.8,836.9 L556.7,864.1 L514.9,870.3 L481.5,887.0 L460.6,907.9 L464.8,941.3 L477.3,966.4 L460.6,998.1 M464.8,899.6 L448.1,907.9 L439.7,933.0 L431.4,966.4 L427.2,998.1 M669.5,849.4 L644.4,870.3 L623.5,891.2 L598.5,916.3 L581.8,945.5 L573.4,966.4 L569.2,998.1 M682.0,857.8 L694.5,882.9 L702.9,916.3 L702.9,941.3 L715.4,953.9 L744.7,962.2 L765.5,962.2 L782.3,949.7 L811.5,924.6 L844.9,907.9 L865.8,899.6 M556.7,966.4 L590.1,966.4 L615.2,968.5 L656.9,970.6 L677.8,962.2 L698.7,945.5 M673.6,719.9 L711.2,724.1 L748.8,736.7 L799.0,755.5 L828.2,747.1 L857.4,742.9 L882.5,753.4 L899.2,770.1 L920.1,784.7 L949.3,807.7 L991.1,832.7 L1032.9,849.4 L1083.0,853.6 M682.0,757.5 L707.1,770.1 L736.3,786.8 L761.4,807.7 L803.1,816.0 L857.4,820.2 L878.3,824.4 L907.6,841.1 L949.3,870.3 L991.1,882.9 L1083.0,874.5 M899.2,757.5 L882.5,778.4 L878.3,820.2 L874.1,862.0 L870.0,903.7 L865.8,945.5 L861.6,998.1 M757.2,811.8 L765.5,849.4 L782.3,870.3 L799.0,882.9 L807.3,899.6 L815.7,941.3 L819.8,966.4 L815.7,998.1 M794.8,674.0 L773.9,699.1 L753.0,728.3 L740.5,765.9 L728.0,782.6 M677.8,715.8 L682.0,757.5 L694.5,774.3 L702.9,782.6 M991.1,674.0 L1003.6,707.4 L1016.2,736.7 L1041.2,765.9 L1062.1,778.4 L1083.0,791.0 M899.2,770.1 L915.9,803.5 L936.8,832.7 L949.3,853.6 L957.7,878.7 L966.0,907.9 L970.2,945.5 L966.0,998.1 M1045.4,907.9 L1032.9,933.0 L1016.2,958.0 L991.1,983.1 L974.4,998.1 M886.7,899.6 L915.9,924.6 L932.6,953.9 L957.7,983.1 L974.4,998.1 M949.3,674.0 L966.0,707.4 L982.8,728.3 L991.1,757.5 M1032.9,674.0 L1032.9,707.4 L1045.4,736.7 L1062.1,757.5 M1066.3,674.0 L1062.1,715.8 L1066.3,757.5 L1083.0,782.6 M1083.0,858.0 L1145.7,858.0 L1187.6,849.7 L1229.4,841.3 L1262.8,832.9 L1292.1,807.8 L1308.8,799.5 L1333.9,807.8 L1367.4,820.4 L1392.5,826.7 L1417.6,814.1 L1446.9,799.5 L1467.8,786.9 L1484.5,766.0 L1497.1,736.7 L1505.4,699.1 L1509.6,674.0 M1409.2,818.3 L1438.5,832.9 L1446.0,849.7 L1446.0,908.2 L1446.9,966.8 L1449.0,998.1 M1083.0,824.6 L1108.1,807.8 L1133.2,778.6 L1166.6,749.3 L1195.9,728.4 L1221.0,703.3 L1241.9,682.4 L1250.3,674.0 M1099.7,849.7 L1124.8,816.2 L1145.7,791.1 L1166.6,774.4 L1191.7,757.6 L1208.5,736.7 L1229.4,715.8 L1258.7,699.1 L1283.8,674.0 M1258.7,841.3 L1250.3,807.8 L1241.9,774.4 L1233.6,749.3 L1221.0,724.2 M1166.6,908.2 L1154.1,945.9 L1141.6,975.1 L1133.2,998.1 M1619.0,674.0 L1625.3,702.3 L1647.3,727.4 L1666.2,755.7 L1664.6,799.6 L1675.6,824.8 L1678.7,843.6 L1691.3,862.4 L1710.1,875.0 L1729.0,900.1 L1754.1,922.1 L1769.8,928.4 L1782.4,922.1 L1794.9,906.4 M1637.9,752.5 L1628.5,793.3 L1623.8,831.0 L1622.2,878.1 L1619.0,925.3 L1615.9,998.0 M1672.4,856.2 L1672.4,912.7 L1678.7,941.0 L1688.1,963.0 L1703.8,998.0 M1653.6,998.0 L1688.1,962.9 L1710.1,947.2 L1751.0,931.5 L1769.8,928.4 M1484.5,774.4 L1497.1,740.9 L1501.2,715.8 L1505.4,674.0 M1835.8,674.0 L1856.7,699.1 L1877.6,724.2 L1886.0,728.4 M1886.0,799.5 L1873.5,832.9 L1869.3,866.4 M1083.0,736.7 L1116.5,740.9 L1149.9,757.6 L1183.4,782.7 L1208.5,799.5 M1187.6,674.0 L1183.4,707.5 L1179.2,740.9 L1187.6,774.4 L1183.4,807.8 L1187.6,841.3 M1124.8,674.0 L1133.2,707.5 L1129.0,740.9 L1137.4,774.4 M1083.0,899.8 L1108.1,895.7 L1137.4,887.3 L1166.6,874.8 M1208.5,812.0 L1229.4,832.9 L1241.9,858.0 L1250.3,891.5 L1258.7,924.9 M1149.9,883.1 L1175.0,895.7 L1208.5,899.8 L1250.3,904.0 M1241.9,908.2 L1233.6,941.7 L1229.4,975.1 L1225.2,998.1" fill="none" stroke="#fdd98a" stroke-width="1.1" stroke-linejoin="round"/>
<path d="M322.8,998.1 L343.7,966.4 L352.0,941.3 L368.7,907.9 L377.1,882.9 L406.3,899.6 L423.0,916.3" fill="none" stroke="#66726a" stroke-width="0.9" stroke-dasharray="1.8 1.8"/>
<path d="M423.0,916.3 L443.9,882.9 L464.8,849.4 L477.3,841.1 L498.2,824.4 L514.9,816.0 L531.6,799.3 L540.0,782.6 L565.0,757.5 L590.1,732.5 L585.9,715.8 L598.5,690.7 L598.5,674.0" fill="none" stroke="#66726a" stroke-width="0.9" stroke-dasharray="1.8 1.8"/>
<path d="M715.4,674.0 L740.5,699.1 L765.5,715.8 L799.0,749.2 L811.5,732.5 L824.0,707.4 L828.2,674.0" fill="none" stroke="#66726a" stroke-width="0.9" stroke-dasharray="1.8 1.8"/>
<path d="M1555.6,674.0 L1559.8,757.6 L1564.0,841.3 L1572.3,924.9 L1576.5,998.1" fill="none" stroke="#66726a" stroke-width="0.9" stroke-dasharray="1.8 1.8"/>
<path d="M1697.8,674.0 L1735.4,707.5 L1760.5,757.6 L1785.6,799.5 L1802.4,841.3 L1819.1,883.1 L1827.5,908.2" fill="none" stroke="#66726a" stroke-width="0.9" stroke-dasharray="1.8 1.8"/>
<path d="M1016.2,811.8 L1041.2,832.7 L1053.8,853.6 L1062.1,870.3" fill="none" stroke="#66726a" stroke-width="0.9" stroke-dasharray="1.8 1.8"/>
<path d="M1099.7,849.7 L1116.5,832.9 L1133.2,816.2" fill="none" stroke="#66726a" stroke-width="0.9" stroke-dasharray="1.8 1.8"/>
<text x="281.0" y="684.0" font-size="12" fill="#2e3033" stroke="#fff" stroke-width="2.8" paint-order="stroke" stroke-linejoin="round">Storm</text><text x="281.0" y="684.0" font-size="12" fill="#2e3033" stroke="#2e3033" stroke-width="0.25">Storm</text>
<text x="359.0" y="785.0" font-size="12" fill="#2e3033" stroke="#fff" stroke-width="2.8" paint-order="stroke" stroke-linejoin="round">Moorefield</text><text x="359.0" y="785.0" font-size="12" fill="#2e3033" stroke="#2e3033" stroke-width="0.25">Moorefield</text>
<text x="303.0" y="817.0" font-size="12" fill="#2e3033" stroke="#fff" stroke-width="2.8" paint-order="stroke" stroke-linejoin="round">Petersburg</text><text x="303.0" y="817.0" font-size="12" fill="#2e3033" stroke="#2e3033" stroke-width="0.25">Petersburg</text>
<text x="455.0" y="794.0" font-size="12" fill="#2e3033" stroke="#fff" stroke-width="2.8" paint-order="stroke" stroke-linejoin="round">Baker</text><text x="455.0" y="794.0" font-size="12" fill="#2e3033" stroke="#2e3033" stroke-width="0.25">Baker</text>
<text x="527.0" y="868.0" font-size="12" fill="#2e3033" stroke="#fff" stroke-width="2.8" paint-order="stroke" stroke-linejoin="round">Woodstock</text><text x="527.0" y="868.0" font-size="12" fill="#2e3033" stroke="#2e3033" stroke-width="0.25">Woodstock</text>
<text x="476.0" y="932.0" font-size="12" fill="#2e3033" stroke="#fff" stroke-width="2.8" paint-order="stroke" stroke-linejoin="round">Mt Jackson</text><text x="476.0" y="932.0" font-size="12" fill="#2e3033" stroke="#2e3033" stroke-width="0.25">Mt Jackson</text>
<text x="465.0" y="978.0" font-size="12" fill="#2e3033" stroke="#fff" stroke-width="2.8" paint-order="stroke" stroke-linejoin="round">New Market</text><text x="465.0" y="978.0" font-size="12" fill="#2e3033" stroke="#2e3033" stroke-width="0.25">New Market</text>
<text x="559.0" y="970.0" font-size="12" fill="#2e3033" stroke="#fff" stroke-width="2.8" paint-order="stroke" stroke-linejoin="round">Luray</text><text x="559.0" y="970.0" font-size="12" fill="#2e3033" stroke="#2e3033" stroke-width="0.25">Luray</text>
<text x="585.0" y="819.0" font-size="12" fill="#2e3033" stroke="#fff" stroke-width="2.8" paint-order="stroke" stroke-linejoin="round">Strasburg</text><text x="585.0" y="819.0" font-size="12" fill="#2e3033" stroke="#2e3033" stroke-width="0.25">Strasburg</text>
<text x="608.0" y="801.0" font-size="12" fill="#2e3033" stroke="#fff" stroke-width="2.8" paint-order="stroke" stroke-linejoin="round">Middletown</text><text x="608.0" y="801.0" font-size="12" fill="#2e3033" stroke="#2e3033" stroke-width="0.25">Middletown</text>
<text x="625.0" y="775.0" font-size="12" fill="#2e3033" stroke="#fff" stroke-width="2.8" paint-order="stroke" stroke-linejoin="round">Stephens City</text><text x="625.0" y="775.0" font-size="12" fill="#2e3033" stroke="#2e3033" stroke-width="0.25">Stephens City</text>
<text x="640.0" y="852.0" font-size="12" fill="#2e3033" stroke="#fff" stroke-width="2.8" paint-order="stroke" stroke-linejoin="round">Front Royal</text><text x="640.0" y="852.0" font-size="12" fill="#2e3033" stroke="#2e3033" stroke-width="0.25">Front Royal</text>
<text x="608.0" y="690.0" font-size="12" fill="#2e3033" stroke="#fff" stroke-width="2.8" paint-order="stroke" stroke-linejoin="round">Gore</text><text x="608.0" y="690.0" font-size="12" fill="#2e3033" stroke="#2e3033" stroke-width="0.25">Gore</text>
<text x="661.0" y="727.0" font-size="12" fill="#2e3033" stroke="#fff" stroke-width="2.8" paint-order="stroke" stroke-linejoin="round">Winchester</text><text x="661.0" y="727.0" font-size="12" fill="#2e3033" stroke="#2e3033" stroke-width="0.25">Winchester</text>
<text x="651.0" y="948.0" font-size="12" fill="#2e3033" stroke="#fff" stroke-width="2.8" paint-order="stroke" stroke-linejoin="round">Washington</text><text x="651.0" y="948.0" font-size="12" fill="#2e3033" stroke="#2e3033" stroke-width="0.25">Washington</text>
<text x="631.0" y="974.0" font-size="12" fill="#2e3033" stroke="#fff" stroke-width="2.8" paint-order="stroke" stroke-linejoin="round">Sperryville</text><text x="631.0" y="974.0" font-size="12" fill="#2e3033" stroke="#2e3033" stroke-width="0.25">Sperryville</text>
<text x="723.0" y="743.0" font-size="12" fill="#2e3033" stroke="#fff" stroke-width="2.8" paint-order="stroke" stroke-linejoin="round">Berryville</text><text x="723.0" y="743.0" font-size="12" fill="#2e3033" stroke="#2e3033" stroke-width="0.25">Berryville</text>
<text x="876.0" y="760.0" font-size="12" fill="#2e3033" stroke="#fff" stroke-width="2.8" paint-order="stroke" stroke-linejoin="round">Leesburg</text><text x="876.0" y="760.0" font-size="12" fill="#2e3033" stroke="#2e3033" stroke-width="0.25">Leesburg</text>
<text x="906.0" y="793.0" font-size="12" fill="#2e3033" stroke="#fff" stroke-width="2.8" paint-order="stroke" stroke-linejoin="round">Ashburn</text><text x="906.0" y="793.0" font-size="12" fill="#2e3033" stroke="#2e3033" stroke-width="0.25">Ashburn</text>
<text x="929.0" y="811.0" font-size="12" fill="#2e3033" stroke="#fff" stroke-width="2.8" paint-order="stroke" stroke-linejoin="round">Sterling</text><text x="929.0" y="811.0" font-size="12" fill="#2e3033" stroke="#2e3033" stroke-width="0.25">Sterling</text>
<text x="926.0" y="863.0" font-size="12" fill="#2e3033" stroke="#fff" stroke-width="2.8" paint-order="stroke" stroke-linejoin="round">Chantilly</text><text x="926.0" y="863.0" font-size="12" fill="#2e3033" stroke="#2e3033" stroke-width="0.25">Chantilly</text>
<text x="975.0" y="886.0" font-size="12" fill="#2e3033" stroke="#fff" stroke-width="2.8" paint-order="stroke" stroke-linejoin="round">Fairfax</text><text x="975.0" y="886.0" font-size="12" fill="#2e3033" stroke="#2e3033" stroke-width="0.25">Fairfax</text>
<text x="853.0" y="910.0" font-size="12" fill="#2e3033" stroke="#fff" stroke-width="2.8" paint-order="stroke" stroke-linejoin="round">Gainesville</text><text x="853.0" y="910.0" font-size="12" fill="#2e3033" stroke="#2e3033" stroke-width="0.25">Gainesville</text>
<text x="904.0" y="930.0" font-size="12" fill="#2e3033" stroke="#fff" stroke-width="2.8" paint-order="stroke" stroke-linejoin="round">Manassas</text><text x="904.0" y="930.0" font-size="12" fill="#2e3033" stroke="#2e3033" stroke-width="0.25">Manassas</text>
<text x="789.0" y="948.0" font-size="12" fill="#2e3033" stroke="#fff" stroke-width="2.8" paint-order="stroke" stroke-linejoin="round">Warrenton</text><text x="789.0" y="948.0" font-size="12" fill="#2e3033" stroke="#2e3033" stroke-width="0.25">Warrenton</text>
<text x="982.0" y="974.0" font-size="12" fill="#2e3033" stroke="#fff" stroke-width="2.8" paint-order="stroke" stroke-linejoin="round">Woodbridge</text><text x="982.0" y="974.0" font-size="12" fill="#2e3033" stroke="#2e3033" stroke-width="0.25">Woodbridge</text>
<text x="997.0" y="746.0" font-size="12" fill="#2e3033" stroke="#fff" stroke-width="2.8" paint-order="stroke" stroke-linejoin="round">Gaithersburg</text><text x="997.0" y="746.0" font-size="12" fill="#2e3033" stroke="#2e3033" stroke-width="0.25">Gaithersburg</text>
<text x="1026.0" y="775.0" font-size="12" fill="#2e3033" stroke="#fff" stroke-width="2.8" paint-order="stroke" stroke-linejoin="round">Rockville</text><text x="1026.0" y="775.0" font-size="12" fill="#2e3033" stroke="#2e3033" stroke-width="0.25">Rockville</text>
<text x="1130.0" y="718.0" font-size="12" fill="#2e3033" stroke="#fff" stroke-width="2.8" paint-order="stroke" stroke-linejoin="round">Columbia</text><text x="1130.0" y="718.0" font-size="12" fill="#2e3033" stroke="#2e3033" stroke-width="0.25">Columbia</text>
<text x="1211.0" y="738.0" font-size="12" fill="#2e3033" stroke="#fff" stroke-width="2.8" paint-order="stroke" stroke-linejoin="round">Glen Burnie</text><text x="1211.0" y="738.0" font-size="12" fill="#2e3033" stroke="#2e3033" stroke-width="0.25">Glen Burnie</text>
<text x="1063.0" y="818.0" font-size="12" fill="#2e3033" stroke="#fff" stroke-width="2.8" paint-order="stroke" stroke-linejoin="round">Silver Spring</text><text x="1063.0" y="818.0" font-size="12" fill="#2e3033" stroke="#2e3033" stroke-width="0.25">Silver Spring</text>
<text x="1181.0" y="894.0" font-size="12" fill="#2e3033" stroke="#fff" stroke-width="2.8" paint-order="stroke" stroke-linejoin="round">Upper</text><text x="1181.0" y="894.0" font-size="12" fill="#2e3033" stroke="#2e3033" stroke-width="0.25">Upper</text>
<text x="1173.0" y="906.0" font-size="12" fill="#2e3033" stroke="#fff" stroke-width="2.8" paint-order="stroke" stroke-linejoin="round">Marlboro</text><text x="1173.0" y="906.0" font-size="12" fill="#2e3033" stroke="#2e3033" stroke-width="0.25">Marlboro</text>
<text x="1117.0" y="989.0" font-size="12" fill="#2e3033" stroke="#fff" stroke-width="2.8" paint-order="stroke" stroke-linejoin="round">Waldorf</text><text x="1117.0" y="989.0" font-size="12" fill="#2e3033" stroke="#2e3033" stroke-width="0.25">Waldorf</text>
<text x="1212.0" y="993.0" font-size="12" fill="#2e3033" stroke="#fff" stroke-width="2.8" paint-order="stroke" stroke-linejoin="round">Huntingtown</text><text x="1212.0" y="993.0" font-size="12" fill="#2e3033" stroke="#2e3033" stroke-width="0.25">Huntingtown</text>
<text x="1409.0" y="711.0" font-size="12" fill="#2e3033" stroke="#fff" stroke-width="2.8" paint-order="stroke" stroke-linejoin="round">Chestertown</text><text x="1409.0" y="711.0" font-size="12" fill="#2e3033" stroke="#2e3033" stroke-width="0.25">Chestertown</text>
<text x="1417.0" y="794.0" font-size="12" fill="#2e3033" stroke="#fff" stroke-width="2.8" paint-order="stroke" stroke-linejoin="round">Centreville</text><text x="1417.0" y="794.0" font-size="12" fill="#2e3033" stroke="#2e3033" stroke-width="0.25">Centreville</text>
<text x="1264.0" y="823.0" font-size="12" fill="#2e3033" stroke="#fff" stroke-width="2.8" paint-order="stroke" stroke-linejoin="round">Annapolis</text><text x="1264.0" y="823.0" font-size="12" fill="#2e3033" stroke="#2e3033" stroke-width="0.25">Annapolis</text>
<text x="1323.0" y="823.0" font-size="12" fill="#2e3033" stroke="#fff" stroke-width="2.8" paint-order="stroke" stroke-linejoin="round">Stevensville</text><text x="1323.0" y="823.0" font-size="12" fill="#2e3033" stroke="#2e3033" stroke-width="0.25">Stevensville</text>
<text x="1320.0" y="843.0" font-size="12" fill="#2e3033" stroke="#fff" stroke-width="2.8" paint-order="stroke" stroke-linejoin="round">Kent Island</text><text x="1320.0" y="843.0" font-size="12" fill="#2e3033" stroke="#2e3033" stroke-width="0.25">Kent Island</text>
<text x="1357.0" y="914.0" font-size="12" fill="#2e3033" stroke="#fff" stroke-width="2.8" paint-order="stroke" stroke-linejoin="round">St Michaels</text><text x="1357.0" y="914.0" font-size="12" fill="#2e3033" stroke="#2e3033" stroke-width="0.25">St Michaels</text>
<text x="1423.0" y="920.0" font-size="12" fill="#2e3033" stroke="#fff" stroke-width="2.8" paint-order="stroke" stroke-linejoin="round">Easton</text><text x="1423.0" y="920.0" font-size="12" fill="#2e3033" stroke="#2e3033" stroke-width="0.25">Easton</text>
<text x="1242.0" y="951.0" font-size="12" fill="#2e3033" stroke="#fff" stroke-width="2.8" paint-order="stroke" stroke-linejoin="round">Chesapeake</text><text x="1242.0" y="951.0" font-size="12" fill="#2e3033" stroke="#2e3033" stroke-width="0.25">Chesapeake</text>
<text x="1256.0" y="963.0" font-size="12" fill="#2e3033" stroke="#fff" stroke-width="2.8" paint-order="stroke" stroke-linejoin="round">Beach</text><text x="1256.0" y="963.0" font-size="12" fill="#2e3033" stroke="#2e3033" stroke-width="0.25">Beach</text>
<text x="1627.0" y="740.0" font-size="12" fill="#2e3033" stroke="#fff" stroke-width="2.8" paint-order="stroke" stroke-linejoin="round">Dover</text><text x="1627.0" y="740.0" font-size="12" fill="#2e3033" stroke="#2e3033" stroke-width="0.25">Dover</text>
<text x="1614.0" y="761.0" font-size="12" fill="#2e3033" stroke="#fff" stroke-width="2.8" paint-order="stroke" stroke-linejoin="round">Camden</text><text x="1614.0" y="761.0" font-size="12" fill="#2e3033" stroke="#2e3033" stroke-width="0.25">Camden</text>
<text x="1595.0" y="850.0" font-size="12" fill="#2e3033" stroke="#fff" stroke-width="2.8" paint-order="stroke" stroke-linejoin="round">Harrington</text><text x="1595.0" y="850.0" font-size="12" fill="#2e3033" stroke="#2e3033" stroke-width="0.25">Harrington</text>
<text x="1658.0" y="855.0" font-size="12" fill="#2e3033" stroke="#fff" stroke-width="2.8" paint-order="stroke" stroke-linejoin="round">Milford</text><text x="1658.0" y="855.0" font-size="12" fill="#2e3033" stroke="#2e3033" stroke-width="0.25">Milford</text>
<text x="1514.0" y="868.0" font-size="12" fill="#2e3033" stroke="#fff" stroke-width="2.8" paint-order="stroke" stroke-linejoin="round">Denton</text><text x="1514.0" y="868.0" font-size="12" fill="#2e3033" stroke="#2e3033" stroke-width="0.25">Denton</text>
<text x="1586.0" y="934.0" font-size="12" fill="#2e3033" stroke="#fff" stroke-width="2.8" paint-order="stroke" stroke-linejoin="round">Bridgeville</text><text x="1586.0" y="934.0" font-size="12" fill="#2e3033" stroke="#2e3033" stroke-width="0.25">Bridgeville</text>
<text x="1517.0" y="957.0" font-size="12" fill="#2e3033" stroke="#fff" stroke-width="2.8" paint-order="stroke" stroke-linejoin="round">Federalsburg</text><text x="1517.0" y="957.0" font-size="12" fill="#2e3033" stroke="#2e3033" stroke-width="0.25">Federalsburg</text>
<text x="1590.0" y="982.0" font-size="12" fill="#2e3033" stroke="#fff" stroke-width="2.8" paint-order="stroke" stroke-linejoin="round">Seaford</text><text x="1590.0" y="982.0" font-size="12" fill="#2e3033" stroke="#2e3033" stroke-width="0.25">Seaford</text>
<text x="1661.0" y="959.0" font-size="12" fill="#2e3033" stroke="#fff" stroke-width="2.8" paint-order="stroke" stroke-linejoin="round">Georgetown</text><text x="1661.0" y="959.0" font-size="12" fill="#2e3033" stroke="#2e3033" stroke-width="0.25">Georgetown</text>
<text x="1765.0" y="919.0" font-size="12" fill="#2e3033" stroke="#fff" stroke-width="2.8" paint-order="stroke" stroke-linejoin="round">Lewes</text><text x="1765.0" y="919.0" font-size="12" fill="#2e3033" stroke="#2e3033" stroke-width="0.25">Lewes</text>
<text x="1780.0" y="938.0" font-size="12" fill="#2e3033" stroke="#fff" stroke-width="2.8" paint-order="stroke" stroke-linejoin="round">Rehoboth</text><text x="1780.0" y="938.0" font-size="12" fill="#2e3033" stroke="#2e3033" stroke-width="0.25">Rehoboth</text>
<text x="1790.0" y="950.0" font-size="12" fill="#2e3033" stroke="#fff" stroke-width="2.8" paint-order="stroke" stroke-linejoin="round">Beach</text><text x="1790.0" y="950.0" font-size="12" fill="#2e3033" stroke="#2e3033" stroke-width="0.25">Beach</text>
<text x="1871.0" y="752.0" font-size="12" fill="#2e3033" stroke="#fff" stroke-width="2.8" paint-order="stroke" stroke-linejoin="round">Mi</text><text x="1871.0" y="752.0" font-size="12" fill="#2e3033" stroke="#2e3033" stroke-width="0.25">Mi</text>
<text x="1867.0" y="764.0" font-size="12" fill="#2e3033" stroke="#fff" stroke-width="2.8" paint-order="stroke" stroke-linejoin="round">Tow</text><text x="1867.0" y="764.0" font-size="12" fill="#2e3033" stroke="#2e3033" stroke-width="0.25">Tow</text>
<text x="1872.0" y="818.0" font-size="12" fill="#2e3033" stroke="#fff" stroke-width="2.8" paint-order="stroke" stroke-linejoin="round">Wi</text><text x="1872.0" y="818.0" font-size="12" fill="#2e3033" stroke="#2e3033" stroke-width="0.25">Wi</text>
<text x="1872.0" y="844.0" font-size="12" fill="#2e3033" stroke="#fff" stroke-width="2.8" paint-order="stroke" stroke-linejoin="round">Ma</text><text x="1872.0" y="844.0" font-size="12" fill="#2e3033" stroke="#2e3033" stroke-width="0.25">Ma</text>
<text x="757.0" y="678.0" font-size="12" fill="#2e3033" stroke="#fff" stroke-width="2.8" paint-order="stroke" stroke-linejoin="round">Charles Town</text><text x="757.0" y="678.0" font-size="12" fill="#2e3033" stroke="#2e3033" stroke-width="0.25">Charles Town</text>
<text x="487.0" y="676.0" font-size="12" fill="#2e3033" stroke="#fff" stroke-width="2.8" paint-order="stroke" stroke-linejoin="round">Augusta</text><text x="487.0" y="676.0" font-size="12" fill="#2e3033" stroke="#2e3033" stroke-width="0.25">Augusta</text>
<text x="1038" y="859" font-size="18.5" font-weight="bold" fill="#202124" stroke="#fff" stroke-width="2.2" paint-order="stroke">Washington</text>
<text x="1203" y="682" font-size="18.5" font-weight="bold" fill="#202124" stroke="#fff" stroke-width="2.2" paint-order="stroke">Baltimore</text>
<text x="0" y="0" font-size="11" fill="#3a78d8" transform="translate(1746,737) rotate(65)">Delaware Bay</text>
<rect x="517.8" y="700.3" width="20" height="13" rx="6.5" fill="#fff" stroke="#4a4d52" stroke-width="1.2"/><text x="527.8" y="710.3" font-size="10.5" text-anchor="middle" fill="#222">29</text>
<rect x="847.3" y="735.5" width="14" height="13" rx="6.5" fill="#fff" stroke="#4a4d52" stroke-width="1.2"/><text x="854.3" y="745.5" font-size="10.5" text-anchor="middle" fill="#222">7</text>
<rect x="839.5" y="981.7" width="20" height="13" rx="6.5" fill="#fff" stroke="#4a4d52" stroke-width="1.2"/><text x="849.5" y="991.7" font-size="10.5" text-anchor="middle" fill="#222">28</text>
<rect x="954.2" y="983.3" width="26" height="13" rx="6.5" fill="#fff" stroke="#4a4d52" stroke-width="1.2"/><text x="967.2" y="993.3" font-size="10.5" text-anchor="middle" fill="#222">234</text>
<rect x="983.6" y="908.1" width="26" height="13" rx="6.5" fill="#fff" stroke="#4a4d52" stroke-width="1.2"/><text x="996.6" y="918.1" font-size="10.5" text-anchor="middle" fill="#222">286</text>
<rect x="1198.7" y="710.8" width="26" height="13" rx="6.5" fill="#fff" stroke="#4a4d52" stroke-width="1.2"/><text x="1211.7" y="720.8" font-size="10.5" text-anchor="middle" fill="#222">295</text>
<rect x="1210.2" y="806.8" width="26" height="13" rx="6.5" fill="#fff" stroke="#4a4d52" stroke-width="1.2"/><text x="1223.2" y="816.8" font-size="10.5" text-anchor="middle" fill="#222">450</text>
<rect x="1240.8" y="861.8" width="14" height="13" rx="6.5" fill="#fff" stroke="#4a4d52" stroke-width="1.2"/><text x="1247.8" y="871.8" font-size="10.5" text-anchor="middle" fill="#222">2</text>
<rect x="1094.7" y="919.3" width="26" height="13" rx="6.5" fill="#fff" stroke="#4a4d52" stroke-width="1.2"/><text x="1107.7" y="929.3" font-size="10.5" text-anchor="middle" fill="#222">210</text>
<rect x="1251.6" y="751.1" width="14" height="13" rx="6.5" fill="#fff" stroke="#4a4d52" stroke-width="1.2"/><text x="1258.6" y="761.1" font-size="10.5" text-anchor="middle" fill="#222">2</text>
<rect x="1444.0" y="755.4" width="26" height="13" rx="6.5" fill="#fff" stroke="#4a4d52" stroke-width="1.2"/><text x="1457.0" y="765.4" font-size="10.5" text-anchor="middle" fill="#222">213</text>
<rect x="1501.5" y="754.5" width="26" height="13" rx="6.5" fill="#fff" stroke="#4a4d52" stroke-width="1.2"/><text x="1514.5" y="764.5" font-size="10.5" text-anchor="middle" fill="#222">313</text>
<rect x="1461.7" y="838.0" width="26" height="13" rx="6.5" fill="#fff" stroke="#4a4d52" stroke-width="1.2"/><text x="1474.7" y="848.0" font-size="10.5" text-anchor="middle" fill="#222">404</text>
<rect x="1466.0" y="892.0" width="26" height="13" rx="6.5" fill="#fff" stroke="#4a4d52" stroke-width="1.2"/><text x="1479.0" y="902.0" font-size="10.5" text-anchor="middle" fill="#222">328</text>
<rect x="1474.7" y="922.3" width="26" height="13" rx="6.5" fill="#fff" stroke="#4a4d52" stroke-width="1.2"/><text x="1487.7" y="932.3" font-size="10.5" text-anchor="middle" fill="#222">331</text>
<rect x="1403.4" y="950.4" width="26" height="13" rx="6.5" fill="#fff" stroke="#4a4d52" stroke-width="1.2"/><text x="1416.4" y="960.4" font-size="10.5" text-anchor="middle" fill="#222">333</text>
<rect x="1531.0" y="711.5" width="26" height="13" rx="6.5" fill="#fff" stroke="#4a4d52" stroke-width="1.2"/><text x="1544.0" y="721.5" font-size="10.5" text-anchor="middle" fill="#222">300</text>
<rect x="1586.7" y="780.2" width="20" height="13" rx="6.5" fill="#fff" stroke="#4a4d52" stroke-width="1.2"/><text x="1596.7" y="790.2" font-size="10.5" text-anchor="middle" fill="#222">10</text>
<rect x="1629.7" y="708.3" width="14" height="13" rx="6.5" fill="#fff" stroke="#4a4d52" stroke-width="1.2"/><text x="1636.7" y="718.3" font-size="10.5" text-anchor="middle" fill="#222">1</text>
<rect x="1582.6" y="884.2" width="20" height="13" rx="6.5" fill="#fff" stroke="#4a4d52" stroke-width="1.2"/><text x="1592.6" y="894.2" font-size="10.5" text-anchor="middle" fill="#222">16</text>
<rect x="1715.1" y="887.4" width="14" height="13" rx="6.5" fill="#fff" stroke="#4a4d52" stroke-width="1.2"/><text x="1722.1" y="897.4" font-size="10.5" text-anchor="middle" fill="#222">1</text>
<rect x="1757.2" y="951.3" width="20" height="13" rx="6.5" fill="#fff" stroke="#4a4d52" stroke-width="1.2"/><text x="1767.2" y="961.3" font-size="10.5" text-anchor="middle" fill="#222">24</text>
<rect x="1837.3" y="669.3" width="26" height="13" rx="6.5" fill="#fff" stroke="#4a4d52" stroke-width="1.2"/><text x="1850.3" y="679.3" font-size="10.5" text-anchor="middle" fill="#222">347</text>
<rect x="1833.6" y="691.3" width="20" height="13" rx="6.5" fill="#fff" stroke="#4a4d52" stroke-width="1.2"/><text x="1843.6" y="701.3" font-size="10.5" text-anchor="middle" fill="#222">47</text>
<path d="M396.6,676.8 h24 v7 q0,5 -12.0,6 q-12.0,-1 -12.0,-6z" fill="#fff" stroke="#4a4d52" stroke-width="1.2"/><text x="408.6" y="686.3" font-size="10.5" text-anchor="middle" fill="#222">220</text>
<path d="M297.0,700.8 h18 v7 q0,5 -9.0,6 q-9.0,-1 -9.0,-6z" fill="#fff" stroke="#4a4d52" stroke-width="1.2"/><text x="306.0" y="710.3" font-size="10.5" text-anchor="middle" fill="#222">48</text>
<path d="M579.8,695.0 h24 v7 q0,5 -12.0,6 q-12.0,-1 -12.0,-6z" fill="#fff" stroke="#4a4d52" stroke-width="1.2"/><text x="591.8" y="704.5" font-size="10.5" text-anchor="middle" fill="#222">259</text>
<path d="M643.0,680.6 h24 v7 q0,5 -12.0,6 q-12.0,-1 -12.0,-6z" fill="#fff" stroke="#4a4d52" stroke-width="1.2"/><text x="655.0" y="690.1" font-size="10.5" text-anchor="middle" fill="#222">522</text>
<path d="M438.9,765.4 h18 v7 q0,5 -9.0,6 q-9.0,-1 -9.0,-6z" fill="#fff" stroke="#4a4d52" stroke-width="1.2"/><text x="447.9" y="774.9" font-size="10.5" text-anchor="middle" fill="#222">48</text>
<path d="M520.4,762.5 h18 v7 q0,5 -9.0,6 q-9.0,-1 -9.0,-6z" fill="#fff" stroke="#4a4d52" stroke-width="1.2"/><text x="529.4" y="772.0" font-size="10.5" text-anchor="middle" fill="#222">48</text>
<path d="M302.2,836.7 h24 v7 q0,5 -12.0,6 q-12.0,-1 -12.0,-6z" fill="#fff" stroke="#4a4d52" stroke-width="1.2"/><text x="314.2" y="846.2" font-size="10.5" text-anchor="middle" fill="#222">220</text>
<path d="M422.5,839.2 h24 v7 q0,5 -12.0,6 q-12.0,-1 -12.0,-6z" fill="#fff" stroke="#4a4d52" stroke-width="1.2"/><text x="434.5" y="848.7" font-size="10.5" text-anchor="middle" fill="#222">259</text>
<path d="M391.0,956.0 h24 v7 q0,5 -12.0,6 q-12.0,-1 -12.0,-6z" fill="#fff" stroke="#4a4d52" stroke-width="1.2"/><text x="403.0" y="965.5" font-size="10.5" text-anchor="middle" fill="#222">259</text>
<path d="M630.3,870.3 h24 v7 q0,5 -12.0,6 q-12.0,-1 -12.0,-6z" fill="#fff" stroke="#4a4d52" stroke-width="1.2"/><text x="642.3" y="879.8" font-size="10.5" text-anchor="middle" fill="#222">340</text>
<path d="M601.5,964.6 h24 v7 q0,5 -12.0,6 q-12.0,-1 -12.0,-6z" fill="#fff" stroke="#4a4d52" stroke-width="1.2"/><text x="613.5" y="974.1" font-size="10.5" text-anchor="middle" fill="#222">211</text>
<path d="M669.0,858.0 h24 v7 q0,5 -12.0,6 q-12.0,-1 -12.0,-6z" fill="#fff" stroke="#4a4d52" stroke-width="1.2"/><text x="681.0" y="867.5" font-size="10.5" text-anchor="middle" fill="#222">522</text>
<path d="M719.6,776.6 h18 v7 q0,5 -9.0,6 q-9.0,-1 -9.0,-6z" fill="#fff" stroke="#4a4d52" stroke-width="1.2"/><text x="728.6" y="786.1" font-size="10.5" text-anchor="middle" fill="#222">50</text>
<path d="M850.7,814.3 h18 v7 q0,5 -9.0,6 q-9.0,-1 -9.0,-6z" fill="#fff" stroke="#4a4d52" stroke-width="1.2"/><text x="859.7" y="823.8" font-size="10.5" text-anchor="middle" fill="#222">50</text>
<path d="M740.0,956.6 h24 v7 q0,5 -12.0,6 q-12.0,-1 -12.0,-6z" fill="#fff" stroke="#4a4d52" stroke-width="1.2"/><text x="752.0" y="966.1" font-size="10.5" text-anchor="middle" fill="#222">211</text>
<path d="M1047.5,937.4 h12 v7 q0,5 -6.0,6 q-6.0,-1 -6.0,-6z" fill="#fff" stroke="#4a4d52" stroke-width="1.2"/><text x="1053.5" y="946.9" font-size="10.5" text-anchor="middle" fill="#222">1</text>
<path d="M1295.8,791.8 h18 v7 q0,5 -9.0,6 q-9.0,-1 -9.0,-6z" fill="#fff" stroke="#4a4d52" stroke-width="1.2"/><text x="1304.8" y="801.3" font-size="10.5" text-anchor="middle" fill="#222">50</text>
<path d="M1436.3,842.4 h18 v7 q0,5 -9.0,6 q-9.0,-1 -9.0,-6z" fill="#fff" stroke="#4a4d52" stroke-width="1.2"/><text x="1445.3" y="851.9" font-size="10.5" text-anchor="middle" fill="#222">50</text>
<path d="M1438.5,956.1 h18 v7 q0,5 -9.0,6 q-9.0,-1 -9.0,-6z" fill="#fff" stroke="#4a4d52" stroke-width="1.2"/><text x="1447.5" y="965.6" font-size="10.5" text-anchor="middle" fill="#222">50</text>
<path d="M1496.1,708.8 h24 v7 q0,5 -12.0,6 q-12.0,-1 -12.0,-6z" fill="#fff" stroke="#4a4d52" stroke-width="1.2"/><text x="1508.1" y="718.3" font-size="10.5" text-anchor="middle" fill="#222">301</text>
<path d="M1662.4,919.8 h24 v7 q0,5 -12.0,6 q-12.0,-1 -12.0,-6z" fill="#fff" stroke="#4a4d52" stroke-width="1.2"/><text x="1674.4" y="929.3" font-size="10.5" text-anchor="middle" fill="#222">113</text>
<path d="M1748.1,927.8 h12 v7 q0,5 -6.0,6 q-6.0,-1 -6.0,-6z" fill="#fff" stroke="#4a4d52" stroke-width="1.2"/><text x="1754.1" y="937.3" font-size="10.5" text-anchor="middle" fill="#222">9</text>
<path d="M1805.0,856.5 h12 v7 q0,5 -6.0,6 q-6.0,-1 -6.0,-6z" fill="#fff" stroke="#4a4d52" stroke-width="1.2"/><text x="1811.0" y="866.0" font-size="10.5" text-anchor="middle" fill="#222">9</text>
<path d="M1609.0,949.5 h18 v7 q0,5 -9.0,6 q-9.0,-1 -9.0,-6z" fill="#fff" stroke="#4a4d52" stroke-width="1.2"/><text x="1618.0" y="959.0" font-size="10.5" text-anchor="middle" fill="#222">13</text>
<path d="M492.3,941.7 h18 v8 q0,5 -9.0,6 q-9.0,-1 -9.0,-6z" fill="#3a6fd0"/><path d="M492.3,941.2 h18 v3 h-18z" fill="#d33b3b"/><text x="501.3" y="952.2" font-size="9.5" font-weight="bold" text-anchor="middle" fill="#fff">81</text>
<path d="M715.1,846.4 h18 v8 q0,5 -9.0,6 q-9.0,-1 -9.0,-6z" fill="#3a6fd0"/><path d="M715.1,845.9 h18 v3 h-18z" fill="#d33b3b"/><text x="724.1" y="856.9" font-size="9.5" font-weight="bold" text-anchor="middle" fill="#fff">66</text>
<path d="M946.7,873.0 h18 v8 q0,5 -9.0,6 q-9.0,-1 -9.0,-6z" fill="#3a6fd0"/><path d="M946.7,872.5 h18 v3 h-18z" fill="#d33b3b"/><text x="955.7" y="883.5" font-size="9.5" font-weight="bold" text-anchor="middle" fill="#fff">66</text>
<path d="M994.8,708.3 h24 v8 q0,5 -12.0,6 q-12.0,-1 -12.0,-6z" fill="#3a6fd0"/><path d="M994.8,707.8 h24 v3 h-24z" fill="#d33b3b"/><text x="1006.8" y="718.8" font-size="9.5" font-weight="bold" text-anchor="middle" fill="#fff">270</text>
<path d="M1019.8,898.5 h24 v8 q0,5 -12.0,6 q-12.0,-1 -12.0,-6z" fill="#3a6fd0"/><path d="M1019.8,898.0 h24 v3 h-24z" fill="#d33b3b"/><text x="1031.8" y="909.0" font-size="9.5" font-weight="bold" text-anchor="middle" fill="#fff">495</text>
<path d="M1014.8,938.5 h18 v8 q0,5 -9.0,6 q-9.0,-1 -9.0,-6z" fill="#3a6fd0"/><path d="M1014.8,938.0 h18 v3 h-18z" fill="#d33b3b"/><text x="1023.8" y="949.0" font-size="9.5" font-weight="bold" text-anchor="middle" fill="#fff">95</text>
<path d="M1222.0,694.5 h24 v8 q0,5 -12.0,6 q-12.0,-1 -12.0,-6z" fill="#3a6fd0"/><path d="M1222.0,694.0 h24 v3 h-24z" fill="#d33b3b"/><text x="1234.0" y="705.0" font-size="9.5" font-weight="bold" text-anchor="middle" fill="#fff">895</text>
<path d="M1142.2,748.2 h18 v8 q0,5 -9.0,6 q-9.0,-1 -9.0,-6z" fill="#3a6fd0"/><path d="M1142.2,747.7 h18 v3 h-18z" fill="#d33b3b"/><text x="1151.2" y="758.7" font-size="9.5" font-weight="bold" text-anchor="middle" fill="#fff">95</text>
<path d="M1138.9,813.8 h24 v8 q0,5 -12.0,6 q-12.0,-1 -12.0,-6z" fill="#3a6fd0"/><path d="M1138.9,813.3 h24 v3 h-24z" fill="#d33b3b"/><text x="1150.9" y="824.3" font-size="9.5" font-weight="bold" text-anchor="middle" fill="#fff">495</text>
<text x="1065.0" y="906.0" font-size="12.5" fill="#2e3033" stroke="#fff" stroke-width="2.8" paint-order="stroke" stroke-linejoin="round">Alexandria</text><text x="1065.0" y="906.0" font-size="12.5" fill="#2e3033" stroke="#2e3033" stroke-width="0.25">Alexandria</text>
<circle cx="1085" cy="780.5" r="22" fill="none" stroke="#a0282a" stroke-width="3" opacity="0.28" stroke-dasharray="22 6"/><circle cx="1085" cy="780.5" r="17.2" fill="none" stroke="#a0282a" stroke-width="3.2" opacity="0.45"/><circle cx="1085" cy="780.5" r="12.8" fill="#a52623"/><text x="1085" y="785.5" font-size="14" font-weight="bold" text-anchor="middle" fill="#fff">14</text>
<circle cx="1121" cy="880" r="22" fill="none" stroke="#a0282a" stroke-width="3" opacity="0.28" stroke-dasharray="22 6"/><circle cx="1121" cy="880" r="17.2" fill="none" stroke="#a0282a" stroke-width="3.2" opacity="0.45"/><circle cx="1121" cy="880" r="12.8" fill="#a52623"/><text x="1121" y="885" font-size="14" font-weight="bold" text-anchor="middle" fill="#fff">56</text>
<circle cx="1058" cy="903" r="22" fill="none" stroke="#a0282a" stroke-width="3" opacity="0.28" stroke-dasharray="22 6"/><circle cx="1058" cy="903" r="17.2" fill="none" stroke="#a0282a" stroke-width="3.2" opacity="0.45"/><circle cx="1058" cy="903" r="12.8" fill="#a52623"/><text x="1058" y="908" font-size="14" font-weight="bold" text-anchor="middle" fill="#fff">16</text>
<text x="292" y="989" font-size="17" font-weight="bold" fill="#4285f4" stroke="#fff" stroke-width="1.5" paint-order="stroke" letter-spacing="-0.5">G<tspan fill="#ea4335">o</tspan><tspan fill="#fbbc05">o</tspan><tspan fill="#4285f4">g</tspan><tspan fill="#34a853">l</tspan><tspan fill="#ea4335">e</tspan></text>
<rect x="1836" y="821" width="40" height="40" rx="2" fill="#fff"/>
<g fill="#fbb41f" stroke="#d9880e" stroke-width="0.6"><circle cx="1855.6" cy="831" r="5.2"/><path d="M1851,836.3 H1860.2 Q1862.2,836.3 1862.6,838.5 L1864,846 Q1864,847 1863,847 H1861.2 V856 H1856.3 V848.5 H1854.9 V856 H1850 V847 H1848.2 Q1847.2,847 1847.2,846 L1848.6,838.5 Q1849,836.3 1851,836.3z"/></g><path d="M1853,836.5 h5.4 l-2.7,4.2z" fill="#e0701a"/>
<rect x="1836" y="893" width="40" height="81" rx="2" fill="#fff"/><path d="M1841,933.5 h30" stroke="#e6e6e6" stroke-width="1"/>
<path d="M1847,913 h18 M1856,904 v18" stroke="#666" stroke-width="3.5"/><path d="M1847,953.8 h18" stroke="#666" stroke-width="3.6"/>
<rect x="1489" y="984" width="397" height="14" fill="#f5f5f5" opacity="0.8"/>
<text x="1495" y="994.5" font-size="10" fill="#444">Keyboard shortcuts</text>
<text x="1594" y="994.5" font-size="10" fill="#444">Map data ©2022 Google</text>
<text x="1720" y="994.5" font-size="10" fill="#444">Terms of Use</text>
<text x="1793" y="994.5" font-size="10" fill="#444">Report a map error</text>
<path d="M1588,986 v11" stroke="#ddd" stroke-width="1"/>
<path d="M1713,986 v11" stroke="#ddd" stroke-width="1"/>
<path d="M1787,986 v11" stroke="#ddd" stroke-width="1"/>
</svg></div>
</div>
</body></html>
